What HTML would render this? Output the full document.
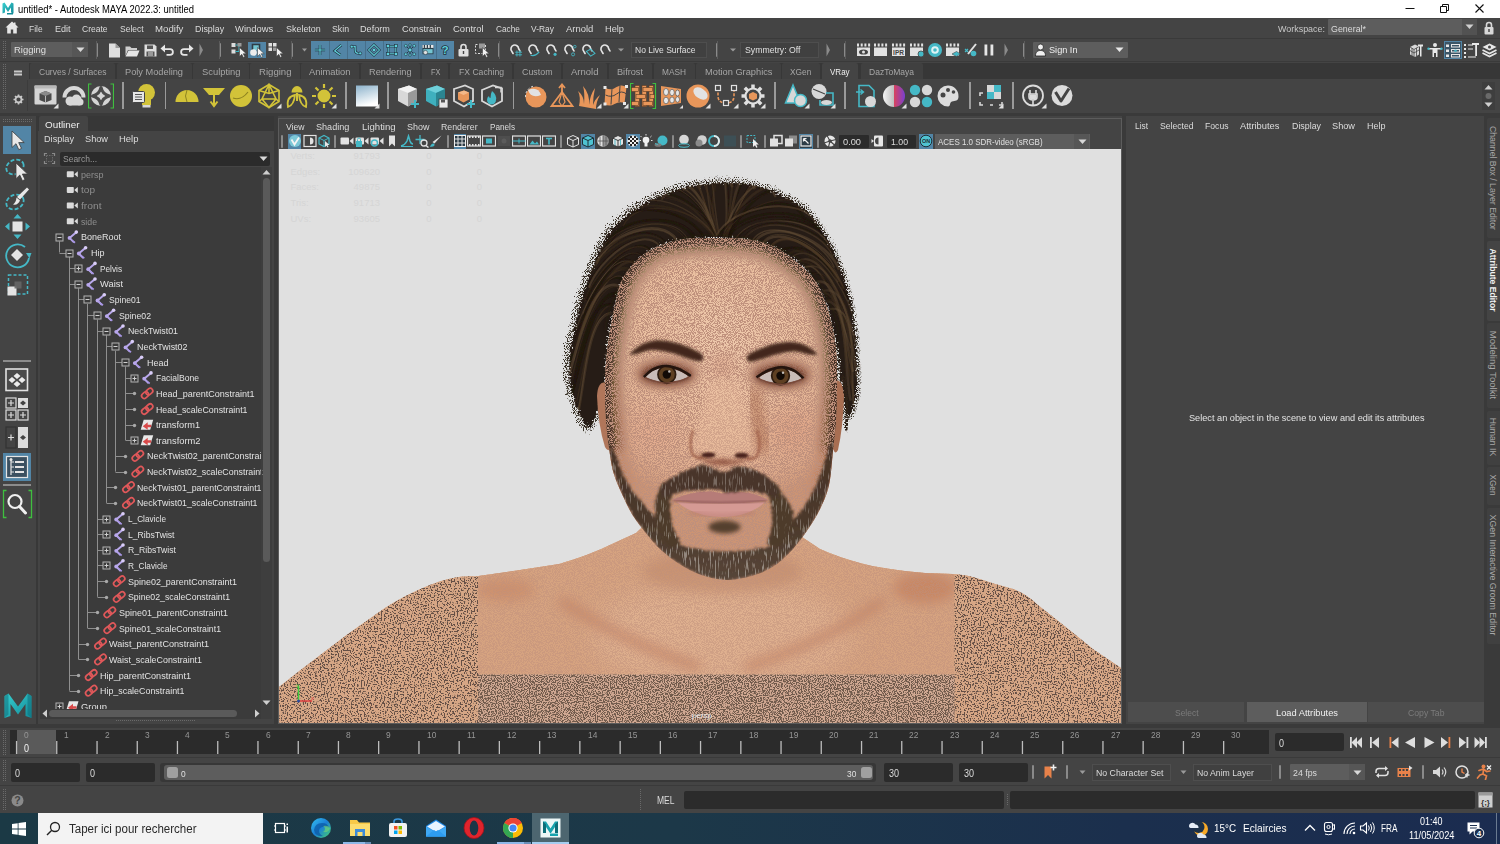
<!DOCTYPE html>
<html lang="en"><head><meta charset="utf-8"><title>untitled* - Autodesk MAYA 2022.3: untitled</title>
<style>
html,body{margin:0;padding:0;background:#444;overflow:hidden}
body{width:1500px;height:844px;position:relative;font-family:"Liberation Sans",sans-serif;}
#app{position:absolute;left:0;top:0;width:1500px;height:844px;overflow:hidden;background:#444}
.r{position:absolute;display:block}
.t{position:absolute;white-space:nowrap;font-family:"Liberation Sans",sans-serif;transform-origin:0 50%}
</style></head><body><div id="app">
<div class="r" style="left:0px;top:0px;width:1500px;height:18px;background:#ffffff;"></div>
<svg class="r" style="left:2px;top:2px;" width="12" height="13" viewBox="0 0 12 13"><defs><linearGradient id="mg0" x1="0" y1="0" x2="1" y2="1"><stop offset="0" stop-color="#3ad0d0"/><stop offset="1" stop-color="#128a98"/></linearGradient></defs><path d="M0.5 11.5V1.5l2-1 3.5 5.5 3.5-5.5 2 1v10l-2.5-1V5.5L6 10 3 5.5v5z" fill="url(#mg0)"/><rect x="5" y="11" width="6" height="1.5" fill="#128a98"/></svg>
<span class="t" style="left:18.0px;top:3.1px;font-size:10px;line-height:14px;color:#000;transform:scaleX(0.9441);">untitled* - Autodesk MAYA 2022.3: untitled</span>
<svg class="r" style="left:1400px;top:0px;" width="100" height="18" viewBox="0 0 100 18"><path d="M5.5 8.5h9" stroke="#111" stroke-width="1" fill="none"/><path d="M40.5 6.5h6v6h-6zM42.5 6.5v-2h6v6h-2" stroke="#111" stroke-width="1" fill="none"/><path d="M75.5 4.5l8 8M83.5 4.5l-8 8" stroke="#111" stroke-width="1.1" fill="none"/></svg>
<div class="r" style="left:0px;top:18px;width:1500px;height:795px;background:#444444;"></div>
<svg class="r" style="left:5px;top:21px;" width="14" height="13" viewBox="0 0 14 13"><path d="M7 0.5L0.5 6.5h1.7v6h3.6V8.5h2.4v4h3.6v-6h1.7L10.5 3.6V1.5H9v0.8z" fill="#e6e6e6"/></svg>
<span class="t" style="left:29.0px;top:23.0px;font-size:9.3px;line-height:13.3px;color:#dcdcdc;transform:scaleX(0.9079);">File</span>
<span class="t" style="left:54.6px;top:23.0px;font-size:9.3px;line-height:13.3px;color:#dcdcdc;transform:scaleX(0.9738);">Edit</span>
<span class="t" style="left:82.2px;top:23.0px;font-size:9.3px;line-height:13.3px;color:#dcdcdc;transform:scaleX(0.9174);">Create</span>
<span class="t" style="left:119.5px;top:23.0px;font-size:9.3px;line-height:13.3px;color:#dcdcdc;transform:scaleX(0.9134);">Select</span>
<span class="t" style="left:154.6px;top:23.0px;font-size:9.3px;line-height:13.3px;color:#dcdcdc;transform:scaleX(1.0372);">Modify</span>
<span class="t" style="left:194.5px;top:23.0px;font-size:9.3px;line-height:13.3px;color:#dcdcdc;transform:scaleX(0.9546);">Display</span>
<span class="t" style="left:235.0px;top:23.0px;font-size:9.3px;line-height:13.3px;color:#dcdcdc;transform:scaleX(1.0129);">Windows</span>
<span class="t" style="left:285.5px;top:23.0px;font-size:9.3px;line-height:13.3px;color:#dcdcdc;transform:scaleX(0.9619);">Skeleton</span>
<span class="t" style="left:332.0px;top:23.0px;font-size:9.3px;line-height:13.3px;color:#dcdcdc;transform:scaleX(0.9400);">Skin</span>
<span class="t" style="left:360.4px;top:23.0px;font-size:9.3px;line-height:13.3px;color:#dcdcdc;transform:scaleX(0.9810);">Deform</span>
<span class="t" style="left:402.3px;top:23.0px;font-size:9.3px;line-height:13.3px;color:#dcdcdc;transform:scaleX(0.9902);">Constrain</span>
<span class="t" style="left:453.2px;top:23.0px;font-size:9.3px;line-height:13.3px;color:#dcdcdc;transform:scaleX(1.0210);">Control</span>
<span class="t" style="left:495.5px;top:23.0px;font-size:9.3px;line-height:13.3px;color:#dcdcdc;transform:scaleX(0.8894);">Cache</span>
<span class="t" style="left:531.1px;top:23.0px;font-size:9.3px;line-height:13.3px;color:#dcdcdc;transform:scaleX(0.9045);">V-Ray</span>
<span class="t" style="left:565.7px;top:23.0px;font-size:9.3px;line-height:13.3px;color:#dcdcdc;transform:scaleX(1.0159);">Arnold</span>
<span class="t" style="left:604.6px;top:23.0px;font-size:9.3px;line-height:13.3px;color:#dcdcdc;transform:scaleX(0.9937);">Help</span>
<span class="t" style="left:1278.0px;top:23.0px;font-size:9.3px;line-height:13.3px;color:#c8c8c8;transform:scaleX(0.9609);">Workspace:</span>
<div class="r" style="left:1328px;top:19px;width:149px;height:16px;background:#5d5d5d;border-radius:1px"></div>
<div class="r" style="left:1462px;top:19px;width:15px;height:16px;background:#525252;"></div>
<span class="t" style="left:1331.0px;top:22.5px;font-size:9.3px;line-height:13.3px;color:#dcdcdc;transform:scaleX(0.9539);">General*</span>
<svg class="r" style="left:1465px;top:24px;" width="9" height="6" viewBox="0 0 9 6"><path d="M0.5 0.5h8L4.5 5z" fill="#d0d0d0"/></svg>
<svg class="r" style="left:1484px;top:21px;" width="10" height="14" viewBox="0 0 10 14"><path d="M2.5 6V4a2.5 2.5 0 0 1 5 0v2" stroke="#d8d8d8" stroke-width="1.6" fill="none"/><rect x="0.5" y="6" width="9" height="7.5" rx="1" fill="#d8d8d8"/><rect x="4.3" y="8" width="1.4" height="3" fill="#444"/></svg>
<div class="r" style="left:0px;top:38px;width:1500px;height:1px;background:#3a3a3a;"></div>
<svg class="r" style="left:2px;top:41px;" width="6" height="18" viewBox="0 0 6 18"><g fill="#6a6a6a"><rect x="1" y="0" width="1" height="1"/><rect x="1" y="2" width="1" height="1"/><rect x="1" y="4" width="1" height="1"/><rect x="1" y="6" width="1" height="1"/><rect x="1" y="8" width="1" height="1"/><rect x="1" y="10" width="1" height="1"/><rect x="1" y="12" width="1" height="1"/><rect x="1" y="14" width="1" height="1"/><rect x="1" y="16" width="1" height="1"/><rect x="3" y="0" width="1" height="1"/><rect x="3" y="2" width="1" height="1"/><rect x="3" y="4" width="1" height="1"/><rect x="3" y="6" width="1" height="1"/><rect x="3" y="8" width="1" height="1"/><rect x="3" y="10" width="1" height="1"/><rect x="3" y="12" width="1" height="1"/><rect x="3" y="14" width="1" height="1"/><rect x="3" y="16" width="1" height="1"/></g></svg>
<div class="r" style="left:11px;top:42px;width:77px;height:15px;background:#5d5d5d;border-radius:1px"></div>
<div class="r" style="left:72px;top:42px;width:16px;height:15px;background:#565656;"></div>
<span class="t" style="left:13.5px;top:44.2px;font-size:9.3px;line-height:13.3px;color:#e0e0e0;transform:scaleX(1.0150);">Rigging</span>
<svg class="r" style="left:76px;top:47px;" width="9" height="6" viewBox="0 0 9 6"><path d="M0.5 0.5h8L4.5 5z" fill="#d8d8d8"/></svg>
<div class="r" style="left:95.5px;top:43px;width:2px;height:14px;background:#8a8a8a;border-radius:1px"></div><div class="r" style="left:96px;top:41px;width:1px;height:18px;background:#5c5c5c;"></div>
<svg class="r" style="left:108px;top:43px;" width="13" height="15" viewBox="0 0 13 15"><path d="M1 0.5h6.5L12 5v9.5H1z" fill="#dedede"/><path d="M7.5 0.5V5H12z" fill="#9a9a9a"/></svg>
<svg class="r" style="left:125px;top:44px;" width="15" height="13" viewBox="0 0 15 13"><path d="M0.5 2.5h4.5l1.5 1.5H12v2H3L0.5 12z" fill="#cfcfcf"/><path d="M3.5 6.5H14.5L12 12.5H0.5z" fill="#e6e6e6"/></svg>
<svg class="r" style="left:144px;top:44px;" width="13" height="13" viewBox="0 0 13 13"><path d="M0.5 0.5h10L12.5 2.5v10h-12z" fill="#dedede"/><rect x="3" y="1.5" width="6" height="3.5" fill="#555"/><rect x="2.5" y="7.5" width="8" height="5" fill="#555"/><rect x="4" y="8.5" width="5" height="1" fill="#dedede"/><rect x="4" y="10.5" width="5" height="1" fill="#dedede"/></svg>
<svg class="r" style="left:160px;top:44px;" width="15" height="12" viewBox="0 0 15 12"><path d="M5 0.5L0.5 4.5 5 8.5V6h5a2 2 0 0 1 0 4H6.5v1.8H10a3.8 3.8 0 0 0 0-7.6H5z" fill="#e6e6e6"/></svg>
<svg class="r" style="left:179px;top:44px;" width="15" height="12" viewBox="0 0 15 12"><path d="M10 0.5L14.5 4.5 10 8.5V6H5a2 2 0 0 0 0 4h3.5v1.8H5a3.8 3.8 0 0 1 0-7.6h5z" fill="#e6e6e6"/></svg>
<svg class="r" style="left:199px;top:43px;" width="5" height="14" viewBox="0 0 5 14"><path d="M0.5 0.5L4 7 0.5 13.5z" fill="#8a8a8a"/></svg>
<div class="r" style="left:218.5px;top:43px;width:2px;height:14px;background:#8a8a8a;border-radius:1px"></div><div class="r" style="left:219px;top:41px;width:1px;height:18px;background:#5c5c5c;"></div>
<svg class="r" style="left:231px;top:42px;" width="15" height="16" viewBox="0 0 15 16"><rect x="0.5" y="1" width="4" height="4" fill="#dcdcdc"/><rect x="0.5" y="7.5" width="4" height="4" fill="#dcdcdc"/><path d="M4.5 3h3.5v6.5H4.5" stroke="#3bb3c2" fill="none"/><rect x="6.5" y="1" width="4" height="3.5" fill="#9a9a9a"/><path d="M8.5 5.5v9l2.3-2.2 1.6 3.2 1.4-0.7-1.6-3.1h3z" fill="#f2f2f2" stroke="#333" stroke-width=".5"/></svg>
<div class="r" style="left:248px;top:42px;width:18px;height:16px;background:#5285a6;"></div>
<svg class="r" style="left:249px;top:42px;" width="16" height="16" viewBox="0 0 16 16"><path d="M3.5 8V2.5h7V8" stroke="#2f3d46" stroke-width="1.6" fill="#74c6d2"/><circle cx="4.5" cy="10.5" r="3.3" fill="#ececec"/><path d="M8.5 5.5v9l2.3-2.2 1.6 3.2 1.4-0.7-1.6-3.1h3z" fill="#f2f2f2" stroke="#333" stroke-width=".5"/></svg>
<svg class="r" style="left:268px;top:42px;" width="15" height="16" viewBox="0 0 15 16"><g fill="#e0e0e0"><rect x="0.5" y="1" width="3.5" height="3.5"/><rect x="5" y="1" width="3.5" height="3.5"/><rect x="0.5" y="5.5" width="3.5" height="3.5"/></g><rect x="5" y="5.5" width="3.5" height="3.5" fill="#9a9a9a"/><path d="M8.5 5.5v9l2.3-2.2 1.6 3.2 1.4-0.7-1.6-3.1h3z" fill="#f2f2f2" stroke="#333" stroke-width=".5"/></svg>
<div class="r" style="left:290.5px;top:43px;width:2px;height:14px;background:#8a8a8a;border-radius:1px"></div><div class="r" style="left:291px;top:41px;width:1px;height:18px;background:#5c5c5c;"></div>
<svg class="r" style="left:302px;top:48px;" width="5" height="4" viewBox="0 0 5 4"><path d="M0 0.5h5L2.5 3.5z" fill="#9a9a9a"/></svg>
<div class="r" style="left:311px;top:41px;width:143px;height:18px;background:#5285a6;"></div>
<div class="r" style="left:328.9px;top:41px;width:1px;height:18px;background:#466f8b;"></div>
<div class="r" style="left:346.8px;top:41px;width:1px;height:18px;background:#466f8b;"></div>
<div class="r" style="left:364.7px;top:41px;width:1px;height:18px;background:#466f8b;"></div>
<div class="r" style="left:382.6px;top:41px;width:1px;height:18px;background:#466f8b;"></div>
<div class="r" style="left:400.5px;top:41px;width:1px;height:18px;background:#466f8b;"></div>
<div class="r" style="left:418.4px;top:41px;width:1px;height:18px;background:#466f8b;"></div>
<div class="r" style="left:436.3px;top:41px;width:1px;height:18px;background:#466f8b;"></div>
<svg class="r" style="left:312px;top:42px;" width="16" height="16" viewBox="0 0 16 16"><g transform="translate(8 8) scale(.84) translate(-8 -8)"><path d="M8 2v12M2 8h12" stroke="#1f2f3a" stroke-width="3"/><path d="M8 2v12M2 8h12" stroke="#5fd0dc" stroke-width="1.4"/></g></svg>
<svg class="r" style="left:330px;top:42px;" width="16" height="16" viewBox="0 0 16 16"><g transform="translate(8 8) scale(.84) translate(-8 -8)"><path d="M12 2L4 9l7 5" stroke="#1f2f3a" stroke-width="3" fill="none"/><path d="M12 2L4 9l7 5" stroke="#5fd0dc" stroke-width="1.4" fill="none"/></g></svg>
<svg class="r" style="left:348px;top:42px;" width="16" height="16" viewBox="0 0 16 16"><g transform="translate(8 8) scale(.84) translate(-8 -8)"><path d="M2 4h5v4q0 4 4 4h3" stroke="#1f2f3a" stroke-width="3" fill="none"/><path d="M2 4h5v4q0 4 4 4h3" stroke="#5fd0dc" stroke-width="1.4" fill="none"/><circle cx="3" cy="4" r="1.8" fill="#5fd0dc" stroke="#1f2f3a" stroke-width=".8"/><circle cx="13" cy="12" r="1.8" fill="#5fd0dc" stroke="#1f2f3a" stroke-width=".8"/></g></svg>
<svg class="r" style="left:366px;top:42px;" width="16" height="16" viewBox="0 0 16 16"><g transform="translate(8 8) scale(.84) translate(-8 -8)"><path d="M8 1.5L14.5 8 8 14.5 1.5 8z" stroke="#1f2f3a" stroke-width="2.6" fill="none"/><path d="M8 1.5L14.5 8 8 14.5 1.5 8z" stroke="#5fd0dc" stroke-width="1.2" fill="none"/><path d="M8 5.5L10.5 8 8 10.5 5.5 8z" fill="#5fd0dc" stroke="#1f2f3a" stroke-width=".7"/></g></svg>
<svg class="r" style="left:384px;top:42px;" width="16" height="16" viewBox="0 0 16 16"><g transform="translate(8 8) scale(.84) translate(-8 -8)"><rect x="3.5" y="3.5" width="9" height="9" stroke="#1f2f3a" stroke-width="2.6" fill="none"/><rect x="3.5" y="3.5" width="9" height="9" stroke="#5fd0dc" stroke-width="1.2" fill="none"/><g fill="#5fd0dc" stroke="#1f2f3a" stroke-width=".7"><rect x="1.5" y="1.5" width="3.5" height="3.5"/><rect x="11" y="1.5" width="3.5" height="3.5"/><rect x="1.5" y="11" width="3.5" height="3.5"/><rect x="11" y="11" width="3.5" height="3.5"/></g></g></svg>
<svg class="r" style="left:401.5px;top:42px;" width="16" height="16" viewBox="0 0 16 16"><g transform="translate(8 8) scale(.84) translate(-8 -8)"><g stroke="#1f2f3a" stroke-width="1"><path d="M8 8L3 3M8 8l5-5M8 8l-5 5M8 8l5 5M8 8V2M8 8v6"/></g><g fill="#5fd0dc" stroke="#1f2f3a" stroke-width=".7"><circle cx="8" cy="8" r="2.3"/><circle cx="3" cy="3" r="1.7"/><circle cx="13" cy="3" r="1.7"/><circle cx="3" cy="13" r="1.7"/><circle cx="13" cy="13" r="1.7"/><circle cx="8" cy="2" r="1.5"/><circle cx="8" cy="14" r="1.5"/></g></g></svg>
<svg class="r" style="left:419.5px;top:42px;" width="16" height="16" viewBox="0 0 16 16"><g transform="translate(8 8) scale(.84) translate(-8 -8)"><rect x="1.5" y="2" width="13" height="11" fill="#2d3f4a"/><rect x="1.5" y="2" width="13" height="3.5" fill="#e8e8e8"/><g fill="#2d3f4a"><rect x="3" y="2" width="1.5" height="3.5"/><rect x="6.5" y="2" width="1.5" height="3.5"/><rect x="10" y="2" width="1.5" height="3.5"/></g><rect x="2.5" y="7" width="11" height="5" fill="#74c6d2"/><circle cx="5" cy="11" r="2.5" fill="#e0e0e0" stroke="#2d3f4a" stroke-width=".7"/></g></svg>
<svg class="r" style="left:437px;top:42px;" width="16" height="16" viewBox="0 0 16 16"><g transform="translate(8 8) scale(.84) translate(-8 -8)"><text x="8" y="13" font-size="14" font-family="Liberation Sans, sans-serif" font-weight="bold" text-anchor="middle" fill="#1f2f3a" stroke="#1f2f3a" stroke-width="1.8">?</text><text x="8" y="13" font-size="14" font-family="Liberation Sans, sans-serif" font-weight="bold" text-anchor="middle" fill="#5fd0dc">?</text></g></svg>
<svg class="r" style="left:458px;top:43px;" width="11" height="14" viewBox="0 0 11 14"><path d="M3 6V4a2.5 2.5 0 0 1 5 0v2" stroke="#e0e0e0" stroke-width="1.6" fill="none"/><rect x="0.5" y="6" width="10" height="7.5" rx="1" fill="#e0e0e0"/><rect x="4.8" y="8" width="1.4" height="3" fill="#444"/></svg>
<svg class="r" style="left:474px;top:42px;" width="16" height="16" viewBox="0 0 16 16"><rect x="1.5" y="2.5" width="10" height="9" stroke="#dcdcdc" stroke-dasharray="2 1.5" fill="none"/><rect x="5" y="1.5" width="6" height="5" fill="#9a9a9a"/><path d="M8.5 5.5v9l2.3-2.2 1.6 3.2 1.4-0.7-1.6-3.1h3z" fill="#f2f2f2" stroke="#333" stroke-width=".5"/></svg>
<div class="r" style="left:498px;top:43px;width:2px;height:14px;background:#8a8a8a;border-radius:1px"></div><div class="r" style="left:498.5px;top:41px;width:1px;height:18px;background:#5c5c5c;"></div>
<svg class="r" style="left:508px;top:42px;" width="17" height="17" viewBox="0 0 17 17"><g transform="translate(8.5 8.5) scale(.86) translate(-8.5 -8.5)"><path d="M3 9.5A4.5 4.5 0 1 1 11 6.5l1.5 2.5M3 9.5l1.5 2.5" stroke="#e4e4e4" stroke-width="1.9" fill="none" stroke-linecap="round"/><path d="M7 10.5h8M7 13.5h8M9 8.5v7M12.5 8.5v7" stroke="#45b8c6" stroke-width="1"/></g></svg>
<svg class="r" style="left:526px;top:42px;" width="17" height="17" viewBox="0 0 17 17"><g transform="translate(8.5 8.5) scale(.86) translate(-8.5 -8.5)"><path d="M3 9.5A4.5 4.5 0 1 1 11 6.5l1.5 2.5M3 9.5l1.5 2.5" stroke="#e4e4e4" stroke-width="1.9" fill="none" stroke-linecap="round"/><path d="M4 14q5 2 10-4" stroke="#45b8c6" stroke-width="1.4" fill="none"/></g></svg>
<svg class="r" style="left:544px;top:42px;" width="17" height="17" viewBox="0 0 17 17"><g transform="translate(8.5 8.5) scale(.86) translate(-8.5 -8.5)"><path d="M3 9.5A4.5 4.5 0 1 1 11 6.5l1.5 2.5M3 9.5l1.5 2.5" stroke="#e4e4e4" stroke-width="1.9" fill="none" stroke-linecap="round"/><circle cx="11.5" cy="13" r="1.8" fill="#45b8c6"/></g></svg>
<svg class="r" style="left:562px;top:42px;" width="17" height="17" viewBox="0 0 17 17"><g transform="translate(8.5 8.5) scale(.86) translate(-8.5 -8.5)"><path d="M3 9.5A4.5 4.5 0 1 1 11 6.5l1.5 2.5M3 9.5l1.5 2.5" stroke="#e4e4e4" stroke-width="1.9" fill="none" stroke-linecap="round"/><circle cx="11.5" cy="13" r="1.8" fill="none" stroke="#45b8c6"/><circle cx="13.5" cy="4" r="1.5" fill="none" stroke="#45b8c6"/></g></svg>
<svg class="r" style="left:580px;top:42px;" width="17" height="17" viewBox="0 0 17 17"><g transform="translate(8.5 8.5) scale(.86) translate(-8.5 -8.5)"><path d="M3 9.5A4.5 4.5 0 1 1 11 6.5l1.5 2.5M3 9.5l1.5 2.5" stroke="#e4e4e4" stroke-width="1.9" fill="none" stroke-linecap="round"/><path d="M6 9.5l5-2.5 5 5-5 3z" fill="none" stroke="#45b8c6" stroke-width="1.2"/></g></svg>
<svg class="r" style="left:598px;top:42px;" width="17" height="17" viewBox="0 0 17 17"><g transform="translate(8.5 8.5) scale(.86) translate(-8.5 -8.5)"><path d="M3 9.5A4.5 4.5 0 1 1 11 6.5l1.5 2.5M3 9.5l1.5 2.5" stroke="#e4e4e4" stroke-width="1.9" fill="none" stroke-linecap="round"/></g></svg>
<svg class="r" style="left:618px;top:48px;" width="6" height="4" viewBox="0 0 6 4"><path d="M0 0.5h6L3 3.5z" fill="#9a9a9a"/></svg>
<div class="r" style="left:631px;top:42px;width:76px;height:16px;background:#404040;border:1px solid #4e4e4e;box-sizing:border-box"></div>
<span class="t" style="left:634.5px;top:44.2px;font-size:9.3px;line-height:13.3px;color:#e0e0e0;transform:scaleX(0.9147);">No Live Surface</span>
<div class="r" style="left:716px;top:43px;width:2px;height:14px;background:#8a8a8a;border-radius:1px"></div><div class="r" style="left:716.5px;top:41px;width:1px;height:18px;background:#5c5c5c;"></div>
<svg class="r" style="left:730px;top:48px;" width="6" height="4" viewBox="0 0 6 4"><path d="M0 0.5h6L3 3.5z" fill="#9a9a9a"/></svg>
<div class="r" style="left:740px;top:42px;width:78.5px;height:16px;background:#404040;border:1px solid #4e4e4e;box-sizing:border-box"></div>
<span class="t" style="left:745.0px;top:44.2px;font-size:9.3px;line-height:13.3px;color:#e0e0e0;transform:scaleX(0.9370);">Symmetry: Off</span>
<svg class="r" style="left:826px;top:43px;" width="5" height="14" viewBox="0 0 5 14"><path d="M0.5 0.5L4 7 0.5 13.5z" fill="#8a8a8a"/></svg>
<div class="r" style="left:844px;top:43px;width:2px;height:14px;background:#8a8a8a;border-radius:1px"></div><div class="r" style="left:844.5px;top:41px;width:1px;height:18px;background:#5c5c5c;"></div>
<svg class="r" style="left:855.5px;top:42px;" width="17" height="16" viewBox="0 0 17 16"><g fill="#e2e2e2"><rect x="1" y="5.5" width="13" height="8.5"/><rect x="1" y="1.5" width="2" height="3"/><rect x="4.7" y="1.5" width="2" height="3"/><rect x="8.4" y="1.5" width="2" height="3"/><rect x="12.1" y="1.5" width="2" height="3"/></g><ellipse cx="7.5" cy="10" rx="4.5" ry="2.6" fill="#444"/><circle cx="7.5" cy="10" r="1.5" fill="#e2e2e2"/></svg>
<svg class="r" style="left:873px;top:42px;" width="17" height="16" viewBox="0 0 17 16"><g fill="#e2e2e2"><rect x="1" y="5.5" width="13" height="8.5"/><rect x="1" y="1.5" width="2" height="3"/><rect x="4.7" y="1.5" width="2" height="3"/><rect x="8.4" y="1.5" width="2" height="3"/><rect x="12.1" y="1.5" width="2" height="3"/></g></svg>
<svg class="r" style="left:891px;top:42px;" width="17" height="16" viewBox="0 0 17 16"><g fill="#e2e2e2"><rect x="1" y="5.5" width="13" height="8.5"/><rect x="1" y="1.5" width="2" height="3"/><rect x="4.7" y="1.5" width="2" height="3"/><rect x="8.4" y="1.5" width="2" height="3"/><rect x="12.1" y="1.5" width="2" height="3"/></g><text x="7.5" y="13" font-size="6.5" font-weight="bold" font-family="Liberation Sans, sans-serif" text-anchor="middle" fill="#444">IPR</text></svg>
<svg class="r" style="left:909px;top:42px;" width="17" height="16" viewBox="0 0 17 16"><g fill="#e2e2e2"><rect x="1" y="5.5" width="13" height="8.5"/><rect x="1" y="1.5" width="2" height="3"/><rect x="4.7" y="1.5" width="2" height="3"/><rect x="8.4" y="1.5" width="2" height="3"/><rect x="12.1" y="1.5" width="2" height="3"/></g><circle cx="12" cy="12" r="3" fill="#45b8c6" stroke="#444" stroke-width=".8"/></svg>
<svg class="r" style="left:926px;top:42px;" width="18" height="16" viewBox="0 0 18 16"><circle cx="9" cy="8" r="7" fill="#45b8c6"/><circle cx="9" cy="8" r="3.8" fill="#dff3f5"/><circle cx="9" cy="8" r="1.8" fill="#45b8c6"/></svg>
<svg class="r" style="left:945px;top:42px;" width="17" height="16" viewBox="0 0 17 16"><g fill="#e2e2e2"><rect x="1" y="5.5" width="13" height="8.5"/><rect x="1" y="1.5" width="2" height="3"/><rect x="4.7" y="1.5" width="2" height="3"/><rect x="8.4" y="1.5" width="2" height="3"/><rect x="12.1" y="1.5" width="2" height="3"/></g><path d="M7 12l4.5-2.5 4 2.5-4 2.5z" fill="#45b8c6" stroke="#444" stroke-width=".6"/></svg>
<svg class="r" style="left:963px;top:42px;" width="17" height="16" viewBox="0 0 17 16"><path d="M13 2L5 12" stroke="#e2e2e2" stroke-width="2"/><circle cx="10.5" cy="11.5" r="2.8" fill="#45b8c6"/><path d="M2 7l3 3M5 7l-3 3" stroke="#45b8c6" stroke-width="1.2"/></svg>
<svg class="r" style="left:983px;top:44px;" width="12" height="12" viewBox="0 0 12 12"><rect x="1.5" y="0.5" width="2.8" height="11" fill="#e6e6e6"/><rect x="7.5" y="0.5" width="2.8" height="11" fill="#e6e6e6"/></svg>
<svg class="r" style="left:1004px;top:43px;" width="5" height="14" viewBox="0 0 5 14"><path d="M0.5 0.5L4 7 0.5 13.5z" fill="#8a8a8a"/></svg>
<div class="r" style="left:1023px;top:43px;width:2px;height:14px;background:#8a8a8a;border-radius:1px"></div><div class="r" style="left:1023.5px;top:41px;width:1px;height:18px;background:#5c5c5c;"></div>
<div class="r" style="left:1033px;top:42px;width:94.5px;height:16px;background:#5d5d5d;border-radius:1px"></div>
<svg class="r" style="left:1035px;top:43px;" width="11" height="14" viewBox="0 0 11 14"><circle cx="5.5" cy="4" r="3" fill="#f0f0f0" stroke="#222" stroke-width=".8"/><path d="M0.5 13c0-4 2-5.5 5-5.5s5 1.5 5 5.5z" fill="#f0f0f0" stroke="#222" stroke-width=".8"/></svg>
<span class="t" style="left:1049.0px;top:44.2px;font-size:9.3px;line-height:13.3px;color:#efefef;transform:scaleX(0.9847);">Sign In</span>
<svg class="r" style="left:1115px;top:47px;" width="10" height="6" viewBox="0 0 10 6"><path d="M0.5 0.5h8L4.5 5z" fill="#e8e8e8"/></svg>
<svg class="r" style="left:1408px;top:42px;" width="17" height="17" viewBox="0 0 17 17"><path d="M2 5l5-2.5 4 2v8l-4 2.5-5-2.5z" fill="#d8d8d8"/><path d="M2 5l4 2.5 5-3M6 7.5v8M4 6v8M8.5 6v8M2 8.5l4 2.5 5-3" stroke="#444" stroke-width=".8" fill="none"/><path d="M10 2.5h5v2h-1.5v10h-1.5V4.5H10z" fill="#e8e8e8"/></svg>
<svg class="r" style="left:1427px;top:42px;" width="17" height="17" viewBox="0 0 17 17"><circle cx="8" cy="3" r="2" fill="#e8e8e8"/><path d="M2 6h12v1.6H10.5V15H9v-4H7v4H5.5V7.6H2z" fill="#e8e8e8"/><circle cx="1.5" cy="6.8" r="1.2" fill="#45b8c6"/><circle cx="14.5" cy="6.8" r="1.2" fill="#45b8c6"/></svg>
<div class="r" style="left:1444px;top:41px;width:18px;height:18px;background:#3c5566;border:1px solid #5285a6;box-sizing:border-box"></div>
<svg class="r" style="left:1445px;top:42px;" width="17" height="17" viewBox="0 0 17 17"><g fill="none" stroke="#e8e8e8" stroke-width="1"><rect x="6.5" y="2.5" width="8" height="2.5"/><rect x="6.5" y="7.5" width="8" height="2.5"/><rect x="6.5" y="12.5" width="8" height="2.5"/></g><g fill="#e8e8e8"><rect x="1" y="2.5" width="3" height="2.5"/><rect x="1" y="7.5" width="3" height="2.5"/><rect x="1" y="12.5" width="3" height="2.5"/></g><circle cx="10.5" cy="8.8" r="1.3" fill="#45b8c6"/></svg>
<svg class="r" style="left:1463px;top:42px;" width="17" height="17" viewBox="0 0 17 17"><g fill="#e8e8e8"><rect x="1" y="2" width="2" height="2"/><rect x="1" y="6" width="2" height="2"/><rect x="1" y="10" width="2" height="2"/><rect x="1" y="14" width="2" height="2"/><rect x="5" y="2.5" width="5" height="1"/><rect x="5" y="6.5" width="5" height="1"/><rect x="5" y="14.5" width="8" height="1"/><path d="M9 1h7v2h-2v11h-1.8V3H9z"/></g></svg>
<svg class="r" style="left:1481px;top:42px;" width="17" height="17" viewBox="0 0 17 17"><path d="M8.5 1.5l7 3.5-7 3.5-7-3.5z" fill="#e8e8e8"/><path d="M1.5 8l7 3.5 7-3.5M1.5 11l7 3.5 7-3.5" stroke="#e8e8e8" stroke-width="1.6" fill="none"/><circle cx="8.5" cy="5" r="1.5" fill="#444"/></svg>
<div class="r" style="left:0px;top:61px;width:1500px;height:1px;background:#3a3a3a;"></div>
<div class="r" style="left:29px;top:63px;width:1471px;height:16px;background:#373737;"></div>
<svg class="r" style="left:2px;top:64px;" width="6" height="46" viewBox="0 0 6 46"><g fill="#6a6a6a"><rect x="1" y="0" width="1" height="1"/><rect x="1" y="2" width="1" height="1"/><rect x="1" y="4" width="1" height="1"/><rect x="1" y="6" width="1" height="1"/><rect x="1" y="8" width="1" height="1"/><rect x="1" y="10" width="1" height="1"/><rect x="1" y="12" width="1" height="1"/><rect x="1" y="14" width="1" height="1"/><rect x="1" y="16" width="1" height="1"/><rect x="1" y="18" width="1" height="1"/><rect x="1" y="20" width="1" height="1"/><rect x="1" y="22" width="1" height="1"/><rect x="1" y="24" width="1" height="1"/><rect x="1" y="26" width="1" height="1"/><rect x="1" y="28" width="1" height="1"/><rect x="1" y="30" width="1" height="1"/><rect x="1" y="32" width="1" height="1"/><rect x="1" y="34" width="1" height="1"/><rect x="1" y="36" width="1" height="1"/><rect x="1" y="38" width="1" height="1"/><rect x="1" y="40" width="1" height="1"/><rect x="1" y="42" width="1" height="1"/><rect x="1" y="44" width="1" height="1"/><rect x="3" y="0" width="1" height="1"/><rect x="3" y="2" width="1" height="1"/><rect x="3" y="4" width="1" height="1"/><rect x="3" y="6" width="1" height="1"/><rect x="3" y="8" width="1" height="1"/><rect x="3" y="10" width="1" height="1"/><rect x="3" y="12" width="1" height="1"/><rect x="3" y="14" width="1" height="1"/><rect x="3" y="16" width="1" height="1"/><rect x="3" y="18" width="1" height="1"/><rect x="3" y="20" width="1" height="1"/><rect x="3" y="22" width="1" height="1"/><rect x="3" y="24" width="1" height="1"/><rect x="3" y="26" width="1" height="1"/><rect x="3" y="28" width="1" height="1"/><rect x="3" y="30" width="1" height="1"/><rect x="3" y="32" width="1" height="1"/><rect x="3" y="34" width="1" height="1"/><rect x="3" y="36" width="1" height="1"/><rect x="3" y="38" width="1" height="1"/><rect x="3" y="40" width="1" height="1"/><rect x="3" y="42" width="1" height="1"/><rect x="3" y="44" width="1" height="1"/></g></svg>
<div class="r" style="left:30px;top:63px;width:84.5px;height:16px;background:#404040;border-radius:2px 2px 0 0"></div>
<span class="t" style="left:38.5px;top:66.2px;font-size:9.3px;line-height:13.3px;color:#a6a6a6;transform:scaleX(0.9136);">Curves / Surfaces</span>
<div class="r" style="left:116.5px;top:63px;width:75px;height:16px;background:#404040;border-radius:2px 2px 0 0"></div>
<span class="t" style="left:125.0px;top:66.2px;font-size:9.3px;line-height:13.3px;color:#a6a6a6;transform:scaleX(0.9932);">Poly Modeling</span>
<div class="r" style="left:193px;top:63px;width:55.5px;height:16px;background:#404040;border-radius:2px 2px 0 0"></div>
<span class="t" style="left:201.5px;top:66.2px;font-size:9.3px;line-height:13.3px;color:#a6a6a6;transform:scaleX(1.0067);">Sculpting</span>
<div class="r" style="left:250px;top:63px;width:49.5px;height:16px;background:#404040;border-radius:2px 2px 0 0"></div>
<span class="t" style="left:258.5px;top:66.2px;font-size:9.3px;line-height:13.3px;color:#a6a6a6;transform:scaleX(1.0309);">Rigging</span>
<div class="r" style="left:300.5px;top:63px;width:58.5px;height:16px;background:#404040;border-radius:2px 2px 0 0"></div>
<span class="t" style="left:309.0px;top:66.2px;font-size:9.3px;line-height:13.3px;color:#a6a6a6;transform:scaleX(1.0039);">Animation</span>
<div class="r" style="left:360.5px;top:63px;width:59.6px;height:16px;background:#404040;border-radius:2px 2px 0 0"></div>
<span class="t" style="left:369.0px;top:66.2px;font-size:9.3px;line-height:13.3px;color:#a6a6a6;transform:scaleX(0.9931);">Rendering</span>
<div class="r" style="left:422.1px;top:63px;width:26.4px;height:16px;background:#404040;border-radius:2px 2px 0 0"></div>
<span class="t" style="left:430.6px;top:66.2px;font-size:9.3px;line-height:13.3px;color:#a6a6a6;transform:scaleX(0.7913);">FX</span>
<div class="r" style="left:450px;top:63px;width:62px;height:16px;background:#404040;border-radius:2px 2px 0 0"></div>
<span class="t" style="left:458.5px;top:66.2px;font-size:9.3px;line-height:13.3px;color:#a6a6a6;transform:scaleX(0.9265);">FX Caching</span>
<div class="r" style="left:513.5px;top:63px;width:47.5px;height:16px;background:#404040;border-radius:2px 2px 0 0"></div>
<span class="t" style="left:522.0px;top:66.2px;font-size:9.3px;line-height:13.3px;color:#a6a6a6;transform:scaleX(0.9522);">Custom</span>
<div class="r" style="left:562.5px;top:63px;width:44.5px;height:16px;background:#404040;border-radius:2px 2px 0 0"></div>
<span class="t" style="left:571.0px;top:66.2px;font-size:9.3px;line-height:13.3px;color:#a6a6a6;transform:scaleX(1.0233);">Arnold</span>
<div class="r" style="left:608.5px;top:63px;width:43px;height:16px;background:#404040;border-radius:2px 2px 0 0"></div>
<span class="t" style="left:617.0px;top:66.2px;font-size:9.3px;line-height:13.3px;color:#a6a6a6;transform:scaleX(0.9868);">Bifrost</span>
<div class="r" style="left:653.5px;top:63px;width:41px;height:16px;background:#404040;border-radius:2px 2px 0 0"></div>
<span class="t" style="left:662.0px;top:66.2px;font-size:9.3px;line-height:13.3px;color:#a6a6a6;transform:scaleX(0.8935);">MASH</span>
<div class="r" style="left:696px;top:63px;width:84.5px;height:16px;background:#404040;border-radius:2px 2px 0 0"></div>
<span class="t" style="left:704.5px;top:66.2px;font-size:9.3px;line-height:13.3px;color:#a6a6a6;transform:scaleX(0.9972);">Motion Graphics</span>
<div class="r" style="left:781.8px;top:63px;width:38.3px;height:16px;background:#404040;border-radius:2px 2px 0 0"></div>
<span class="t" style="left:790.3px;top:66.2px;font-size:9.3px;line-height:13.3px;color:#a6a6a6;transform:scaleX(0.8960);">XGen</span>
<div class="r" style="left:821.9px;top:63px;width:36.6px;height:16px;background:#444444;border-radius:2px 2px 0 0"></div>
<span class="t" style="left:830.4px;top:66.2px;font-size:9.3px;line-height:13.3px;color:#f0f0f0;transform:scaleX(0.8622);">VRay</span>
<div class="r" style="left:860.5px;top:63px;width:62px;height:16px;background:#404040;border-radius:2px 2px 0 0"></div>
<span class="t" style="left:869.0px;top:66.2px;font-size:9.3px;line-height:13.3px;color:#a6a6a6;transform:scaleX(0.9168);">DazToMaya</span>
<svg class="r" style="left:13px;top:69px;" width="10" height="8" viewBox="0 0 10 8"><rect x="1" y="1.5" width="8" height="2" fill="#c8c8c8"/><rect x="1" y="4.5" width="8" height="2" fill="#c8c8c8"/></svg>
<svg class="r" style="left:13px;top:94px;" width="11" height="11" viewBox="0 0 11 11"><circle cx="5.5" cy="5.5" r="3" fill="none" stroke="#c8c8c8" stroke-width="1.8"/><g stroke="#c8c8c8" stroke-width="1.6"><path d="M5.5 0.5v2M5.5 8.5v2M0.5 5.5h2M8.5 5.5h2M2 2l1.3 1.3M7.7 7.7L9 9M9 2L7.7 3.3M3.3 7.7L2 9"/></g></svg>
<div class="r" style="left:27px;top:80px;width:1px;height:31px;background:#3c3c3c;"></div>
<svg class="r" style="left:33px;top:82.5px;" width="26" height="26" viewBox="0 0 26 26"><rect x="1.5" y="2.5" width="22" height="19" rx="1" fill="#d4d4d4"/><rect x="1.5" y="2.5" width="22" height="3" fill="#b8b8b8"/><path d="M12.5 8l6 2.5v6.5l-6 2.5-6-2.5V10.5z" fill="#4a4a4a"/><path d="M12.5 8l6 2.5-6 2.5-6-2.5z" fill="#8a8a8a"/><path d="M12.5 13v6.5" stroke="#d4d4d4" stroke-width=".8"/><path d="M25.5 20.5v5h-5z" fill="#e0e0e0"/></svg>
<svg class="r" style="left:60.5px;top:82.5px;" width="26" height="26" viewBox="0 0 26 26"><path d="M3.5 14.5A9.5 9.5 0 0 1 22.5 14.5" stroke="#d8d8d8" stroke-width="4" fill="none"/><circle cx="9" cy="18" r="4.5" fill="#d8d8d8"/><circle cx="15.5" cy="16.5" r="5" fill="#d8d8d8"/><circle cx="19" cy="19" r="3.5" fill="#d8d8d8"/><rect x="7" y="18" width="13" height="4.5" rx="2" fill="#d8d8d8"/></svg>
<svg class="r" style="left:88px;top:82.5px;" width="26" height="26" viewBox="0 0 26 26"><path d="M3.5 1H0.5v24h3M22.5 1h3v24h-3" stroke="#3fbf3f" stroke-width="1.2" fill="none"/><circle cx="13" cy="13" r="10" fill="#d4d4d4"/><path d="M13 4.5Q14.5 11.5 21.5 13Q14.5 14.5 13 21.5Q11.5 14.5 4.5 13Q11.5 11.5 13 4.5z" fill="none" stroke="#4a4a4a" stroke-width="3.2" stroke-linejoin="round"/><path d="M13 9l1 3 3 1-3 1-1 3-1-3-3-1 3-1z" fill="#d4d4d4"/></svg>
<div class="r" style="left:122.2px;top:82px;width:1.6px;height:27px;background:#9a9a9a;"></div>
<svg class="r" style="left:131px;top:82.5px;" width="26" height="26" viewBox="0 0 26 26"><circle cx="15.5" cy="9.5" r="8.5" fill="#d2c339"/><rect x="11" y="15" width="9" height="7" fill="#d2c339"/><rect x="11.5" y="22" width="8" height="2.5" fill="#d8d8d8"/><rect x="1.5" y="8.5" width="12" height="11" rx="1" fill="#e6e6e6" stroke="#444" stroke-width="1"/><path d="M4 11.5h7M4 14h7M4 16.5h7" stroke="#555" stroke-width="1.2"/></svg>
<div class="r" style="left:164.7px;top:82px;width:1.6px;height:27px;background:#9a9a9a;"></div>
<svg class="r" style="left:173.5px;top:82.5px;" width="26" height="26" viewBox="0 0 26 26"><path d="M1.5 19A11.5 12 0 0 1 24.5 19z" fill="#d2c339"/><path d="M13 7q-3 6 0 12" stroke="#8d8320" fill="none"/></svg>
<svg class="r" style="left:200.7px;top:83px;" width="26" height="26" viewBox="0 0 26 26"><path d="M2 5h22l-6 7H8z" fill="#d2c339"/><path d="M13 12v10M9.5 18.5L13 23l3.5-4.5" stroke="#d2c339" stroke-width="2" fill="none"/></svg>
<svg class="r" style="left:228px;top:82.5px;" width="26" height="26" viewBox="0 0 26 26"><circle cx="13" cy="13" r="11" fill="#d2c339"/><path d="M5 15q8 3 15-6" stroke="#8d8320" stroke-width="1.2" fill="none"/></svg>
<svg class="r" style="left:256px;top:82.5px;" width="26" height="26" viewBox="0 0 26 26"><g fill="none" stroke="#d2c339" stroke-width="1.6"><path d="M13 1.5l10 6v11l-10 6-10-6v-11z"/><path d="M13 1.5L6 16h14zM3 7.5l10 3 10-3M6 16l7 8.5 7-8.5M3 18.5L6 16M23 18.5L20 16M13 10.5V1.5"/></g><path d="M25.5 20.5v5h-5z" fill="#e0e0e0"/></svg>
<svg class="r" style="left:283.5px;top:82.5px;" width="26" height="26" viewBox="0 0 26 26"><path d="M7.5 9.5A5.5 6.5 0 0 1 18.5 9.5z" fill="#d2c339"/><path d="M13 10v8" stroke="#d2c339" stroke-width="2"/><path d="M11 12Q2 14 4 24q6-2 7-12zM15 12q9 2 7 12-6-2-7-12z" fill="none" stroke="#d2c339" stroke-width="1.8"/></svg>
<svg class="r" style="left:311px;top:82.5px;" width="26" height="26" viewBox="0 0 26 26"><circle cx="13" cy="13" r="6.5" fill="#d2c339"/><g stroke="#d2c339" stroke-width="2.2"><path d="M13 1v4M13 21v4M1 13h4M21 13h4M4.5 4.5l3 3M18.5 18.5l3 3M21.5 4.5l-3 3M7.5 18.5l-3 3"/></g><path d="M25.5 20.5v5h-5z" fill="#e0e0e0"/></svg>
<div class="r" style="left:345.2px;top:82px;width:1.6px;height:27px;background:#9a9a9a;"></div>
<svg class="r" style="left:354px;top:82.5px;" width="26" height="26" viewBox="0 0 26 26"><defs><linearGradient id="gsq" x1="0" y1="0" x2="0.3" y2="1"><stop offset="0" stop-color="#8db3cc"/><stop offset="1" stop-color="#ffffff"/></linearGradient></defs><rect x="2" y="2.5" width="22" height="21" fill="url(#gsq)"/><path d="M25.5 20.5v5h-5z" fill="#e0e0e0"/></svg>
<div class="r" style="left:387.2px;top:82px;width:1.6px;height:27px;background:#9a9a9a;"></div>
<svg class="r" style="left:395px;top:82.5px;" width="26" height="26" viewBox="0 0 26 26"><path d="M3 6l11-3.5 8 3.5v12l-9 5.5L3 18z" fill="#d8d8d8"/><path d="M3 6l10 4 9-4-8-3.5z" fill="#f2f2f2"/><path d="M13 10v13.5L22 18V6z" fill="#9a9a9a"/><path d="M20 17v8M16 21h8" stroke="#45b8c6" stroke-width="2"/></svg>
<svg class="r" style="left:423px;top:82.5px;" width="26" height="26" viewBox="0 0 26 26"><path d="M3 6l11-3.5 8 3.5v12l-9 5.5L3 18z" fill="#3fb0be"/><path d="M3 6l10 4 9-4-8-3.5z" fill="#6fd0da"/><path d="M13 10v13.5L22 18V6z" fill="#2b8591"/><rect x="16" y="16" width="9" height="9" fill="#e8e8e8" stroke="#444" stroke-width=".8"/><rect x="18" y="16.5" width="4" height="3" fill="#555"/></svg>
<svg class="r" style="left:451px;top:82.5px;" width="26" height="26" viewBox="0 0 26 26"><path d="M3 6l11-3.5 8 3.5v12l-9 5.5L3 18z" fill="none" stroke="#d8d8d8" stroke-width="1.8"/><path d="M7 9.5l6-2 5 2v7l-5.5 3L7 16.5z" fill="#e8965a"/><path d="M7 9.5l5.5 2.5 5.5-2.5-5-2z" fill="#f4b888"/><path d="M20 17v8M16 21h8" stroke="#45b8c6" stroke-width="2"/></svg>
<svg class="r" style="left:478.5px;top:82.5px;" width="26" height="26" viewBox="0 0 26 26"><path d="M3 7l11-4.5 9 3v12.5l-10 5.5L3 18z" fill="none" stroke="#d8d8d8" stroke-width="1.8"/><path d="M13 8q5 4 4 9a4.5 4.5 0 0 1-9 0q0-3 2-4 0 2 1.5 2 0-4 1.5-7z" fill="#45b8c6"/><path d="M16 4.5h6v5" stroke="#d8d8d8" stroke-width="1.5" fill="none"/></svg>
<div class="r" style="left:512.5px;top:82px;width:1.6px;height:27px;background:#9a9a9a;"></div>
<svg class="r" style="left:522px;top:82.5px;" width="26" height="26" viewBox="0 0 26 26"><circle cx="14" cy="14" r="10.5" fill="#e8965a"/><path d="M6 7q3 9 13 5Q16 3 6 7z" fill="#e2e2e2"/><path d="M3.5 14A10.5 10.5 0 0 1 12 3" stroke="#d8d8d8" stroke-dasharray="2 2" fill="none"/></svg>
<svg class="r" style="left:549px;top:82.5px;" width="26" height="26" viewBox="0 0 26 26"><path d="M13 9L2.5 23h21z" fill="none" stroke="#e8965a" stroke-width="1.8"/><path d="M13 9l-3 10 3 4 3-4z" fill="none" stroke="#e8965a" stroke-width="1.2"/><path d="M13 12V2M10 5l3-3.5L16 5" stroke="#e8965a" stroke-width="1.8" fill="none"/></svg>
<svg class="r" style="left:576px;top:82.5px;" width="26" height="26" viewBox="0 0 26 26"><path d="M3 23Q5 14 2 8q6 5 6 13Q9 10 7 3q7 8 6 19 1-10 6-17-2 9-2 17 2-6 7-10-4 7-4 14z" fill="#e8965a"/><path d="M25.5 20.5v5h-5z" fill="#e0e0e0"/></svg>
<svg class="r" style="left:603px;top:82.5px;" width="26" height="26" viewBox="0 0 26 26"><path d="M2.5 5q6 3 11-1 5-3 10 0l-2 16q-5-2-10 1t-10 0z" fill="#e8965a"/><path d="M2.5 12q6 3 11-1t10 0M9 5.5L8 21.5M17 3l-1 16" stroke="#444" stroke-width="1" fill="none"/><g fill="#e8e8e8"><rect x="0.5" y="3" width="3" height="3"/><rect x="22" y="2" width="3" height="3"/><rect x="20" y="19" width="3" height="3"/><rect x="0.5" y="19.5" width="3" height="3"/></g><path d="M25.5 20.5v5h-5z" fill="#e0e0e0"/></svg>
<svg class="r" style="left:630px;top:82.5px;" width="28" height="26" viewBox="0 0 28 26"><path d="M3.5 0.5H0.5v25h3M22.5 0.5h3v25h-3" stroke="#3fbf3f" stroke-width="1.2" fill="none"/><rect x="5" y="2.5" width="4.5" height="21" fill="#e8965a" stroke="#5a3a22" stroke-width=".6"/><rect x="12" y="2.5" width="4.5" height="21" fill="#e8965a" stroke="#5a3a22" stroke-width=".6"/><rect x="19" y="2.5" width="4.5" height="21" fill="#e8965a" stroke="#5a3a22" stroke-width=".6"/><rect x="1.5" y="4.5" width="7" height="4" fill="#e8965a" stroke="#5a3a22" stroke-width=".6"/><rect x="13" y="4.5" width="9.5" height="4" fill="#e8965a" stroke="#5a3a22" stroke-width=".6"/><rect x="6" y="11.5" width="9.5" height="4" fill="#e8965a" stroke="#5a3a22" stroke-width=".6"/><rect x="20" y="11.5" width="4.5" height="4" fill="#e8965a" stroke="#5a3a22" stroke-width=".6"/><rect x="1.5" y="18.5" width="7" height="4" fill="#e8965a" stroke="#5a3a22" stroke-width=".6"/><rect x="13" y="18.5" width="9.5" height="4" fill="#e8965a" stroke="#5a3a22" stroke-width=".6"/></svg>
<svg class="r" style="left:659px;top:82.5px;" width="24" height="26" viewBox="0 0 24 26"><path d="M2 3l20 3v14L2 23z" fill="#e8965a"/><g fill="#e8e8e8" stroke="#444" stroke-width=".6"><ellipse cx="7" cy="9" rx="2.5" ry="3.5"/><ellipse cx="13" cy="9.5" rx="2.3" ry="3.2"/><ellipse cx="18.5" cy="10" rx="2" ry="3"/><ellipse cx="7" cy="17.5" rx="2.5" ry="3.3"/><ellipse cx="13" cy="17" rx="2.3" ry="3"/><ellipse cx="18.5" cy="16.5" rx="2" ry="2.8"/></g><path d="M25.5 20.5v5h-5z" fill="#e0e0e0"/></svg>
<svg class="r" style="left:685px;top:82.5px;" width="26" height="26" viewBox="0 0 26 26"><circle cx="13" cy="13" r="11.5" fill="#e8965a"/><ellipse cx="15.5" cy="10.5" rx="8" ry="5" transform="rotate(35 15.5 10.5)" fill="#e2e2e2"/><path d="M25.5 20.5v5h-5z" fill="#e0e0e0"/></svg>
<svg class="r" style="left:713px;top:82.5px;" width="26" height="26" viewBox="0 0 26 26"><path d="M5 5v8q0 7 8 7t8-7V5" fill="none" stroke="#e8965a" stroke-width="1.6" stroke-dasharray="3 1.5"/><g fill="#444" stroke="#e0e0e0" stroke-width="1.2"><rect x="2.5" y="2.5" width="5" height="5"/><rect x="18.5" y="2.5" width="5" height="5"/><rect x="10.5" y="17.5" width="5" height="5"/></g><path d="M25.5 20.5v5h-5z" fill="#e0e0e0"/></svg>
<svg class="r" style="left:740px;top:82.5px;" width="26" height="26" viewBox="0 0 26 26"><circle cx="13" cy="13" r="7.5" fill="none" stroke="#e0e0e0" stroke-width="2.2"/><g stroke="#e0e0e0" stroke-width="3.5"><path d="M13 1.5v4M13 20.5v4M1.5 13h4M20.5 13h4M4.8 4.8l2.8 2.8M18.4 18.4l2.8 2.8M21.2 4.8l-2.8 2.8M7.6 18.4l-2.8 2.8"/></g><path d="M9 11l4-2 4 2v4.5l-4 2-4-2z" fill="#e8965a"/><path d="M25.5 20.5v5h-5z" fill="#e0e0e0"/></svg>
<div class="r" style="left:774.2px;top:82px;width:1.6px;height:27px;background:#9a9a9a;"></div>
<svg class="r" style="left:783.5px;top:82.5px;" width="26" height="26" viewBox="0 0 26 26"><path d="M9 2L1.5 20h15z" fill="#d8d8d8" stroke="#45b8c6" stroke-width="1.5"/><circle cx="16.5" cy="17.5" r="6" fill="#d8d8d8" stroke="#45b8c6" stroke-width="1.5"/><path d="M25.5 20.5v5h-5z" fill="#e0e0e0"/></svg>
<svg class="r" style="left:810px;top:82.5px;" width="26" height="26" viewBox="0 0 26 26"><circle cx="9" cy="8.5" r="7.5" fill="#d8d8d8"/><path d="M3 6l12 5" stroke="#444" stroke-width="1.2"/><path d="M16 10h7v12H10v-5" fill="none" stroke="#45b8c6" stroke-width="1.6"/><ellipse cx="16.5" cy="19.5" rx="5.5" ry="2.5" fill="#d8d8d8"/><path d="M25.5 20.5v5h-5z" fill="#e0e0e0"/></svg>
<div class="r" style="left:844.2px;top:82px;width:1.6px;height:27px;background:#9a9a9a;"></div>
<svg class="r" style="left:855px;top:82.5px;" width="22" height="26" viewBox="0 0 22 26"><path d="M4 2.5h10l5 5v16H4z" fill="none" stroke="#45b8c6" stroke-width="1.6"/><path d="M1 9h7M5.5 6.5L8.5 9l-3 2.5" stroke="#45b8c6" stroke-width="1.4" fill="none"/><circle cx="15.5" cy="18.5" r="5.5" fill="#d8d8d8"/></svg>
<svg class="r" style="left:881px;top:82.5px;" width="26" height="26" viewBox="0 0 26 26"><defs><linearGradient id="gsp" x1="0" y1="0" x2="1" y2="0"><stop offset="0" stop-color="#f4f4f4"/><stop offset=".5" stop-color="#bdbdbd"/><stop offset=".5" stop-color="#d9435e"/><stop offset="1" stop-color="#7a3fd1"/></linearGradient></defs><circle cx="13" cy="13" r="11" fill="url(#gsp)"/><path d="M25.5 20.5v5h-5z" fill="#e0e0e0"/></svg>
<svg class="r" style="left:908px;top:82.5px;" width="26" height="26" viewBox="0 0 26 26"><circle cx="7" cy="7" r="5.2" fill="#45b8c6"/><circle cx="19" cy="7" r="5.2" fill="#d8d8d8"/><circle cx="7" cy="19" r="5.2" fill="#d8d8d8"/><circle cx="19" cy="19" r="5.2" fill="#45b8c6"/></svg>
<svg class="r" style="left:935px;top:82.5px;" width="26" height="26" viewBox="0 0 26 26"><path d="M13 2.5A10.5 10.5 0 1 0 13 23.5c3 0 1-4 4-5s6.5 0 6.5-5A10.5 10.5 0 0 0 13 2.5z" fill="#dcdcdc"/><circle cx="8" cy="12" r="2.5" fill="#444"/><circle cx="13" cy="7" r="2" fill="#444"/><circle cx="18.5" cy="9" r="1.8" fill="#444"/></svg>
<div class="r" style="left:969.2px;top:82px;width:1.6px;height:27px;background:#9a9a9a;"></div>
<svg class="r" style="left:978px;top:82.5px;" width="26" height="26" viewBox="0 0 26 26"><path d="M2 13v-3h3M2 19v3h3M24 19v3h-3M12 22h3" stroke="#d8d8d8" stroke-width="1.6" fill="none"/><rect x="9" y="2" width="7" height="7" fill="#d8d8d8"/><rect x="16" y="2" width="7" height="7" fill="#45b8c6"/><rect x="9" y="9" width="7" height="7" fill="#45b8c6"/><rect x="16" y="9" width="7" height="7" fill="#d8d8d8"/><path d="M25.5 20.5v5h-5z" fill="#e0e0e0"/></svg>
<div class="r" style="left:1012.2px;top:82px;width:1.6px;height:27px;background:#9a9a9a;"></div>
<svg class="r" style="left:1021px;top:82.5px;" width="26" height="26" viewBox="0 0 26 26"><circle cx="12" cy="12.5" r="10" fill="none" stroke="#dcdcdc" stroke-width="1.8"/><path d="M9 7v4M15 7v4M8 11h8v3q0 3-4 3t-4-3zM12 17v6" stroke="#dcdcdc" stroke-width="1.6" fill="none"/><path d="M8.5 11.5h7v3q0 2-3.5 2t-3.5-2z" fill="#dcdcdc"/><path d="M25.5 20.5v5h-5z" fill="#e0e0e0"/></svg>
<svg class="r" style="left:1050px;top:82.5px;" width="24" height="26" viewBox="0 0 24 26"><circle cx="12" cy="12.5" r="10.5" fill="#dcdcdc"/><path d="M5.5 9l5.5 9L19 5.5" stroke="#444" stroke-width="3" fill="none" stroke-linejoin="round"/></svg>
<div class="r" style="left:1482px;top:82px;width:13px;height:28px;background:#3e3e3e;"></div>
<svg class="r" style="left:1483px;top:83px;" width="11" height="26" viewBox="0 0 11 26"><path d="M1.5 6.5h8L5.5 2z" fill="#d0d0d0"/><circle cx="5.5" cy="13" r="3" fill="#6a6a6a"/><path d="M1.5 19.5h8L5.5 24z" fill="#d0d0d0"/></svg>
<div class="r" style="left:0px;top:113px;width:1500px;height:3px;background:#3a3a3a;"></div>
<div class="r" style="left:0px;top:116px;width:36px;height:608px;background:#444444;"></div>
<div class="r" style="left:36px;top:116px;width:2px;height:608px;background:#383838;"></div>
<svg class="r" style="left:3px;top:118px;" width="30" height="5" viewBox="0 0 30 5"><g fill="#6a6a6a"><rect x="0" y="1" width="1" height="1"/><rect x="2" y="1" width="1" height="1"/><rect x="4" y="1" width="1" height="1"/><rect x="6" y="1" width="1" height="1"/><rect x="8" y="1" width="1" height="1"/><rect x="10" y="1" width="1" height="1"/><rect x="12" y="1" width="1" height="1"/><rect x="14" y="1" width="1" height="1"/><rect x="16" y="1" width="1" height="1"/><rect x="18" y="1" width="1" height="1"/><rect x="20" y="1" width="1" height="1"/><rect x="22" y="1" width="1" height="1"/><rect x="24" y="1" width="1" height="1"/><rect x="26" y="1" width="1" height="1"/><rect x="28" y="1" width="1" height="1"/><rect x="0" y="3" width="1" height="1"/><rect x="2" y="3" width="1" height="1"/><rect x="4" y="3" width="1" height="1"/><rect x="6" y="3" width="1" height="1"/><rect x="8" y="3" width="1" height="1"/><rect x="10" y="3" width="1" height="1"/><rect x="12" y="3" width="1" height="1"/><rect x="14" y="3" width="1" height="1"/><rect x="16" y="3" width="1" height="1"/><rect x="18" y="3" width="1" height="1"/><rect x="20" y="3" width="1" height="1"/><rect x="22" y="3" width="1" height="1"/><rect x="24" y="3" width="1" height="1"/><rect x="26" y="3" width="1" height="1"/><rect x="28" y="3" width="1" height="1"/></g></svg>
<div class="r" style="left:3px;top:126px;width:28px;height:28px;background:#5285a6;"></div>
<svg class="r" style="left:10px;top:130px;" width="16" height="22" viewBox="0 0 16 22"><g transform="translate(2,1)"><path d="M0 0v16.5l4-3.8 2.8 6 2.7-1.3-2.8-5.8h5.5z" fill="#e8e8e8" stroke="#3a3a3a" stroke-width=".8"/></g></svg>
<svg class="r" style="left:4px;top:156px;" width="28" height="28" viewBox="0 0 28 28"><ellipse cx="11" cy="11" rx="9" ry="7" transform="rotate(-25 11 11)" fill="none" stroke="#45b8c6" stroke-width="1.8" stroke-dasharray="4 2"/><g transform="translate(12,7) scale(.95)"><path d="M0 0v16.5l4-3.8 2.8 6 2.7-1.3-2.8-5.8h5.5z" fill="#e8e8e8" stroke="#3a3a3a" stroke-width=".8"/></g></svg>
<svg class="r" style="left:4px;top:185px;" width="28" height="28" viewBox="0 0 28 28"><ellipse cx="11" cy="17" rx="9" ry="7" transform="rotate(-25 11 17)" fill="none" stroke="#45b8c6" stroke-width="1.8" stroke-dasharray="4 2"/><path d="M23 2.5l2 2-9 10-3-2.5z" fill="#e8e8e8"/><path d="M12.5 12.5l3.5 3q-2 5-7 4 3-2 3.5-7z" fill="#e8e8e8"/></svg>
<svg class="r" style="left:4px;top:213px;" width="28" height="28" viewBox="0 0 28 28"><rect x="8.5" y="8.5" width="10" height="10" fill="#e4e4e4"/><g fill="#45b8c6"><path d="M13.5 1l4 4.5h-8zM13.5 26l4-4.5h-8zM1 13.5L5.5 9.5v8zM26 13.5l-4.5-4v8z"/></g></svg>
<svg class="r" style="left:3px;top:241px;" width="30" height="30" viewBox="0 0 30 30"><path d="M22 6A11.5 11.5 0 1 0 26 17" fill="none" stroke="#45b8c6" stroke-width="1.8"/><path d="M23 12l3.5 5.5 2-5.5z" fill="#45b8c6"/><path d="M14 8l6 6-6 6-6-6z" fill="#e4e4e4"/></svg>
<svg class="r" style="left:5px;top:272px;" width="26" height="26" viewBox="0 0 26 26"><rect x="3.5" y="3" width="19" height="19" fill="none" stroke="#45b8c6" stroke-width="1.5" stroke-dasharray="3 2"/><rect x="2.5" y="14.5" width="9" height="9" fill="#e4e4e4"/><rect x="9.5" y="9.5" width="7" height="7" fill="#666" opacity=".9"/></svg>
<div class="r" style="left:3px;top:360px;width:28px;height:2px;background:#8c8c8c;"></div>
<svg class="r" style="left:5px;top:368px;" width="24" height="24" viewBox="0 0 24 24"><rect x="1" y="1" width="21.5" height="21.5" fill="#4a4a4a" stroke="#e2e2e2" stroke-width="1.6"/><g fill="#ececec"><path d="M12 5l3.5 3-3.5 3-3.5-3zM7 9l3.5 3L7 15l-3.5-3zM17 9l3.5 3-3.5 3-3.5-3zM12 13l3.5 3-3.5 3-3.5-3z"/></g></svg>
<svg class="r" style="left:5px;top:397px;" width="24" height="24" viewBox="0 0 24 24"><rect x="1" y="1" width="10" height="10" fill="#444" stroke="#dcdcdc" stroke-width="1.2"/><path d="M6 3v6M3 6h6" stroke="#dcdcdc" stroke-width="1.2"/><rect x="13" y="1" width="10" height="10" fill="#dcdcdc"/><path d="M18 3.5l3 2.5-3 2.5-3-2.5z" fill="#444"/><rect x="1" y="13" width="10" height="10" fill="#444" stroke="#dcdcdc" stroke-width="1.2"/><path d="M6 15v6M3 18h6" stroke="#dcdcdc" stroke-width="1.2"/><rect x="13" y="13" width="10" height="10" fill="#444" stroke="#dcdcdc" stroke-width="1.2"/><path d="M18 15v6M15 18h6" stroke="#dcdcdc" stroke-width="1.2"/></svg>
<svg class="r" style="left:5px;top:426px;" width="24" height="24" viewBox="0 0 24 24"><rect x="1" y="1" width="10" height="21" fill="#444" stroke="#333" stroke-width="1.2"/><path d="M6 8.5v6M3 11.5h6" stroke="#dcdcdc" stroke-width="1.2"/><rect x="13" y="1" width="10" height="21" fill="#dcdcdc"/><path d="M18 9l3 2.5-3 2.5-3-2.5z" fill="#444"/></svg>
<div class="r" style="left:3px;top:453px;width:28px;height:28px;background:#5285a6;"></div>
<svg class="r" style="left:5px;top:455px;" width="24" height="24" viewBox="0 0 24 24"><rect x="1.5" y="1.5" width="21" height="21" fill="#3b5060" stroke="#e4e4e4" stroke-width="1.2"/><path d="M6 4v16M6 7h3M6 12h3M6 17h3" stroke="#e4e4e4" stroke-width="1.2" fill="none"/><path d="M10 7h9M10 12h9M10 17h9" stroke="#e4e4e4" stroke-width="2"/><circle cx="6" cy="4.5" r="1.5" fill="#e4e4e4"/></svg>
<div class="r" style="left:3px;top:484px;width:28px;height:2px;background:#8c8c8c;"></div>
<svg class="r" style="left:2px;top:489px;" width="31" height="31" viewBox="0 0 31 31"><path d="M4.5 1.5H1.5v27h3M26.5 1.5h3v27h-3" stroke="#3fbf3f" stroke-width="1.3" fill="none"/><circle cx="13" cy="12.5" r="6.5" fill="none" stroke="#f0f0f0" stroke-width="2.2"/><path d="M17.5 17.5l6 6.5" stroke="#f0f0f0" stroke-width="3" stroke-linecap="round"/></svg>
<svg class="r" style="left:4px;top:693px;" width="28" height="26" viewBox="0 0 28 26"><defs><linearGradient id="mg" x1="0" y1="0" x2="1" y2="1"><stop offset="0" stop-color="#38d0d0"/><stop offset="1" stop-color="#128a98"/></linearGradient></defs><path d="M0.5 25V3l4-2.5 9.5 13L23.5 0.5l4 2.5v22l-6-2V11L14 21.5 6.5 11v12z" fill="url(#mg)"/><path d="M0.5 3l4-2.5v21l-4 3.5zM27.5 3l-4-2.5v21l4 3.5z" fill="#0e6f7c" opacity=".55"/></svg>
<div class="r" style="left:38px;top:116px;width:236px;height:608px;background:#444444;"></div>
<div class="r" style="left:38px;top:116px;width:236px;height:15px;background:#373737;"></div>
<div class="r" style="left:39px;top:116px;width:49px;height:15px;background:#444444;border-radius:2px 2px 0 0"></div>
<span class="t" style="left:45.0px;top:118.9px;font-size:9.3px;line-height:13.3px;color:#eeeeee;transform:scaleX(1.0598);">Outliner</span>
<span class="t" style="left:44.0px;top:133.4px;font-size:9.3px;line-height:13.3px;color:#dcdcdc;transform:scaleX(0.9842);">Display</span>
<span class="t" style="left:85.0px;top:133.4px;font-size:9.3px;line-height:13.3px;color:#dcdcdc;transform:scaleX(0.9890);">Show</span>
<span class="t" style="left:119.0px;top:133.4px;font-size:9.3px;line-height:13.3px;color:#dcdcdc;transform:scaleX(1.0199);">Help</span>
<svg class="r" style="left:43px;top:152px;" width="13" height="13" viewBox="0 0 13 13"><path d="M1.5 4V1.5H4M9 1.5h2.5V4M11.5 9v2.5H9M4 11.5H1.5V9" stroke="#8a8a8a" stroke-width="1.2" fill="none"/><rect x="3.5" y="3.5" width="6" height="6" fill="none" stroke="#6a6a6a" stroke-dasharray="1.5 1"/></svg>
<div class="r" style="left:60px;top:152px;width:210px;height:14px;background:#2b2b2b;border-radius:2px"></div>
<span class="t" style="left:62.5px;top:153.4px;font-size:9.3px;line-height:13.3px;color:#9a9a9a;transform:scaleX(0.9138);">Search...</span>
<svg class="r" style="left:259px;top:156px;" width="9" height="6" viewBox="0 0 9 6"><path d="M0.5 0.5h8L4.5 5z" fill="#d8d8d8"/></svg>
<div class="r" style="left:40px;top:167px;width:232px;height:552px;background:#3b3b3b;"></div>
<div class="r" style="left:261px;top:167px;width:11px;height:552px;background:#3e3e3e;"></div>
<svg class="r" style="left:262px;top:168px;" width="9" height="8" viewBox="0 0 9 8"><path d="M0.5 6.5h8L4.5 2z" fill="#cfcfcf"/></svg>
<div class="r" style="left:263px;top:178px;width:7px;height:384px;background:#5a5a5a;border-radius:3.5px"></div>
<svg class="r" style="left:262px;top:699px;" width="9" height="8" viewBox="0 0 9 8"><path d="M0.5 1.5h8L4.5 6z" fill="#cfcfcf"/></svg>
<svg class="r" style="left:116px;top:719px;" width="80" height="3" viewBox="0 0 80 3"><g fill="#6a6a6a"><rect x="0" y="1" width="1" height="1"/><rect x="2" y="1" width="1" height="1"/><rect x="4" y="1" width="1" height="1"/><rect x="6" y="1" width="1" height="1"/><rect x="8" y="1" width="1" height="1"/><rect x="10" y="1" width="1" height="1"/><rect x="12" y="1" width="1" height="1"/><rect x="14" y="1" width="1" height="1"/><rect x="16" y="1" width="1" height="1"/><rect x="18" y="1" width="1" height="1"/><rect x="20" y="1" width="1" height="1"/><rect x="22" y="1" width="1" height="1"/><rect x="24" y="1" width="1" height="1"/><rect x="26" y="1" width="1" height="1"/><rect x="28" y="1" width="1" height="1"/><rect x="30" y="1" width="1" height="1"/><rect x="32" y="1" width="1" height="1"/><rect x="34" y="1" width="1" height="1"/><rect x="36" y="1" width="1" height="1"/><rect x="38" y="1" width="1" height="1"/><rect x="40" y="1" width="1" height="1"/><rect x="42" y="1" width="1" height="1"/><rect x="44" y="1" width="1" height="1"/><rect x="46" y="1" width="1" height="1"/><rect x="48" y="1" width="1" height="1"/><rect x="50" y="1" width="1" height="1"/><rect x="52" y="1" width="1" height="1"/><rect x="54" y="1" width="1" height="1"/><rect x="56" y="1" width="1" height="1"/><rect x="58" y="1" width="1" height="1"/><rect x="60" y="1" width="1" height="1"/><rect x="62" y="1" width="1" height="1"/><rect x="64" y="1" width="1" height="1"/><rect x="66" y="1" width="1" height="1"/><rect x="68" y="1" width="1" height="1"/><rect x="70" y="1" width="1" height="1"/><rect x="72" y="1" width="1" height="1"/><rect x="74" y="1" width="1" height="1"/><rect x="76" y="1" width="1" height="1"/><rect x="78" y="1" width="1" height="1"/></g></svg>
<span class="t" style="left:81.3px;top:168.8px;font-size:9.3px;line-height:13.3px;color:#8e8e8e;transform:scaleX(0.9675);">persp</span>
<span class="t" style="left:81.3px;top:184.4px;font-size:9.3px;line-height:13.3px;color:#8e8e8e;transform:scaleX(1.0833);">top</span>
<span class="t" style="left:81.3px;top:200.0px;font-size:9.3px;line-height:13.3px;color:#8e8e8e;transform:scaleX(1.1020);">front</span>
<span class="t" style="left:81.3px;top:215.7px;font-size:9.3px;line-height:13.3px;color:#8e8e8e;transform:scaleX(0.9382);">side</span>
<span class="t" style="left:81.3px;top:231.3px;font-size:9.3px;line-height:13.3px;color:#e2e2e2;transform:scaleX(0.9674);">BoneRoot</span>
<span class="t" style="left:90.6px;top:247.0px;font-size:9.3px;line-height:13.3px;color:#e2e2e2;transform:scaleX(0.9678);">Hip</span>
<span class="t" style="left:100.0px;top:262.6px;font-size:9.3px;line-height:13.3px;color:#e2e2e2;transform:scaleX(0.8871);">Pelvis</span>
<span class="t" style="left:100.0px;top:278.3px;font-size:9.3px;line-height:13.3px;color:#e2e2e2;transform:scaleX(1.0045);">Waist</span>
<span class="t" style="left:109.3px;top:293.9px;font-size:9.3px;line-height:13.3px;color:#e2e2e2;transform:scaleX(0.9233);">Spine01</span>
<span class="t" style="left:118.6px;top:309.6px;font-size:9.3px;line-height:13.3px;color:#e2e2e2;transform:scaleX(0.9379);">Spine02</span>
<span class="t" style="left:128.0px;top:325.2px;font-size:9.3px;line-height:13.3px;color:#e2e2e2;transform:scaleX(0.9488);">NeckTwist01</span>
<span class="t" style="left:137.3px;top:340.9px;font-size:9.3px;line-height:13.3px;color:#e2e2e2;transform:scaleX(0.9583);">NeckTwist02</span>
<span class="t" style="left:146.6px;top:356.5px;font-size:9.3px;line-height:13.3px;color:#e2e2e2;transform:scaleX(0.9674);">Head</span>
<span class="t" style="left:156.0px;top:372.2px;font-size:9.3px;line-height:13.3px;color:#e2e2e2;transform:scaleX(0.9245);">FacialBone</span>
<span class="t" style="left:156.0px;top:387.8px;font-size:9.3px;line-height:13.3px;color:#e2e2e2;transform:scaleX(0.9724);">Head_parentConstraint1</span>
<span class="t" style="left:156.0px;top:403.5px;font-size:9.3px;line-height:13.3px;color:#e2e2e2;transform:scaleX(0.9468);">Head_scaleConstraint1</span>
<span class="t" style="left:156.0px;top:419.1px;font-size:9.3px;line-height:13.3px;color:#e2e2e2;transform:scaleX(0.9903);">transform1</span>
<span class="t" style="left:156.0px;top:434.7px;font-size:9.3px;line-height:13.3px;color:#e2e2e2;transform:scaleX(1.0015);">transform2</span>
<span class="t" style="left:146.6px;top:450.4px;font-size:9.3px;line-height:13.3px;color:#e2e2e2;transform:scaleX(0.9634);">NeckTwist02_parentConstrai</span>
<span class="t" style="left:146.6px;top:466.0px;font-size:9.3px;line-height:13.3px;color:#e2e2e2;transform:scaleX(0.9472);">NeckTwist02_scaleConstraint</span>
<span class="t" style="left:137.3px;top:481.7px;font-size:9.3px;line-height:13.3px;color:#e2e2e2;transform:scaleX(0.9448);">NeckTwist01_parentConstraint1</span>
<span class="t" style="left:137.3px;top:497.3px;font-size:9.3px;line-height:13.3px;color:#e2e2e2;transform:scaleX(0.9480);">NeckTwist01_scaleConstraint1</span>
<span class="t" style="left:128.0px;top:513.0px;font-size:9.3px;line-height:13.3px;color:#e2e2e2;transform:scaleX(0.8860);">L_Clavicle</span>
<span class="t" style="left:128.0px;top:528.6px;font-size:9.3px;line-height:13.3px;color:#e2e2e2;transform:scaleX(0.9279);">L_RibsTwist</span>
<span class="t" style="left:128.0px;top:544.3px;font-size:9.3px;line-height:13.3px;color:#e2e2e2;transform:scaleX(0.9292);">R_RibsTwist</span>
<span class="t" style="left:128.0px;top:559.9px;font-size:9.3px;line-height:13.3px;color:#e2e2e2;transform:scaleX(0.8890);">R_Clavicle</span>
<span class="t" style="left:128.0px;top:575.6px;font-size:9.3px;line-height:13.3px;color:#e2e2e2;transform:scaleX(0.9630);">Spine02_parentConstraint1</span>
<span class="t" style="left:128.0px;top:591.2px;font-size:9.3px;line-height:13.3px;color:#e2e2e2;transform:scaleX(0.9398);">Spine02_scaleConstraint1</span>
<span class="t" style="left:118.6px;top:606.9px;font-size:9.3px;line-height:13.3px;color:#e2e2e2;transform:scaleX(0.9630);">Spine01_parentConstraint1</span>
<span class="t" style="left:118.6px;top:622.5px;font-size:9.3px;line-height:13.3px;color:#e2e2e2;transform:scaleX(0.9398);">Spine01_scaleConstraint1</span>
<span class="t" style="left:109.3px;top:638.2px;font-size:9.3px;line-height:13.3px;color:#e2e2e2;transform:scaleX(0.9807);">Waist_parentConstraint1</span>
<span class="t" style="left:109.3px;top:653.8px;font-size:9.3px;line-height:13.3px;color:#e2e2e2;transform:scaleX(0.9557);">Waist_scaleConstraint1</span>
<span class="t" style="left:100.0px;top:669.5px;font-size:9.3px;line-height:13.3px;color:#e2e2e2;transform:scaleX(0.9783);">Hip_parentConstraint1</span>
<span class="t" style="left:100.0px;top:685.1px;font-size:9.3px;line-height:13.3px;color:#e2e2e2;transform:scaleX(0.9563);">Hip_scaleConstraint1</span>
<span class="t" style="left:81.3px;top:700.7px;font-size:9.3px;line-height:13.3px;color:#e2e2e2;transform:scaleX(1.0062);">Group</span>
<svg class="r" style="left:40px;top:167px;" width="221" height="542" viewBox="0 0 221 542"><path d="M19.5 74.4V85.5" stroke="#8f8f8f" stroke-width="1"/><path d="M29.5 90.0V523.7" stroke="#8f8f8f" stroke-width="1"/><path d="M38.5 121.3V492.4" stroke="#8f8f8f" stroke-width="1"/><path d="M47.5 137.0V461.1" stroke="#8f8f8f" stroke-width="1"/><path d="M57.5 152.6V429.8" stroke="#8f8f8f" stroke-width="1"/><path d="M66.5 168.3V335.9" stroke="#8f8f8f" stroke-width="1"/><path d="M75.5 183.9V304.6" stroke="#8f8f8f" stroke-width="1"/><path d="M85.5 199.6V273.3" stroke="#8f8f8f" stroke-width="1"/><g transform="translate(32.3,7.3)"><rect x="-5.5" y="-3" width="7" height="6" rx="0.8" fill="#dadada"/><path d="M2 0l3.5-3v6z" fill="#dadada"/></g><g transform="translate(32.3,22.9)"><rect x="-5.5" y="-3" width="7" height="6" rx="0.8" fill="#dadada"/><path d="M2 0l3.5-3v6z" fill="#dadada"/></g><g transform="translate(32.3,38.6)"><rect x="-5.5" y="-3" width="7" height="6" rx="0.8" fill="#dadada"/><path d="M2 0l3.5-3v6z" fill="#dadada"/></g><g transform="translate(32.3,54.2)"><rect x="-5.5" y="-3" width="7" height="6" rx="0.8" fill="#dadada"/><path d="M2 0l3.5-3v6z" fill="#dadada"/></g><rect x="16.0" y="67.0" width="7" height="7" fill="#3b3b3b" stroke="#b4b4b4" stroke-width="1"/><path d="M17.5 70.5h4" stroke="#d0d0d0" stroke-width="1"/><g transform="translate(32.5,69.9)"><path d="M3.5 -4.5L-3 1l4.5 4.5" stroke="#b9a8ec" stroke-width="2" fill="none" stroke-linejoin="round"/><circle cx="3.8" cy="-4.8" r="1.8" fill="#d9cdf7"/><circle cx="-3" cy="1" r="1.9" fill="#b9a8ec"/><path d="M-3 1l5 5.5 1-1.5z" fill="#a795e6"/></g><path d="M19.5 86.5H29.5" stroke="#8f8f8f" stroke-width="1"/><rect x="26.0" y="83.0" width="7" height="7" fill="#3b3b3b" stroke="#b4b4b4" stroke-width="1"/><path d="M27.5 86.5h4" stroke="#d0d0d0" stroke-width="1"/><g transform="translate(41.8,85.5)"><path d="M3.5 -4.5L-3 1l4.5 4.5" stroke="#b9a8ec" stroke-width="2" fill="none" stroke-linejoin="round"/><circle cx="3.8" cy="-4.8" r="1.8" fill="#d9cdf7"/><circle cx="-3" cy="1" r="1.9" fill="#b9a8ec"/><path d="M-3 1l5 5.5 1-1.5z" fill="#a795e6"/></g><path d="M29.5 101.5H38.5" stroke="#8f8f8f" stroke-width="1"/><rect x="35.0" y="98.0" width="7" height="7" fill="#3b3b3b" stroke="#b4b4b4" stroke-width="1"/><path d="M36.5 101.5h4" stroke="#d0d0d0" stroke-width="1"/><path d="M38.5 99.5v4" stroke="#d0d0d0" stroke-width="1"/><g transform="translate(51.2,101.2)"><path d="M3.5 -4.5L-3 1l4.5 4.5" stroke="#b9a8ec" stroke-width="2" fill="none" stroke-linejoin="round"/><circle cx="3.8" cy="-4.8" r="1.8" fill="#d9cdf7"/><circle cx="-3" cy="1" r="1.9" fill="#b9a8ec"/><path d="M-3 1l5 5.5 1-1.5z" fill="#a795e6"/></g><path d="M29.5 117.5H38.5" stroke="#8f8f8f" stroke-width="1"/><rect x="35.0" y="114.0" width="7" height="7" fill="#3b3b3b" stroke="#b4b4b4" stroke-width="1"/><path d="M36.5 117.5h4" stroke="#d0d0d0" stroke-width="1"/><g transform="translate(51.2,116.8)"><path d="M3.5 -4.5L-3 1l4.5 4.5" stroke="#b9a8ec" stroke-width="2" fill="none" stroke-linejoin="round"/><circle cx="3.8" cy="-4.8" r="1.8" fill="#d9cdf7"/><circle cx="-3" cy="1" r="1.9" fill="#b9a8ec"/><path d="M-3 1l5 5.5 1-1.5z" fill="#a795e6"/></g><path d="M38.5 132.5H47.5" stroke="#8f8f8f" stroke-width="1"/><rect x="44.0" y="129.0" width="7" height="7" fill="#3b3b3b" stroke="#b4b4b4" stroke-width="1"/><path d="M45.5 132.5h4" stroke="#d0d0d0" stroke-width="1"/><g transform="translate(60.5,132.5)"><path d="M3.5 -4.5L-3 1l4.5 4.5" stroke="#b9a8ec" stroke-width="2" fill="none" stroke-linejoin="round"/><circle cx="3.8" cy="-4.8" r="1.8" fill="#d9cdf7"/><circle cx="-3" cy="1" r="1.9" fill="#b9a8ec"/><path d="M-3 1l5 5.5 1-1.5z" fill="#a795e6"/></g><path d="M47.5 148.5H57.5" stroke="#8f8f8f" stroke-width="1"/><rect x="54.0" y="145.0" width="7" height="7" fill="#3b3b3b" stroke="#b4b4b4" stroke-width="1"/><path d="M55.5 148.5h4" stroke="#d0d0d0" stroke-width="1"/><g transform="translate(69.8,148.1)"><path d="M3.5 -4.5L-3 1l4.5 4.5" stroke="#b9a8ec" stroke-width="2" fill="none" stroke-linejoin="round"/><circle cx="3.8" cy="-4.8" r="1.8" fill="#d9cdf7"/><circle cx="-3" cy="1" r="1.9" fill="#b9a8ec"/><path d="M-3 1l5 5.5 1-1.5z" fill="#a795e6"/></g><path d="M57.5 164.5H66.5" stroke="#8f8f8f" stroke-width="1"/><rect x="63.0" y="161.0" width="7" height="7" fill="#3b3b3b" stroke="#b4b4b4" stroke-width="1"/><path d="M64.5 164.5h4" stroke="#d0d0d0" stroke-width="1"/><g transform="translate(79.2,163.8)"><path d="M3.5 -4.5L-3 1l4.5 4.5" stroke="#b9a8ec" stroke-width="2" fill="none" stroke-linejoin="round"/><circle cx="3.8" cy="-4.8" r="1.8" fill="#d9cdf7"/><circle cx="-3" cy="1" r="1.9" fill="#b9a8ec"/><path d="M-3 1l5 5.5 1-1.5z" fill="#a795e6"/></g><path d="M66.5 179.5H75.5" stroke="#8f8f8f" stroke-width="1"/><rect x="72.0" y="176.0" width="7" height="7" fill="#3b3b3b" stroke="#b4b4b4" stroke-width="1"/><path d="M73.5 179.5h4" stroke="#d0d0d0" stroke-width="1"/><g transform="translate(88.5,179.4)"><path d="M3.5 -4.5L-3 1l4.5 4.5" stroke="#b9a8ec" stroke-width="2" fill="none" stroke-linejoin="round"/><circle cx="3.8" cy="-4.8" r="1.8" fill="#d9cdf7"/><circle cx="-3" cy="1" r="1.9" fill="#b9a8ec"/><path d="M-3 1l5 5.5 1-1.5z" fill="#a795e6"/></g><path d="M75.5 195.5H85.5" stroke="#8f8f8f" stroke-width="1"/><rect x="82.0" y="192.0" width="7" height="7" fill="#3b3b3b" stroke="#b4b4b4" stroke-width="1"/><path d="M83.5 195.5h4" stroke="#d0d0d0" stroke-width="1"/><g transform="translate(97.8,195.1)"><path d="M3.5 -4.5L-3 1l4.5 4.5" stroke="#b9a8ec" stroke-width="2" fill="none" stroke-linejoin="round"/><circle cx="3.8" cy="-4.8" r="1.8" fill="#d9cdf7"/><circle cx="-3" cy="1" r="1.9" fill="#b9a8ec"/><path d="M-3 1l5 5.5 1-1.5z" fill="#a795e6"/></g><path d="M85.5 211.5H94.5" stroke="#8f8f8f" stroke-width="1"/><rect x="91.0" y="208.0" width="7" height="7" fill="#3b3b3b" stroke="#b4b4b4" stroke-width="1"/><path d="M92.5 211.5h4" stroke="#d0d0d0" stroke-width="1"/><path d="M94.5 209.5v4" stroke="#d0d0d0" stroke-width="1"/><g transform="translate(107.2,210.7)"><path d="M3.5 -4.5L-3 1l4.5 4.5" stroke="#b9a8ec" stroke-width="2" fill="none" stroke-linejoin="round"/><circle cx="3.8" cy="-4.8" r="1.8" fill="#d9cdf7"/><circle cx="-3" cy="1" r="1.9" fill="#b9a8ec"/><path d="M-3 1l5 5.5 1-1.5z" fill="#a795e6"/></g><path d="M85.5 226.5H94.5" stroke="#8f8f8f" stroke-width="1"/><circle cx="94.5" cy="226.5" r="1.7" fill="#a8a8a8"/><g transform="translate(107.2,226.4) rotate(-40)"><rect x="-6.5" y="-2.6" width="7.5" height="5.2" rx="2.6" fill="none" stroke="#e0585a" stroke-width="1.7"/><rect x="-1" y="-2.6" width="7.5" height="5.2" rx="2.6" fill="none" stroke="#e0585a" stroke-width="1.7"/></g><path d="M85.5 242.5H94.5" stroke="#8f8f8f" stroke-width="1"/><circle cx="94.5" cy="242.5" r="1.7" fill="#a8a8a8"/><g transform="translate(107.2,242.0) rotate(-40)"><rect x="-6.5" y="-2.6" width="7.5" height="5.2" rx="2.6" fill="none" stroke="#e0585a" stroke-width="1.7"/><rect x="-1" y="-2.6" width="7.5" height="5.2" rx="2.6" fill="none" stroke="#e0585a" stroke-width="1.7"/></g><path d="M85.5 258.5H94.5" stroke="#8f8f8f" stroke-width="1"/><circle cx="94.5" cy="258.5" r="1.7" fill="#a8a8a8"/><g transform="translate(107.2,257.7)"><path d="M-3.5 -5h9.5l-3 10h-9.5z" fill="#e8e8e8"/><path d="M-4.5 1.5l5-4 0 2.5h3.5v2.5h-3.5v2.5z" fill="#d94a4a"/></g><path d="M85.5 273.5H94.5" stroke="#8f8f8f" stroke-width="1"/><rect x="91.0" y="270.0" width="7" height="7" fill="#3b3b3b" stroke="#b4b4b4" stroke-width="1"/><path d="M92.5 273.5h4" stroke="#d0d0d0" stroke-width="1"/><path d="M94.5 271.5v4" stroke="#d0d0d0" stroke-width="1"/><g transform="translate(107.2,273.3)"><path d="M-3.5 -5h9.5l-3 10h-9.5z" fill="#e8e8e8"/><path d="M-4.5 1.5l5-4 0 2.5h3.5v2.5h-3.5v2.5z" fill="#d94a4a"/></g><path d="M75.5 289.5H85.5" stroke="#8f8f8f" stroke-width="1"/><circle cx="85.5" cy="289.5" r="1.7" fill="#a8a8a8"/><g transform="translate(97.8,288.9) rotate(-40)"><rect x="-6.5" y="-2.6" width="7.5" height="5.2" rx="2.6" fill="none" stroke="#e0585a" stroke-width="1.7"/><rect x="-1" y="-2.6" width="7.5" height="5.2" rx="2.6" fill="none" stroke="#e0585a" stroke-width="1.7"/></g><path d="M75.5 305.5H85.5" stroke="#8f8f8f" stroke-width="1"/><circle cx="85.5" cy="305.5" r="1.7" fill="#a8a8a8"/><g transform="translate(97.8,304.6) rotate(-40)"><rect x="-6.5" y="-2.6" width="7.5" height="5.2" rx="2.6" fill="none" stroke="#e0585a" stroke-width="1.7"/><rect x="-1" y="-2.6" width="7.5" height="5.2" rx="2.6" fill="none" stroke="#e0585a" stroke-width="1.7"/></g><path d="M66.5 320.5H75.5" stroke="#8f8f8f" stroke-width="1"/><circle cx="75.5" cy="320.5" r="1.7" fill="#a8a8a8"/><g transform="translate(88.5,320.2) rotate(-40)"><rect x="-6.5" y="-2.6" width="7.5" height="5.2" rx="2.6" fill="none" stroke="#e0585a" stroke-width="1.7"/><rect x="-1" y="-2.6" width="7.5" height="5.2" rx="2.6" fill="none" stroke="#e0585a" stroke-width="1.7"/></g><path d="M66.5 336.5H75.5" stroke="#8f8f8f" stroke-width="1"/><circle cx="75.5" cy="336.5" r="1.7" fill="#a8a8a8"/><g transform="translate(88.5,335.9) rotate(-40)"><rect x="-6.5" y="-2.6" width="7.5" height="5.2" rx="2.6" fill="none" stroke="#e0585a" stroke-width="1.7"/><rect x="-1" y="-2.6" width="7.5" height="5.2" rx="2.6" fill="none" stroke="#e0585a" stroke-width="1.7"/></g><path d="M57.5 352.5H66.5" stroke="#8f8f8f" stroke-width="1"/><rect x="63.0" y="349.0" width="7" height="7" fill="#3b3b3b" stroke="#b4b4b4" stroke-width="1"/><path d="M64.5 352.5h4" stroke="#d0d0d0" stroke-width="1"/><path d="M66.5 350.5v4" stroke="#d0d0d0" stroke-width="1"/><g transform="translate(79.2,351.5)"><path d="M3.5 -4.5L-3 1l4.5 4.5" stroke="#b9a8ec" stroke-width="2" fill="none" stroke-linejoin="round"/><circle cx="3.8" cy="-4.8" r="1.8" fill="#d9cdf7"/><circle cx="-3" cy="1" r="1.9" fill="#b9a8ec"/><path d="M-3 1l5 5.5 1-1.5z" fill="#a795e6"/></g><path d="M57.5 367.5H66.5" stroke="#8f8f8f" stroke-width="1"/><rect x="63.0" y="364.0" width="7" height="7" fill="#3b3b3b" stroke="#b4b4b4" stroke-width="1"/><path d="M64.5 367.5h4" stroke="#d0d0d0" stroke-width="1"/><path d="M66.5 365.5v4" stroke="#d0d0d0" stroke-width="1"/><g transform="translate(79.2,367.2)"><path d="M3.5 -4.5L-3 1l4.5 4.5" stroke="#b9a8ec" stroke-width="2" fill="none" stroke-linejoin="round"/><circle cx="3.8" cy="-4.8" r="1.8" fill="#d9cdf7"/><circle cx="-3" cy="1" r="1.9" fill="#b9a8ec"/><path d="M-3 1l5 5.5 1-1.5z" fill="#a795e6"/></g><path d="M57.5 383.5H66.5" stroke="#8f8f8f" stroke-width="1"/><rect x="63.0" y="380.0" width="7" height="7" fill="#3b3b3b" stroke="#b4b4b4" stroke-width="1"/><path d="M64.5 383.5h4" stroke="#d0d0d0" stroke-width="1"/><path d="M66.5 381.5v4" stroke="#d0d0d0" stroke-width="1"/><g transform="translate(79.2,382.8)"><path d="M3.5 -4.5L-3 1l4.5 4.5" stroke="#b9a8ec" stroke-width="2" fill="none" stroke-linejoin="round"/><circle cx="3.8" cy="-4.8" r="1.8" fill="#d9cdf7"/><circle cx="-3" cy="1" r="1.9" fill="#b9a8ec"/><path d="M-3 1l5 5.5 1-1.5z" fill="#a795e6"/></g><path d="M57.5 398.5H66.5" stroke="#8f8f8f" stroke-width="1"/><rect x="63.0" y="395.0" width="7" height="7" fill="#3b3b3b" stroke="#b4b4b4" stroke-width="1"/><path d="M64.5 398.5h4" stroke="#d0d0d0" stroke-width="1"/><path d="M66.5 396.5v4" stroke="#d0d0d0" stroke-width="1"/><g transform="translate(79.2,398.5)"><path d="M3.5 -4.5L-3 1l4.5 4.5" stroke="#b9a8ec" stroke-width="2" fill="none" stroke-linejoin="round"/><circle cx="3.8" cy="-4.8" r="1.8" fill="#d9cdf7"/><circle cx="-3" cy="1" r="1.9" fill="#b9a8ec"/><path d="M-3 1l5 5.5 1-1.5z" fill="#a795e6"/></g><path d="M57.5 414.5H66.5" stroke="#8f8f8f" stroke-width="1"/><circle cx="66.5" cy="414.5" r="1.7" fill="#a8a8a8"/><g transform="translate(79.2,414.1) rotate(-40)"><rect x="-6.5" y="-2.6" width="7.5" height="5.2" rx="2.6" fill="none" stroke="#e0585a" stroke-width="1.7"/><rect x="-1" y="-2.6" width="7.5" height="5.2" rx="2.6" fill="none" stroke="#e0585a" stroke-width="1.7"/></g><path d="M57.5 430.5H66.5" stroke="#8f8f8f" stroke-width="1"/><circle cx="66.5" cy="430.5" r="1.7" fill="#a8a8a8"/><g transform="translate(79.2,429.8) rotate(-40)"><rect x="-6.5" y="-2.6" width="7.5" height="5.2" rx="2.6" fill="none" stroke="#e0585a" stroke-width="1.7"/><rect x="-1" y="-2.6" width="7.5" height="5.2" rx="2.6" fill="none" stroke="#e0585a" stroke-width="1.7"/></g><path d="M47.5 445.5H57.5" stroke="#8f8f8f" stroke-width="1"/><circle cx="57.5" cy="445.5" r="1.7" fill="#a8a8a8"/><g transform="translate(69.8,445.4) rotate(-40)"><rect x="-6.5" y="-2.6" width="7.5" height="5.2" rx="2.6" fill="none" stroke="#e0585a" stroke-width="1.7"/><rect x="-1" y="-2.6" width="7.5" height="5.2" rx="2.6" fill="none" stroke="#e0585a" stroke-width="1.7"/></g><path d="M47.5 461.5H57.5" stroke="#8f8f8f" stroke-width="1"/><circle cx="57.5" cy="461.5" r="1.7" fill="#a8a8a8"/><g transform="translate(69.8,461.1) rotate(-40)"><rect x="-6.5" y="-2.6" width="7.5" height="5.2" rx="2.6" fill="none" stroke="#e0585a" stroke-width="1.7"/><rect x="-1" y="-2.6" width="7.5" height="5.2" rx="2.6" fill="none" stroke="#e0585a" stroke-width="1.7"/></g><path d="M38.5 477.5H47.5" stroke="#8f8f8f" stroke-width="1"/><circle cx="47.5" cy="477.5" r="1.7" fill="#a8a8a8"/><g transform="translate(60.5,476.7) rotate(-40)"><rect x="-6.5" y="-2.6" width="7.5" height="5.2" rx="2.6" fill="none" stroke="#e0585a" stroke-width="1.7"/><rect x="-1" y="-2.6" width="7.5" height="5.2" rx="2.6" fill="none" stroke="#e0585a" stroke-width="1.7"/></g><path d="M38.5 492.5H47.5" stroke="#8f8f8f" stroke-width="1"/><circle cx="47.5" cy="492.5" r="1.7" fill="#a8a8a8"/><g transform="translate(60.5,492.4) rotate(-40)"><rect x="-6.5" y="-2.6" width="7.5" height="5.2" rx="2.6" fill="none" stroke="#e0585a" stroke-width="1.7"/><rect x="-1" y="-2.6" width="7.5" height="5.2" rx="2.6" fill="none" stroke="#e0585a" stroke-width="1.7"/></g><path d="M29.5 508.5H38.5" stroke="#8f8f8f" stroke-width="1"/><circle cx="38.5" cy="508.5" r="1.7" fill="#a8a8a8"/><g transform="translate(51.2,508.0) rotate(-40)"><rect x="-6.5" y="-2.6" width="7.5" height="5.2" rx="2.6" fill="none" stroke="#e0585a" stroke-width="1.7"/><rect x="-1" y="-2.6" width="7.5" height="5.2" rx="2.6" fill="none" stroke="#e0585a" stroke-width="1.7"/></g><path d="M29.5 524.5H38.5" stroke="#8f8f8f" stroke-width="1"/><circle cx="38.5" cy="524.5" r="1.7" fill="#a8a8a8"/><g transform="translate(51.2,523.7) rotate(-40)"><rect x="-6.5" y="-2.6" width="7.5" height="5.2" rx="2.6" fill="none" stroke="#e0585a" stroke-width="1.7"/><rect x="-1" y="-2.6" width="7.5" height="5.2" rx="2.6" fill="none" stroke="#e0585a" stroke-width="1.7"/></g><rect x="16.0" y="536.0" width="7" height="7" fill="#3b3b3b" stroke="#b4b4b4" stroke-width="1"/><path d="M17.5 539.5h4" stroke="#d0d0d0" stroke-width="1"/><path d="M19.5 537.5v4" stroke="#d0d0d0" stroke-width="1"/><g transform="translate(32.5,539.3)"><path d="M-3.5 -5h9.5l-3 10h-9.5z" fill="#e8e8e8"/><path d="M-4.5 1.5l5-4 0 2.5h3.5v2.5h-3.5v2.5z" fill="#d94a4a"/></g></svg>
<div class="r" style="left:261px;top:167px;width:1px;height:552px;background:#3e3e3e;"></div>
<div class="r" style="left:40px;top:709px;width:221px;height:10px;background:#3b3b3b;"></div>
<svg class="r" style="left:41px;top:709px;" width="8" height="9" viewBox="0 0 8 9"><path d="M6 0.5v8L1.5 4.5z" fill="#cfcfcf"/></svg>
<svg class="r" style="left:253px;top:709px;" width="8" height="9" viewBox="0 0 8 9"><path d="M2 0.5v8l4.5-4z" fill="#cfcfcf"/></svg>
<div class="r" style="left:49px;top:710px;width:188px;height:7px;background:#5a5a5a;border-radius:3.5px"></div>
<div class="r" style="left:274px;top:116px;width:4px;height:608px;background:#3a3a3a;"></div>
<div class="r" style="left:278px;top:118px;width:844px;height:606px;background:#444444;border:1px solid #5c5c5c;box-sizing:border-box"></div>
<span class="t" style="left:285.8px;top:121.0px;font-size:9.3px;line-height:13.3px;color:#dcdcdc;transform:scaleX(0.9308);">View</span>
<span class="t" style="left:316.4px;top:121.0px;font-size:9.3px;line-height:13.3px;color:#dcdcdc;transform:scaleX(0.9760);">Shading</span>
<span class="t" style="left:361.7px;top:121.0px;font-size:9.3px;line-height:13.3px;color:#dcdcdc;transform:scaleX(1.0318);">Lighting</span>
<span class="t" style="left:407.0px;top:121.0px;font-size:9.3px;line-height:13.3px;color:#dcdcdc;transform:scaleX(0.9632);">Show</span>
<span class="t" style="left:441.4px;top:121.0px;font-size:9.3px;line-height:13.3px;color:#dcdcdc;transform:scaleX(0.9443);">Renderer</span>
<span class="t" style="left:490.0px;top:121.0px;font-size:9.3px;line-height:13.3px;color:#dcdcdc;transform:scaleX(0.8795);">Panels</span>
<div class="r" style="left:281px;top:135px;width:2px;height:13px;background:#8a8a8a;border-radius:1px"></div>
<div class="r" style="left:287.8px;top:134px;width:13.7px;height:15px;background:#5285a6;"></div>
<svg class="r" style="left:287.6px;top:134px;" width="14" height="14" viewBox="0 0 14 14"><circle cx="7" cy="7" r="6" fill="#7cc7d6"/><path d="M3.5 5.5L6.5 10.5 11 3.5" stroke="#f4f4f4" stroke-width="1.8" fill="none"/></svg>
<svg class="r" style="left:302.6px;top:134px;" width="14" height="14" viewBox="0 0 14 14"><rect x="1" y="1.5" width="12" height="11" fill="none" stroke="#e2e2e2" stroke-width="1.2"/><path d="M7 3.5a3.5 3.5 0 0 1 0 7z" fill="#e2e2e2"/></svg>
<svg class="r" style="left:317px;top:134px;" width="14" height="14" viewBox="0 0 14 14"><path d="M2 4l5-2.5 5 2.5v6l-5 2.5-5-2.5z" fill="none" stroke="#45b8c6" stroke-width="1.2"/><path d="M2 4l5 2.5 5-2.5M7 6.5v6" stroke="#45b8c6" fill="none"/><path d="M8 7v6l1.5-1.5 1 2 1-0.5-1-2h2z" fill="#e8e8e8"/></svg>
<div class="r" style="left:334.4px;top:135px;width:2px;height:13px;background:#8a8a8a;border-radius:1px"></div>
<svg class="r" style="left:339.8px;top:134px;" width="14" height="14" viewBox="0 0 14 14"><rect x="0.5" y="3.5" width="8.5" height="7" rx="1" fill="#e2e2e2"/><path d="M9.5 7l4-3.5v7z" fill="#e2e2e2"/></svg>
<svg class="r" style="left:354.7px;top:134px;" width="14" height="14" viewBox="0 0 14 14"><rect x="0.5" y="3.5" width="8.5" height="7" rx="1" fill="#e2e2e2"/><path d="M9.5 7l4-3.5v7z" fill="#e2e2e2"/><rect x="1" y="7" width="6" height="6" fill="#45b8c6"/><path d="M2.5 7V5.5a1.5 1.5 0 0 1 3 0V7" stroke="#45b8c6" fill="none"/></svg>
<svg class="r" style="left:369.6px;top:134px;" width="14" height="14" viewBox="0 0 14 14"><rect x="0.5" y="3.5" width="8.5" height="7" rx="1" fill="#e2e2e2"/><path d="M9.5 7l4-3.5v7z" fill="#e2e2e2"/><circle cx="4.5" cy="9" r="3" fill="none" stroke="#45b8c6" stroke-width="1.5"/></svg>
<svg class="r" style="left:385.4px;top:134px;" width="14" height="14" viewBox="0 0 14 14"><path d="M4 1.5h6v11L7 9.5l-3 3z" fill="#e2e2e2"/></svg>
<svg class="r" style="left:400px;top:134px;" width="14" height="14" viewBox="0 0 14 14"><path d="M1 12q4-1 6-5l1.5-5 1.5 5q1 3 3 3" fill="none" stroke="#45b8c6" stroke-width="1.5"/><path d="M1 12.5h12" stroke="#45b8c6"/></svg>
<svg class="r" style="left:415px;top:134px;" width="14" height="14" viewBox="0 0 14 14"><path d="M5 1v9M0.5 5.5h9" stroke="#45b8c6" stroke-width="1.3"/><circle cx="9" cy="9" r="3" fill="none" stroke="#e2e2e2" stroke-width="1.3"/><path d="M11 11.5l2.5 2" stroke="#e2e2e2" stroke-width="1.5"/></svg>
<svg class="r" style="left:429.3px;top:134px;" width="14" height="14" viewBox="0 0 14 14"><path d="M12.5 1.5l-7 8-2-1.5z" fill="#e2e2e2"/><path d="M1 13q1-4 4-3.5 1.5 2-1 3z" fill="#45b8c6"/></svg>
<div class="r" style="left:446.8px;top:135px;width:2px;height:13px;background:#8a8a8a;border-radius:1px"></div>
<div class="r" style="left:453.5px;top:134px;width:12.9px;height:15px;background:#5285a6;"></div>
<svg class="r" style="left:453px;top:134px;" width="14" height="14" viewBox="0 0 14 14"><rect x="1.5" y="1.5" width="11" height="11" fill="#2b3a44" stroke="#f0f0f0" stroke-width="1"/><path d="M5 1.5v11M9 1.5v11M1.5 5h11M1.5 9h11" stroke="#f0f0f0" stroke-width=".9"/></svg>
<svg class="r" style="left:467.4px;top:134px;" width="14" height="14" viewBox="0 0 14 14"><rect x="0.5" y="2" width="13" height="10" fill="none" stroke="#e2e2e2" stroke-width="1.2"/><g fill="#e2e2e2"><rect x="2" y="2" width="1.5" height="2"/><rect x="5" y="2" width="1.5" height="2"/><rect x="8" y="2" width="1.5" height="2"/><rect x="11" y="2" width="1.5" height="2"/><rect x="2" y="10" width="1.5" height="2"/><rect x="5" y="10" width="1.5" height="2"/><rect x="8" y="10" width="1.5" height="2"/><rect x="11" y="10" width="1.5" height="2"/></g></svg>
<svg class="r" style="left:482.3px;top:134px;" width="14" height="14" viewBox="0 0 14 14"><rect x="0.5" y="2" width="13" height="10" fill="none" stroke="#e2e2e2" stroke-width="1.2"/><rect x="4" y="4.5" width="6" height="5" fill="#45b8c6"/></svg>
<svg class="r" style="left:496.7px;top:134px;" width="14" height="14" viewBox="0 0 14 14"><rect x="1" y="2" width="12" height="10" fill="#4e4e4e"/><circle cx="7" cy="7" r="2.5" fill="#5c5c5c"/></svg>
<svg class="r" style="left:511.9px;top:134px;" width="14" height="14" viewBox="0 0 14 14"><rect x="0.5" y="2" width="13" height="10" fill="none" stroke="#e2e2e2" stroke-width="1.2"/><path d="M0.5 7h13M7 4.5v5" stroke="#45b8c6" stroke-width="1"/></svg>
<svg class="r" style="left:526.8px;top:134px;" width="14" height="14" viewBox="0 0 14 14"><rect x="0.5" y="2" width="13" height="10" fill="none" stroke="#e2e2e2" stroke-width="1.2"/><path d="M2.5 10.5l3-4 2.5 3 2-2 2 3z" fill="#45b8c6"/></svg>
<svg class="r" style="left:541.7px;top:134px;" width="14" height="14" viewBox="0 0 14 14"><rect x="0.5" y="2" width="13" height="10" fill="none" stroke="#e2e2e2" stroke-width="1.2"/><path d="M4 4.5h6M7 4.5v6" stroke="#45b8c6" stroke-width="1.6"/></svg>
<div class="r" style="left:560px;top:135px;width:2px;height:13px;background:#8a8a8a;border-radius:1px"></div>
<svg class="r" style="left:565.5px;top:134px;" width="14" height="14" viewBox="0 0 14 14"><path d="M1.5 4l5.5-2.5 5.5 2.5v6.5L7 13 1.5 10.5z" fill="none" stroke="#e2e2e2" stroke-width="1"/><path d="M1.5 4L7 6.5 12.5 4M7 6.5V13" stroke="#e2e2e2" fill="none" stroke-width="1"/></svg>
<div class="r" style="left:581px;top:134px;width:13.5px;height:15px;background:#5285a6;"></div>
<svg class="r" style="left:581px;top:134px;" width="14" height="14" viewBox="0 0 14 14"><path d="M1.5 4l5.5-2.5 5.5 2.5v6.5L7 13 1.5 10.5z" fill="#4fc3d2" stroke="#203038" stroke-width="1"/><path d="M1.5 4L7 6.5 12.5 4M7 6.5V13" stroke="#203038" fill="none" stroke-width="1"/></svg>
<svg class="r" style="left:595.6px;top:134px;" width="14" height="14" viewBox="0 0 14 14"><circle cx="7" cy="7" r="5.8" fill="#e2e2e2"/><path d="M7 1.5v11M10 2.5v9M4 2.5v9M1.5 7h11" stroke="#555" stroke-width=".8"/><path d="M7 1.2a5.8 5.8 0 0 1 0 11.6z" fill="#555" opacity=".55"/></svg>
<svg class="r" style="left:610.5px;top:134px;" width="14" height="14" viewBox="0 0 14 14"><path d="M1.5 4l5.5-2.5 5.5 2.5v6.5L7 13 1.5 10.5z" fill="#e2e2e2" stroke="#3a3a3a" stroke-width="1"/><path d="M1.5 4L7 6.5 12.5 4M7 6.5V13" stroke="#3a3a3a" fill="none" stroke-width="1"/><path d="M4 5.5v6M9.5 5.5v6" stroke="#45b8c6" stroke-width=".9"/></svg>
<div class="r" style="left:625.5px;top:134px;width:14.5px;height:15px;background:#5285a6;"></div>
<svg class="r" style="left:625.7px;top:134px;" width="14" height="14" viewBox="0 0 14 14"><circle cx="7" cy="7" r="5.8" fill="#f0f0f0"/><clipPath id="ck"><circle cx="7" cy="7" r="5.8"/></clipPath><g clip-path="url(#ck)"><rect x="4" y="2" width="2" height="2" fill="#222"/><rect x="8" y="2" width="2" height="2" fill="#222"/><rect x="2" y="4" width="2" height="2" fill="#222"/><rect x="6" y="4" width="2" height="2" fill="#222"/><rect x="10" y="4" width="2" height="2" fill="#222"/><rect x="4" y="6" width="2" height="2" fill="#222"/><rect x="8" y="6" width="2" height="2" fill="#222"/><rect x="2" y="8" width="2" height="2" fill="#222"/><rect x="6" y="8" width="2" height="2" fill="#222"/><rect x="10" y="8" width="2" height="2" fill="#222"/><rect x="4" y="10" width="2" height="2" fill="#222"/><rect x="8" y="10" width="2" height="2" fill="#222"/></g></svg>
<svg class="r" style="left:639.4px;top:134px;" width="14" height="14" viewBox="0 0 14 14"><circle cx="7" cy="6" r="3.3" fill="#f0f0f0"/><rect x="5.5" y="9" width="3" height="3.5" fill="#f0f0f0"/><g stroke="#e2e2e2" stroke-width="1"><path d="M7 0v1.5M1.5 2l1.2 1.2M12.5 2l-1.2 1.2M0.5 6.5h1.5M12 6.5h1.5"/></g></svg>
<svg class="r" style="left:654.4px;top:134px;" width="14" height="14" viewBox="0 0 14 14"><circle cx="8.5" cy="6.5" r="5" fill="#45b8c6"/><ellipse cx="4" cy="11" rx="3.5" ry="1.8" fill="#7a7a7a"/><path d="M1 9.5l3 1" stroke="#45b8c6"/></svg>
<div class="r" style="left:671.8px;top:135px;width:2px;height:13px;background:#8a8a8a;border-radius:1px"></div>
<svg class="r" style="left:677.3px;top:134px;" width="14" height="14" viewBox="0 0 14 14"><circle cx="7" cy="5.5" r="4.8" fill="#d8d8d8"/><ellipse cx="7" cy="11.5" rx="5.5" ry="1.8" fill="none" stroke="#45b8c6" stroke-width="1"/></svg>
<svg class="r" style="left:694.4px;top:134px;" width="14" height="14" viewBox="0 0 14 14"><circle cx="8" cy="6" r="4.8" fill="#d0d0d0"/><circle cx="5" cy="9" r="3.5" fill="#8a8a8a"/></svg>
<svg class="r" style="left:707.3px;top:134px;" width="14" height="14" viewBox="0 0 14 14"><circle cx="7" cy="7" r="5" fill="none" stroke="#45b8c6" stroke-width="2"/><path d="M7 2a5 5 0 0 1 0 10" fill="none" stroke="#e8e8e8" stroke-width="2"/></svg>
<svg class="r" style="left:723px;top:134px;" width="14" height="14" viewBox="0 0 14 14"><rect x="1" y="1.5" width="12" height="11" fill="#3d4f55"/></svg>
<div class="r" style="left:740px;top:135px;width:2px;height:13px;background:#8a8a8a;border-radius:1px"></div>
<svg class="r" style="left:746px;top:134px;" width="14" height="14" viewBox="0 0 14 14"><rect x="1" y="1.5" width="8" height="7" fill="none" stroke="#45b8c6" stroke-dasharray="2 1.2"/><path d="M7 5v8l2-1.8 1.3 2.6 1.2-0.6-1.3-2.6h2.6z" fill="#f0f0f0"/></svg>
<div class="r" style="left:763.5px;top:135px;width:2px;height:13px;background:#8a8a8a;border-radius:1px"></div>
<svg class="r" style="left:769px;top:134px;" width="14" height="14" viewBox="0 0 14 14"><rect x="1" y="4.5" width="8" height="8" fill="#e2e2e2"/><rect x="5" y="1.5" width="8" height="8" fill="none" stroke="#e2e2e2" stroke-width="1.5"/></svg>
<svg class="r" style="left:784px;top:134px;" width="14" height="14" viewBox="0 0 14 14"><rect x="5" y="1.5" width="8" height="8" fill="#8a8a8a"/><rect x="1" y="4.5" width="8" height="8" fill="#e2e2e2"/></svg>
<div class="r" style="left:799px;top:134px;width:13.7px;height:15px;background:#2e3d47;border:1px solid #5285a6;box-sizing:border-box"></div>
<svg class="r" style="left:799px;top:134px;" width="14" height="14" viewBox="0 0 14 14"><rect x="2" y="2" width="10" height="10" fill="none" stroke="#f0f0f0" stroke-width="1.2"/><path d="M4.5 4.5l5 5M4.5 4.5h3M4.5 4.5v3" stroke="#f0f0f0" stroke-width="1.2" fill="none"/></svg>
<div class="r" style="left:816.5px;top:135px;width:2px;height:13px;background:#8a8a8a;border-radius:1px"></div>
<svg class="r" style="left:823.4px;top:134px;" width="14" height="14" viewBox="0 0 14 14"><circle cx="7" cy="7" r="5.5" fill="#e8e8e8"/><g stroke="#444" stroke-width="1.1"><path d="M7 7L4 1.5M7 7l6 -1.5M7 7L12 11.5M7 7L5.5 13M7 7L1 9"/></g><circle cx="7" cy="7" r="1.8" fill="#444"/></svg>
<div class="r" style="left:839px;top:134.5px;width:30px;height:13.5px;background:#2b2b2b;border-radius:1px"></div>
<span class="t" style="left:843.0px;top:135.9px;font-size:9.3px;line-height:13.3px;color:#dcdcdc;transform:scaleX(0.9948);">0.00</span>
<svg class="r" style="left:870.8px;top:134px;" width="14" height="14" viewBox="0 0 14 14"><rect x="3" y="1.5" width="9" height="11" rx="1" fill="#e8e8e8"/><path d="M7.5 3.5a3.5 3.5 0 0 0 0 7z" fill="#444"/><path d="M0.5 5l2.5 2-2.5 2z" fill="#e8e8e8"/></svg>
<div class="r" style="left:887px;top:134.5px;width:29px;height:13.5px;background:#2b2b2b;border-radius:1px"></div>
<span class="t" style="left:891.0px;top:135.9px;font-size:9.3px;line-height:13.3px;color:#dcdcdc;transform:scaleX(0.9395);">1.00</span>
<div class="r" style="left:919.3px;top:134px;width:14px;height:15px;background:#5285a6;"></div>
<svg class="r" style="left:919.3px;top:134px;" width="14" height="14" viewBox="0 0 14 14"><circle cx="7" cy="7" r="5.8" fill="#4fc3d2" stroke="#1f3038" stroke-width="1"/><text x="7" y="9" font-size="5.5" font-weight="bold" font-family="Liberation Sans, sans-serif" text-anchor="middle" fill="#1f3038">ON</text></svg>
<div class="r" style="left:934.5px;top:134px;width:155px;height:15px;background:#5d5d5d;"></div>
<div class="r" style="left:1073.6px;top:134px;width:15.9px;height:15px;background:#565656;"></div>
<span class="t" style="left:938.0px;top:135.9px;font-size:9.3px;line-height:13.3px;color:#e0e0e0;transform:scaleX(0.8579);">ACES 1.0 SDR-video (sRGB)</span>
<svg class="r" style="left:1078px;top:139px;" width="10" height="6" viewBox="0 0 10 6"><path d="M0.5 0.5h8L4.5 5z" fill="#d8d8d8"/></svg>
<svg class="r" style="left:279px;top:149px" width="842" height="574" viewBox="279 149 842 574"><defs>
<filter id="b05" x="-20%" y="-20%" width="140%" height="140%"><feGaussianBlur stdDeviation="0.6"/></filter>
<filter id="b15" x="-20%" y="-30%" width="140%" height="160%"><feGaussianBlur stdDeviation="1.4"/></filter>
<filter id="b1" x="-20%" y="-20%" width="140%" height="140%"><feGaussianBlur stdDeviation="1"/></filter>
<filter id="b2" x="-20%" y="-20%" width="140%" height="140%"><feGaussianBlur stdDeviation="2"/></filter>
<filter id="b3" x="-30%" y="-30%" width="160%" height="160%"><feGaussianBlur stdDeviation="3.5"/></filter>
<filter id="b6" x="-30%" y="-30%" width="160%" height="160%"><feGaussianBlur stdDeviation="6"/></filter>
<filter id="b12" x="-40%" y="-40%" width="180%" height="180%"><feGaussianBlur stdDeviation="12"/></filter>
<filter id="spk" x="0" y="0" width="100%" height="100%"><feTurbulence type="fractalNoise" baseFrequency="0.7" numOctaves="1" seed="3" result="n"/><feColorMatrix in="n" type="matrix" values="0 0 0 0 0.13  0 0 0 0 0.08  0 0 0 0 0.06  16 0 0 0 -8.5"/><feComposite in2="SourceGraphic" operator="in"/></filter>
<filter id="spk2" x="0" y="0" width="100%" height="100%"><feTurbulence type="fractalNoise" baseFrequency="0.85" numOctaves="1" seed="8" result="n"/><feColorMatrix in="n" type="matrix" values="0 0 0 0 0.16  0 0 0 0 0.1  0 0 0 0 0.07  12 0 0 0 -5.6"/><feComposite in2="SourceGraphic" operator="in"/></filter>
<filter id="spk3" x="0" y="0" width="100%" height="100%"><feTurbulence type="fractalNoise" baseFrequency="1.1" numOctaves="1" seed="21" result="n"/><feColorMatrix in="n" type="matrix" values="0 0 0 0 0.52  0 0 0 0 0.28  0 0 0 0 0.2  10 0 0 0 -4.5"/><feComposite in2="SourceGraphic" operator="in"/></filter>
<filter id="dotA" x="-10%" y="-10%" width="120%" height="120%"><feTurbulence type="fractalNoise" baseFrequency="1.0" numOctaves="1" seed="31" result="n"/><feColorMatrix in="n" type="matrix" values="0 0 0 0 0  0 0 0 0 0  0 0 0 0 0  12 0 0 0 -5.4" result="m"/><feGaussianBlur in="SourceGraphic" stdDeviation="3" result="bl"/><feComposite in="bl" in2="m" operator="in"/></filter>
<filter id="dotB" x="-10%" y="-10%" width="120%" height="120%"><feTurbulence type="fractalNoise" baseFrequency="1.0" numOctaves="1" seed="47" result="n"/><feColorMatrix in="n" type="matrix" values="0 0 0 0 0  0 0 0 0 0  0 0 0 0 0  12 0 0 0 -5.7" result="m"/><feGaussianBlur in="SourceGraphic" stdDeviation="5" result="bl"/><feComposite in="bl" in2="m" operator="in"/></filter>
<filter id="hairn" x="-8%" y="-8%" width="116%" height="116%"><feTurbulence type="fractalNoise" baseFrequency="0.5" numOctaves="2" seed="5" result="n"/><feDisplacementMap in="SourceGraphic" in2="n" scale="9" xChannelSelector="R" yChannelSelector="G"/><feGaussianBlur stdDeviation="0.5"/></filter>
<filter id="hairw" x="-8%" y="-8%" width="116%" height="116%"><feTurbulence type="fractalNoise" baseFrequency="0.9" numOctaves="1" seed="9" result="n"/><feDisplacementMap in="SourceGraphic" in2="n" scale="14" xChannelSelector="R" yChannelSelector="G" result="dsp"/><feColorMatrix in="n" type="matrix" values="0 0 0 0 0  0 0 0 0 0  0 0 0 0 0  9 0 0 0 -4.2" result="msk"/><feComposite in="dsp" in2="msk" operator="in"/></filter>
<filter id="beardn" x="-10%" y="-10%" width="120%" height="120%"><feTurbulence type="fractalNoise" baseFrequency="0.55" numOctaves="2" seed="11" result="n"/><feDisplacementMap in="SourceGraphic" in2="n" scale="6" xChannelSelector="R" yChannelSelector="G"/><feGaussianBlur stdDeviation="0.8"/></filter>
<filter id="strk" x="0" y="0" width="100%" height="100%"><feTurbulence type="fractalNoise" baseFrequency="0.6 0.08" numOctaves="2" seed="4" result="n"/><feColorMatrix in="n" type="matrix" values="0 0 0 0 0.56  0 0 0 0 0.52  0 0 0 0 0.48  7 0 0 0 -3.9"/><feComposite in2="SourceGraphic" operator="in"/></filter>
<filter id="hstrk" x="0" y="0" width="100%" height="100%"><feTurbulence type="fractalNoise" baseFrequency="0.06 0.35" numOctaves="2" seed="14" result="n"/><feColorMatrix in="n" type="matrix" values="0 0 0 0 0.43  0 0 0 0 0.33  0 0 0 0 0.2  6 0 0 0 -3.1"/><feComposite in2="SourceGraphic" operator="in"/></filter>
<radialGradient id="faceg" cx="722" cy="340" r="165" gradientUnits="userSpaceOnUse"><stop offset="0" stop-color="#efcaad"/><stop offset=".5" stop-color="#eabf9f"/><stop offset=".85" stop-color="#deac8d"/><stop offset="1" stop-color="#cc9474"/></radialGradient>
<linearGradient id="bodyg" x1="0" y1="540" x2="0" y2="723" gradientUnits="userSpaceOnUse"><stop offset="0" stop-color="#d5a27f"/><stop offset=".35" stop-color="#d8a683"/><stop offset="1" stop-color="#d6a786"/></linearGradient>
<linearGradient id="beardg" x1="0" y1="440" x2="0" y2="582" gradientUnits="userSpaceOnUse"><stop offset="0" stop-color="#463226"/><stop offset=".6" stop-color="#4c392b"/><stop offset="1" stop-color="#574639"/></linearGradient>
<clipPath id="vpc"><rect x="279" y="149" width="842" height="574"/></clipPath>
<clipPath id="bodyc"><path d="M279 687L300 670.5L348 634L385 608Q405 595 430 585T475 576.5L520 570L559 564Q590 555 612 544L636 533L652 518H790L802 537L820 549Q838 557 860 563T925 573L953 574Q968 575 981 579.4T1009.4 588T1037.5 604.7L1065.7 627L1093.8 649.7L1121 668V723H279z"/></clipPath>
<clipPath id="facec"><path d="M712.0 238.0C722.0 238.0 735.3 237.8 745.0 239.0C754.7 240.2 762.5 242.0 770.0 245.0C777.5 248.0 782.8 251.5 790.0 257.0C797.2 262.5 807.2 270.5 813.0 278.0C818.8 285.5 821.8 294.0 825.0 302.0C828.2 310.0 830.2 318.0 832.0 326.0C833.8 334.0 835.2 341.0 836.0 350.0C836.8 359.0 837.0 368.3 837.0 380.0C837.0 391.7 836.7 408.2 836.0 420.0C835.3 431.8 834.2 440.2 833.0 451.0C831.8 461.8 831.2 475.3 829.0 485.0C826.8 494.7 823.6 501.5 820.0 509.0C816.4 516.5 812.1 523.3 807.5 530.0C802.9 536.7 798.3 543.3 792.6 549.4C786.9 555.5 780.2 562.1 773.4 566.5C766.6 570.9 759.8 573.8 752.0 576.0C744.2 578.2 735.0 580.2 726.5 580.0C718.0 579.8 708.8 577.6 701.0 575.0C693.2 572.4 686.4 568.6 679.6 564.3C672.8 560.0 666.1 554.7 660.4 549.4C654.7 544.1 650.0 538.1 645.4 532.4C640.8 526.7 636.6 521.7 632.7 515.3C628.8 508.9 625.2 501.1 622.0 494.0C618.8 486.9 615.6 479.8 613.5 472.7C611.4 465.6 610.8 460.1 609.5 451.3C608.2 442.5 606.8 431.9 606.0 420.0C605.2 408.1 604.8 391.7 605.0 380.0C605.2 368.3 606.4 359.0 607.4 350.0C608.4 341.0 609.6 334.0 611.0 326.0C612.4 318.0 613.7 309.9 615.7 302.0C617.7 294.1 618.6 286.0 622.8 278.5C626.9 271.0 634.1 262.6 640.6 257.0C647.1 251.4 654.6 248.0 662.0 245.0C669.4 242.0 676.7 240.2 685.0 239.0C693.3 237.8 702.0 238.0 712.0 238.0z"/></clipPath>
<clipPath id="hairc"><path d="M722.0 183.0C735.3 182.7 747.2 183.3 760.0 187.0C772.8 190.7 788.8 198.0 799.0 205.0C809.2 212.0 815.0 220.7 821.0 229.0C827.0 237.3 831.2 246.8 835.0 255.0C838.8 263.2 841.5 270.2 844.0 278.0C846.5 285.8 848.3 294.0 850.0 302.0C851.7 310.0 853.0 318.0 854.0 326.0C855.0 334.0 855.5 340.2 856.0 350.0C856.5 359.8 857.3 376.0 857.0 385.0C856.7 394.0 855.3 398.8 854.0 404.0C852.7 409.2 850.7 416.0 849.0 416.0C847.3 416.0 845.7 413.3 844.0 404.0C842.3 394.7 840.8 373.0 839.0 360.0C837.2 347.0 835.3 336.0 833.0 326.0C830.7 316.0 828.5 308.3 825.0 300.0C821.5 291.7 817.8 283.3 812.0 276.0C806.2 268.7 798.7 261.7 790.0 256.0C781.3 250.3 773.0 245.2 760.0 242.0C747.0 238.8 727.8 236.8 712.0 237.0C696.2 237.2 677.0 239.5 665.0 243.0C653.0 246.5 647.2 251.8 640.0 258.0C632.8 264.2 626.2 272.5 622.0 280.0C617.8 287.5 617.0 295.3 615.0 303.0C613.0 310.7 611.5 317.8 610.0 326.0C608.5 334.2 607.0 342.2 606.0 352.0C605.0 361.8 605.0 376.7 604.0 385.0C603.0 393.3 601.7 396.2 600.0 402.0C598.3 407.8 596.0 415.8 594.0 420.0C592.0 424.2 590.2 427.7 588.0 427.0C585.8 426.3 583.3 420.8 581.0 416.0C578.7 411.2 575.9 404.3 574.0 398.0C572.1 391.7 570.0 386.0 569.5 378.0C569.0 370.0 569.7 358.7 570.7 350.0C571.7 341.3 573.7 334.0 575.4 326.0C577.1 318.0 578.8 309.9 581.0 302.0C583.2 294.1 585.6 286.4 588.4 278.5C591.2 270.6 594.2 262.7 598.0 254.8C601.8 246.9 604.3 238.9 611.0 231.0C617.7 223.1 626.5 214.4 638.0 207.4C649.5 200.4 666.0 193.1 680.0 189.0C694.0 184.9 708.7 183.3 722.0 183.0z"/></clipPath>
</defs><g clip-path="url(#vpc)"><rect x="279" y="149" width="842" height="574" fill="#e0e0e0"/><path d="M279 687L300 670.5L348 634L385 608Q405 595 430 585T475 576.5L520 570L559 564Q590 555 612 544L636 533L652 518H790L802 537L820 549Q838 557 860 563T925 573L953 574Q968 575 981 579.4T1009.4 588T1037.5 604.7L1065.7 627L1093.8 649.7L1121 668V723H279z" fill="url(#bodyg)"/><g clip-path="url(#bodyc)"><rect x="478" y="520" width="476.5" height="154.5" fill="#d6a380"/><ellipse cx="722" cy="635" rx="130" ry="55" fill="#dfb08f" filter="url(#b12)"/><path d="M560 600Q620 640 700 668" stroke="#c07e5e" stroke-width="9" fill="none" filter="url(#b6)" opacity=".8"/><path d="M884 600Q830 640 745 668" stroke="#c07e5e" stroke-width="9" fill="none" filter="url(#b6)" opacity=".8"/><ellipse cx="925" cy="588" rx="32" ry="16" fill="#c27b58" filter="url(#b6)" opacity=".7"/><ellipse cx="505" cy="590" rx="30" ry="12" fill="#c27b58" filter="url(#b6)" opacity=".45"/><ellipse cx="722" cy="572" rx="80" ry="22" fill="#bd8566" filter="url(#b6)" opacity=".55"/><rect x="478" y="520" width="476.5" height="154.5" fill="#000" filter="url(#spk3)" opacity=".5"/><rect x="279" y="540" width="199" height="183" fill="#d6a685"/><rect x="954.5" y="540" width="167" height="183" fill="#d6a685"/><rect x="478" y="674.5" width="476.5" height="49" fill="#d0a892"/><rect x="279" y="540" width="199" height="183" fill="#000" filter="url(#spk)"/><rect x="954.5" y="540" width="167" height="183" fill="#000" filter="url(#spk)"/><rect x="478" y="674.5" width="476.5" height="49" fill="#000" filter="url(#spk2)"/></g><path d="M722.0 183.0C735.3 182.7 747.2 183.3 760.0 187.0C772.8 190.7 788.8 198.0 799.0 205.0C809.2 212.0 815.0 220.7 821.0 229.0C827.0 237.3 831.2 246.8 835.0 255.0C838.8 263.2 841.5 270.2 844.0 278.0C846.5 285.8 848.3 294.0 850.0 302.0C851.7 310.0 853.0 318.0 854.0 326.0C855.0 334.0 855.5 340.2 856.0 350.0C856.5 359.8 857.3 376.0 857.0 385.0C856.7 394.0 855.3 398.8 854.0 404.0C852.7 409.2 850.7 416.0 849.0 416.0C847.3 416.0 845.7 413.3 844.0 404.0C842.3 394.7 840.8 373.0 839.0 360.0C837.2 347.0 835.3 336.0 833.0 326.0C830.7 316.0 828.5 308.3 825.0 300.0C821.5 291.7 817.8 283.3 812.0 276.0C806.2 268.7 798.7 261.7 790.0 256.0C781.3 250.3 773.0 245.2 760.0 242.0C747.0 238.8 727.8 236.8 712.0 237.0C696.2 237.2 677.0 239.5 665.0 243.0C653.0 246.5 647.2 251.8 640.0 258.0C632.8 264.2 626.2 272.5 622.0 280.0C617.8 287.5 617.0 295.3 615.0 303.0C613.0 310.7 611.5 317.8 610.0 326.0C608.5 334.2 607.0 342.2 606.0 352.0C605.0 361.8 605.0 376.7 604.0 385.0C603.0 393.3 601.7 396.2 600.0 402.0C598.3 407.8 596.0 415.8 594.0 420.0C592.0 424.2 590.2 427.7 588.0 427.0C585.8 426.3 583.3 420.8 581.0 416.0C578.7 411.2 575.9 404.3 574.0 398.0C572.1 391.7 570.0 386.0 569.5 378.0C569.0 370.0 569.7 358.7 570.7 350.0C571.7 341.3 573.7 334.0 575.4 326.0C577.1 318.0 578.8 309.9 581.0 302.0C583.2 294.1 585.6 286.4 588.4 278.5C591.2 270.6 594.2 262.7 598.0 254.8C601.8 246.9 604.3 238.9 611.0 231.0C617.7 223.1 626.5 214.4 638.0 207.4C649.5 200.4 666.0 193.1 680.0 189.0C694.0 184.9 708.7 183.3 722.0 183.0z" fill="none" stroke="#2a2019" stroke-width="9" filter="url(#hairw)" opacity=".9"/><path d="M722.0 183.0C735.3 182.7 747.2 183.3 760.0 187.0C772.8 190.7 788.8 198.0 799.0 205.0C809.2 212.0 815.0 220.7 821.0 229.0C827.0 237.3 831.2 246.8 835.0 255.0C838.8 263.2 841.5 270.2 844.0 278.0C846.5 285.8 848.3 294.0 850.0 302.0C851.7 310.0 853.0 318.0 854.0 326.0C855.0 334.0 855.5 340.2 856.0 350.0C856.5 359.8 857.3 376.0 857.0 385.0C856.7 394.0 855.3 398.8 854.0 404.0C852.7 409.2 850.7 416.0 849.0 416.0C847.3 416.0 845.7 413.3 844.0 404.0C842.3 394.7 840.8 373.0 839.0 360.0C837.2 347.0 835.3 336.0 833.0 326.0C830.7 316.0 828.5 308.3 825.0 300.0C821.5 291.7 817.8 283.3 812.0 276.0C806.2 268.7 798.7 261.7 790.0 256.0C781.3 250.3 773.0 245.2 760.0 242.0C747.0 238.8 727.8 236.8 712.0 237.0C696.2 237.2 677.0 239.5 665.0 243.0C653.0 246.5 647.2 251.8 640.0 258.0C632.8 264.2 626.2 272.5 622.0 280.0C617.8 287.5 617.0 295.3 615.0 303.0C613.0 310.7 611.5 317.8 610.0 326.0C608.5 334.2 607.0 342.2 606.0 352.0C605.0 361.8 605.0 376.7 604.0 385.0C603.0 393.3 601.7 396.2 600.0 402.0C598.3 407.8 596.0 415.8 594.0 420.0C592.0 424.2 590.2 427.7 588.0 427.0C585.8 426.3 583.3 420.8 581.0 416.0C578.7 411.2 575.9 404.3 574.0 398.0C572.1 391.7 570.0 386.0 569.5 378.0C569.0 370.0 569.7 358.7 570.7 350.0C571.7 341.3 573.7 334.0 575.4 326.0C577.1 318.0 578.8 309.9 581.0 302.0C583.2 294.1 585.6 286.4 588.4 278.5C591.2 270.6 594.2 262.7 598.0 254.8C601.8 246.9 604.3 238.9 611.0 231.0C617.7 223.1 626.5 214.4 638.0 207.4C649.5 200.4 666.0 193.1 680.0 189.0C694.0 184.9 708.7 183.3 722.0 183.0z" fill="#281b13" filter="url(#hairn)"/><g clip-path="url(#hairc)"><g filter="url(#b05)"><path d="M714.4 238.3C704.2 193.9 725.8 149.1 710.2 182.7" stroke="#1c120c" stroke-width="1" fill="none" opacity=".45"/><path d="M715.4 238.3C705.5 193.9 726.1 148.5 710.5 182.1" stroke="#3a2a1c" stroke-width="2.6" fill="none" opacity=".45"/><path d="M714.7 231.2C701.7 188.4 711.0 150.9 695.8 184.1" stroke="#5a4630" stroke-width="1.4" fill="none" opacity=".45"/><path d="M719.2 234.9C710.6 192.1 715.4 153.8 700.2 187.0" stroke="#5a4630" stroke-width="1.4" fill="none" opacity=".45"/><path d="M715.4 239.8C701.4 198.6 698.0 157.7 683.2 190.5" stroke="#5a4630" stroke-width="2" fill="none" opacity=".45"/><path d="M718.6 235.5C708.7 194.3 702.1 156.6 687.3 189.4" stroke="#46331f" stroke-width="2" fill="none" opacity=".45"/><path d="M714.0 235.4C699.6 195.8 686.1 160.9 671.7 193.3" stroke="#3a2a1c" stroke-width="2.6" fill="none" opacity=".45"/><path d="M714.6 236.9C705.6 197.3 691.6 159.4 677.2 191.8" stroke="#46331f" stroke-width="1.4" fill="none" opacity=".45"/><path d="M716.3 235.0C705.9 197.0 679.0 163.4 665.0 195.4" stroke="#6a543a" stroke-width="2.6" fill="none" opacity=".45"/><path d="M717.4 238.1C703.7 200.1 675.7 167.8 661.7 199.8" stroke="#6a543a" stroke-width="1.4" fill="none" opacity=".45"/><path d="M715.0 239.2C705.6 202.8 669.0 169.8 655.4 201.4" stroke="#1c120c" stroke-width="2" fill="none" opacity=".45"/><path d="M715.4 233.5C701.3 197.1 664.2 169.4 650.6 201.0" stroke="#5a4630" stroke-width="1" fill="none" opacity=".45"/><path d="M716.8 239.5C706.8 204.7 657.1 175.5 643.9 206.7" stroke="#1c120c" stroke-width="2" fill="none" opacity=".45"/><path d="M714.7 239.4C702.2 204.6 654.8 178.6 641.6 209.8" stroke="#3a2a1c" stroke-width="2" fill="none" opacity=".45"/><path d="M716.1 239.1C697.9 205.9 639.9 184.0 627.1 214.8" stroke="#5a4630" stroke-width="1.4" fill="none" opacity=".45"/><path d="M718.6 236.2C706.3 203.0 645.9 182.0 633.1 212.8" stroke="#3a2a1c" stroke-width="1" fill="none" opacity=".45"/><path d="M712.7 236.7C694.8 205.1 631.3 192.4 618.9 222.8" stroke="#3a2a1c" stroke-width="2" fill="none" opacity=".45"/><path d="M714.8 238.5C701.3 206.9 635.6 195.9 623.2 226.3" stroke="#46331f" stroke-width="1.4" fill="none" opacity=".45"/><path d="M702.9 236.3C683.5 206.3 621.2 199.8 609.2 229.8" stroke="#1c120c" stroke-width="1.4" fill="none" opacity=".45"/><path d="M703.6 235.9C685.7 205.9 622.6 198.9 610.6 228.9" stroke="#1c120c" stroke-width="2" fill="none" opacity=".45"/><path d="M696.8 238.4C683.7 210.0 621.8 214.5 610.2 244.1" stroke="#1c120c" stroke-width="1" fill="none" opacity=".45"/><path d="M694.9 238.9C677.7 210.5 617.8 215.6 606.2 245.2" stroke="#1c120c" stroke-width="2.6" fill="none" opacity=".45"/><path d="M685.2 238.6C666.8 211.8 611.0 224.1 599.8 253.3" stroke="#46331f" stroke-width="1" fill="none" opacity=".45"/><path d="M687.6 238.7C673.9 211.9 615.6 224.4 604.4 253.6" stroke="#5a4630" stroke-width="1" fill="none" opacity=".45"/><path d="M676.6 240.8C658.7 215.6 606.8 236.8 596.0 265.6" stroke="#5a4630" stroke-width="1.4" fill="none" opacity=".45"/><path d="M676.8 239.7C659.3 214.5 607.2 234.5 596.4 263.3" stroke="#6a543a" stroke-width="2.6" fill="none" opacity=".45"/><path d="M665.5 243.6C643.3 220.0 597.9 250.6 587.5 279.0" stroke="#3a2a1c" stroke-width="2" fill="none" opacity=".45"/><path d="M665.4 241.4C642.9 217.8 597.6 246.1 587.2 274.5" stroke="#1c120c" stroke-width="1.4" fill="none" opacity=".45"/><path d="M658.7 245.9C638.8 223.9 597.0 259.1 587.0 287.1" stroke="#1c120c" stroke-width="1" fill="none" opacity=".45"/><path d="M659.7 246.2C641.7 224.2 598.9 259.6 588.9 287.6" stroke="#6a543a" stroke-width="2" fill="none" opacity=".45"/><path d="M652.1 251.3C634.6 230.9 596.2 272.4 586.6 300.0" stroke="#1c120c" stroke-width="2" fill="none" opacity=".45"/><path d="M651.0 252.0C631.3 231.6 594.0 274.0 584.4 301.6" stroke="#46331f" stroke-width="1.4" fill="none" opacity=".45"/><path d="M643.6 257.3C624.6 238.5 592.0 287.3 582.8 314.5" stroke="#6a543a" stroke-width="1" fill="none" opacity=".45"/><path d="M644.3 257.5C626.6 238.7 593.4 287.6 584.2 314.8" stroke="#1c120c" stroke-width="2" fill="none" opacity=".45"/><path d="M635.5 264.5C612.7 247.3 585.6 301.0 576.8 327.8" stroke="#6a543a" stroke-width="1" fill="none" opacity=".45"/><path d="M634.6 262.4C610.0 245.2 583.8 296.7 575.0 323.5" stroke="#1c120c" stroke-width="1" fill="none" opacity=".45"/><path d="M635.7 263.7C612.3 248.1 583.3 312.0 574.9 338.4" stroke="#1c120c" stroke-width="1" fill="none" opacity=".45"/><path d="M637.4 264.1C617.5 248.5 586.8 312.8 578.4 339.2" stroke="#46331f" stroke-width="2.6" fill="none" opacity=".45"/><path d="M630.9 270.1C609.2 256.1 583.3 322.9 575.3 348.9" stroke="#3a2a1c" stroke-width="2.6" fill="none" opacity=".45"/><path d="M629.3 271.9C604.5 257.9 580.2 326.6 572.2 352.6" stroke="#46331f" stroke-width="1" fill="none" opacity=".45"/><path d="M622.3 279.1C594.7 266.7 577.1 339.2 569.5 364.8" stroke="#1c120c" stroke-width="2.6" fill="none" opacity=".45"/><path d="M624.3 277.5C600.8 265.1 581.2 335.9 573.6 361.5" stroke="#5a4630" stroke-width="1" fill="none" opacity=".45"/><path d="M620.1 287.8C594.7 277.0 579.0 352.3 571.8 377.5" stroke="#46331f" stroke-width="1" fill="none" opacity=".45"/><path d="M619.0 285.9C591.4 275.1 576.8 348.4 569.6 373.6" stroke="#6a543a" stroke-width="2.6" fill="none" opacity=".45"/><path d="M618.6 294.2C594.9 285.0 580.9 359.9 574.1 384.7" stroke="#1c120c" stroke-width="2.6" fill="none" opacity=".45"/><path d="M618.6 296.7C594.8 287.5 580.9 364.8 574.1 389.6" stroke="#1c120c" stroke-width="1" fill="none" opacity=".45"/><path d="M616.1 305.5C591.9 297.9 583.1 376.9 576.7 401.3" stroke="#46331f" stroke-width="1.4" fill="none" opacity=".45"/><path d="M613.2 305.0C583.1 297.4 577.3 376.0 570.9 400.4" stroke="#1c120c" stroke-width="2.6" fill="none" opacity=".45"/><path d="M613.8 312.8C588.0 306.8 584.3 385.6 578.3 409.6" stroke="#6a543a" stroke-width="1" fill="none" opacity=".45"/><path d="M613.7 314.0C587.9 308.0 584.2 388.0 578.2 412.0" stroke="#5a4630" stroke-width="2.6" fill="none" opacity=".45"/><path d="M724.9 239.5C732.3 195.1 716.9 153.6 732.5 187.2" stroke="#6a543a" stroke-width="2.6" fill="none" opacity=".45"/><path d="M725.1 238.5C733.9 194.1 718.4 152.6 734.0 186.2" stroke="#1c120c" stroke-width="2" fill="none" opacity=".45"/><path d="M724.9 237.1C737.9 194.3 734.0 154.8 749.2 188.0" stroke="#3a2a1c" stroke-width="1" fill="none" opacity=".45"/><path d="M725.6 235.5C734.3 192.7 729.7 151.3 744.9 184.5" stroke="#46331f" stroke-width="2" fill="none" opacity=".45"/><path d="M724.1 234.9C736.7 193.7 745.2 156.6 760.0 189.4" stroke="#1c120c" stroke-width="2" fill="none" opacity=".45"/><path d="M726.4 239.2C733.9 198.0 740.1 156.5 754.9 189.3" stroke="#5a4630" stroke-width="2.6" fill="none" opacity=".45"/><path d="M727.5 237.1C741.8 197.5 757.3 157.5 771.7 189.9" stroke="#1c120c" stroke-width="2.6" fill="none" opacity=".45"/><path d="M726.5 236.7C741.7 197.1 758.2 158.9 772.6 191.3" stroke="#5a4630" stroke-width="2" fill="none" opacity=".45"/><path d="M722.7 240.0C730.9 202.0 761.6 165.2 775.6 197.2" stroke="#6a543a" stroke-width="2" fill="none" opacity=".45"/><path d="M728.0 232.4C740.1 194.4 765.6 162.3 779.6 194.3" stroke="#5a4630" stroke-width="1" fill="none" opacity=".45"/><path d="M725.7 236.6C736.7 200.2 774.9 167.6 788.5 199.2" stroke="#46331f" stroke-width="2.6" fill="none" opacity=".45"/><path d="M729.1 237.4C744.7 201.0 779.6 171.4 793.2 203.0" stroke="#1c120c" stroke-width="2.6" fill="none" opacity=".45"/><path d="M723.1 233.8C738.4 199.0 788.6 174.8 801.8 206.0" stroke="#3a2a1c" stroke-width="1" fill="none" opacity=".45"/><path d="M721.6 236.7C733.4 201.9 785.1 174.3 798.3 205.5" stroke="#1c120c" stroke-width="1.4" fill="none" opacity=".45"/><path d="M723.0 238.8C733.9 205.6 792.0 188.6 804.8 219.4" stroke="#1c120c" stroke-width="2.6" fill="none" opacity=".45"/><path d="M724.5 235.7C742.3 202.5 798.9 185.1 811.7 215.9" stroke="#46331f" stroke-width="1" fill="none" opacity=".45"/><path d="M717.9 236.3C736.8 204.7 807.7 194.3 820.1 224.7" stroke="#1c120c" stroke-width="2" fill="none" opacity=".45"/><path d="M716.1 236.1C731.6 204.5 804.2 193.9 816.6 224.3" stroke="#6a543a" stroke-width="2" fill="none" opacity=".45"/><path d="M726.9 239.1C745.3 209.1 813.2 209.1 825.2 239.1" stroke="#1c120c" stroke-width="1.4" fill="none" opacity=".45"/><path d="M725.7 236.9C741.8 206.9 810.9 204.6 822.9 234.6" stroke="#1c120c" stroke-width="2.6" fill="none" opacity=".45"/><path d="M735.9 238.5C754.0 210.1 818.1 217.3 829.7 246.9" stroke="#6a543a" stroke-width="1.4" fill="none" opacity=".45"/><path d="M737.2 237.9C757.9 209.5 820.8 216.1 832.4 245.7" stroke="#1c120c" stroke-width="1.4" fill="none" opacity=".45"/><path d="M744.5 238.5C761.4 211.7 821.9 227.2 833.1 256.4" stroke="#5a4630" stroke-width="2" fill="none" opacity=".45"/><path d="M744.6 237.7C761.7 210.9 822.1 225.4 833.3 254.6" stroke="#1c120c" stroke-width="2" fill="none" opacity=".45"/><path d="M754.7 241.8C773.9 216.6 828.3 240.8 839.1 269.6" stroke="#6a543a" stroke-width="2.6" fill="none" opacity=".45"/><path d="M752.3 240.8C766.8 215.6 823.5 238.8 834.3 267.6" stroke="#6a543a" stroke-width="1.4" fill="none" opacity=".45"/><path d="M761.9 244.6C777.3 221.0 828.3 253.6 838.7 282.0" stroke="#6a543a" stroke-width="2.6" fill="none" opacity=".45"/><path d="M762.1 242.8C777.9 219.2 828.7 250.0 839.1 278.4" stroke="#5a4630" stroke-width="1" fill="none" opacity=".45"/><path d="M771.8 245.4C789.9 223.4 833.4 260.8 843.4 288.8" stroke="#5a4630" stroke-width="2" fill="none" opacity=".45"/><path d="M772.0 245.8C790.4 223.8 833.8 261.7 843.8 289.7" stroke="#46331f" stroke-width="2.6" fill="none" opacity=".45"/><path d="M782.1 252.3C805.0 231.9 840.7 276.7 850.3 304.3" stroke="#1c120c" stroke-width="1.4" fill="none" opacity=".45"/><path d="M779.2 252.6C796.4 232.2 834.9 277.3 844.5 304.9" stroke="#1c120c" stroke-width="1.4" fill="none" opacity=".45"/><path d="M791.0 257.4C815.8 238.6 844.2 289.1 853.4 316.3" stroke="#5a4630" stroke-width="1.4" fill="none" opacity=".45"/><path d="M787.7 255.2C805.9 236.4 837.6 284.8 846.8 312.0" stroke="#3a2a1c" stroke-width="2.6" fill="none" opacity=".45"/><path d="M797.0 263.2C819.8 246.0 843.7 300.5 852.5 327.3" stroke="#3a2a1c" stroke-width="2" fill="none" opacity=".45"/><path d="M794.7 263.7C813.2 246.5 839.3 301.6 848.1 328.4" stroke="#1c120c" stroke-width="1" fill="none" opacity=".45"/><path d="M797.4 261.5C821.8 245.9 845.9 309.5 854.3 335.9" stroke="#5a4630" stroke-width="2" fill="none" opacity=".45"/><path d="M795.7 263.6C816.7 248.0 842.5 313.6 850.9 340.0" stroke="#3a2a1c" stroke-width="2.6" fill="none" opacity=".45"/><path d="M805.4 267.8C832.2 253.8 848.8 321.9 856.8 347.9" stroke="#5a4630" stroke-width="1.4" fill="none" opacity=".45"/><path d="M802.3 268.1C823.0 254.1 842.6 322.3 850.6 348.3" stroke="#6a543a" stroke-width="1.4" fill="none" opacity=".45"/><path d="M809.4 274.1C830.3 261.7 842.9 334.2 850.5 359.8" stroke="#1c120c" stroke-width="1.4" fill="none" opacity=".45"/><path d="M812.0 274.8C838.3 262.4 848.2 335.6 855.8 361.2" stroke="#3a2a1c" stroke-width="1" fill="none" opacity=".45"/><path d="M818.2 283.9C847.7 273.1 851.4 349.5 858.6 374.7" stroke="#3a2a1c" stroke-width="1" fill="none" opacity=".45"/><path d="M815.4 282.5C839.3 271.7 845.8 346.6 853.0 371.8" stroke="#6a543a" stroke-width="2.6" fill="none" opacity=".45"/><path d="M819.6 293.6C843.7 284.4 845.7 364.2 852.5 389.0" stroke="#46331f" stroke-width="2" fill="none" opacity=".45"/><path d="M822.6 291.1C852.6 281.9 851.6 359.3 858.4 384.1" stroke="#5a4630" stroke-width="2" fill="none" opacity=".45"/><path d="M824.2 302.0C849.2 294.4 844.3 376.2 850.7 400.6" stroke="#5a4630" stroke-width="2.6" fill="none" opacity=".45"/><path d="M826.0 300.5C854.6 292.9 847.9 373.2 854.3 397.6" stroke="#3a2a1c" stroke-width="2" fill="none" opacity=".45"/><path d="M826.6 309.5C851.5 303.5 842.0 385.0 848.0 409.0" stroke="#3a2a1c" stroke-width="1" fill="none" opacity=".45"/><path d="M829.8 309.1C861.4 303.1 848.5 384.2 854.5 408.2" stroke="#6a543a" stroke-width="2" fill="none" opacity=".45"/></g><path d="M610 330Q618 285 648 258Q680 240 712 240Q760 240 795 262Q826 290 834 335" stroke="#1d140e" stroke-width="8" fill="none" filter="url(#b3)" opacity=".6"/></g><path d="M609 384Q598 378 597 396Q598 425 605 447Q610 456 612 440z" fill="#b0765a"/><path d="M834 382Q842 376 844 396Q843 428 838 450Q834 458 831 440z" fill="#a86e52"/><path d="M842 376Q850 400 846 430" stroke="#2e2118" stroke-width="3" fill="none" filter="url(#hairn)"/><path d="M712.0 238.0C722.0 238.0 735.3 237.8 745.0 239.0C754.7 240.2 762.5 242.0 770.0 245.0C777.5 248.0 782.8 251.5 790.0 257.0C797.2 262.5 807.2 270.5 813.0 278.0C818.8 285.5 821.8 294.0 825.0 302.0C828.2 310.0 830.2 318.0 832.0 326.0C833.8 334.0 835.2 341.0 836.0 350.0C836.8 359.0 837.0 368.3 837.0 380.0C837.0 391.7 836.7 408.2 836.0 420.0C835.3 431.8 834.2 440.2 833.0 451.0C831.8 461.8 831.2 475.3 829.0 485.0C826.8 494.7 823.6 501.5 820.0 509.0C816.4 516.5 812.1 523.3 807.5 530.0C802.9 536.7 798.3 543.3 792.6 549.4C786.9 555.5 780.2 562.1 773.4 566.5C766.6 570.9 759.8 573.8 752.0 576.0C744.2 578.2 735.0 580.2 726.5 580.0C718.0 579.8 708.8 577.6 701.0 575.0C693.2 572.4 686.4 568.6 679.6 564.3C672.8 560.0 666.1 554.7 660.4 549.4C654.7 544.1 650.0 538.1 645.4 532.4C640.8 526.7 636.6 521.7 632.7 515.3C628.8 508.9 625.2 501.1 622.0 494.0C618.8 486.9 615.6 479.8 613.5 472.7C611.4 465.6 610.8 460.1 609.5 451.3C608.2 442.5 606.8 431.9 606.0 420.0C605.2 408.1 604.8 391.7 605.0 380.0C605.2 368.3 606.4 359.0 607.4 350.0C608.4 341.0 609.6 334.0 611.0 326.0C612.4 318.0 613.7 309.9 615.7 302.0C617.7 294.1 618.6 286.0 622.8 278.5C626.9 271.0 634.1 262.6 640.6 257.0C647.1 251.4 654.6 248.0 662.0 245.0C669.4 242.0 676.7 240.2 685.0 239.0C693.3 237.8 702.0 238.0 712.0 238.0z" fill="url(#faceg)"/><g clip-path="url(#facec)"><path d="M598 300Q622 380 634 520L598 520z" fill="#bb8060" filter="url(#b6)" opacity=".75"/><path d="M846 300Q824 380 812 520L848 520z" fill="#b27455" filter="url(#b6)" opacity=".8"/><path d="M608.0 450.0C607.3 441.7 604.3 415.0 604.0 400.0C603.7 385.0 604.8 372.3 606.0 360.0C607.2 347.7 609.3 335.7 611.0 326.0C612.7 316.3 613.8 310.0 616.0 302.0C618.2 294.0 619.8 285.7 624.0 278.0C628.2 270.3 634.2 261.8 641.0 256.0C647.8 250.2 653.2 246.0 665.0 243.0C676.8 240.0 696.2 238.2 712.0 238.0C727.8 237.8 747.0 238.8 760.0 242.0C773.0 245.2 781.2 251.0 790.0 257.0C798.8 263.0 807.2 270.5 813.0 278.0C818.8 285.5 821.8 294.0 825.0 302.0C828.2 310.0 830.0 316.3 832.0 326.0C834.0 335.7 836.0 347.7 837.0 360.0C838.0 372.3 838.5 385.0 838.0 400.0C837.5 415.0 834.7 441.7 834.0 450.0" stroke="#5a3c2c" stroke-width="14" fill="none" filter="url(#b6)" opacity=".55"/><path d="M608.0 450.0C607.3 441.7 604.3 415.0 604.0 400.0C603.7 385.0 604.8 372.3 606.0 360.0C607.2 347.7 609.3 335.7 611.0 326.0C612.7 316.3 613.8 310.0 616.0 302.0C618.2 294.0 619.8 285.7 624.0 278.0C628.2 270.3 634.2 261.8 641.0 256.0C647.8 250.2 653.2 246.0 665.0 243.0C676.8 240.0 696.2 238.2 712.0 238.0C727.8 237.8 747.0 238.8 760.0 242.0C773.0 245.2 781.2 251.0 790.0 257.0C798.8 263.0 807.2 270.5 813.0 278.0C818.8 285.5 821.8 294.0 825.0 302.0C828.2 310.0 830.0 316.3 832.0 326.0C834.0 335.7 836.0 347.7 837.0 360.0C838.0 372.3 838.5 385.0 838.0 400.0C837.5 415.0 834.7 441.7 834.0 450.0" stroke="#24170f" stroke-width="34" fill="none" filter="url(#dotB)"/><path d="M608.0 450.0C607.3 441.7 604.3 415.0 604.0 400.0C603.7 385.0 604.8 372.3 606.0 360.0C607.2 347.7 609.3 335.7 611.0 326.0C612.7 316.3 613.8 310.0 616.0 302.0C618.2 294.0 619.8 285.7 624.0 278.0C628.2 270.3 634.2 261.8 641.0 256.0C647.8 250.2 653.2 246.0 665.0 243.0C676.8 240.0 696.2 238.2 712.0 238.0C727.8 237.8 747.0 238.8 760.0 242.0C773.0 245.2 781.2 251.0 790.0 257.0C798.8 263.0 807.2 270.5 813.0 278.0C818.8 285.5 821.8 294.0 825.0 302.0C828.2 310.0 830.0 316.3 832.0 326.0C834.0 335.7 836.0 347.7 837.0 360.0C838.0 372.3 838.5 385.0 838.0 400.0C837.5 415.0 834.7 441.7 834.0 450.0" stroke="#24170f" stroke-width="16" fill="none" filter="url(#dotA)"/><ellipse cx="667" cy="373" rx="31" ry="14" fill="#9a5e4a" filter="url(#b6)" opacity=".9"/><ellipse cx="781" cy="374" rx="31" ry="14" fill="#9a5e4a" filter="url(#b6)" opacity=".9"/><ellipse cx="722" cy="366" rx="12" ry="14" fill="#d9a288" filter="url(#b6)" opacity=".6"/><ellipse cx="655" cy="430" rx="26" ry="24" fill="#e2a58a" filter="url(#b12)" opacity=".6"/><ellipse cx="792" cy="430" rx="26" ry="24" fill="#dc9c80" filter="url(#b12)" opacity=".7"/><rect x="600" y="236" width="240" height="347" fill="#000" filter="url(#spk3)" opacity="1"/><path d="M708 380Q700 430 692 446Q700 462 722 458Q748 462 758 446Q748 430 740 380z" fill="#e9bc9e" filter="url(#b3)" opacity=".45"/><path d="M754 388Q757 425 765 452" stroke="#a86a4e" stroke-width="9" fill="none" filter="url(#b6)" opacity=".8"/><path d="M693 430Q688 446 693 455Q698 460 703 457M757 430Q762 446 757 456Q752 461 747 458" stroke="#9a5a44" stroke-width="2.2" fill="none" filter="url(#b1)" opacity=".85"/><path d="M697 453Q708 462 722 459Q742 463 753 453Q745 465 722 465Q703 465 697 453z" fill="#8a4e3a" filter="url(#b2)" opacity=".9"/><ellipse cx="708.5" cy="455" rx="7" ry="2.8" fill="#4a241a" filter="url(#b1)"/><ellipse cx="741.5" cy="455.5" rx="7" ry="2.8" fill="#4a241a" filter="url(#b1)"/><path d="M608.0 440.0C608.2 441.9 608.6 445.9 609.5 451.3C610.4 456.8 611.4 465.6 613.5 472.7C615.6 479.8 618.8 486.9 622.0 494.0C625.2 501.1 628.8 508.9 632.7 515.3C636.6 521.7 640.8 526.7 645.4 532.4C650.0 538.1 654.7 544.1 660.4 549.4C666.1 554.7 672.8 560.0 679.6 564.3C686.4 568.6 693.2 572.3 701.0 575.0C708.8 577.7 718.0 580.3 726.5 580.5C735.0 580.7 744.2 578.3 752.0 576.0C759.8 573.7 766.6 570.9 773.4 566.5C780.2 562.1 786.9 555.4 792.6 549.4C798.3 543.4 802.9 536.9 807.5 530.2C812.1 523.5 816.7 516.5 820.3 509.0C823.9 501.5 827.0 492.9 829.0 485.4C831.0 477.9 831.7 471.6 832.5 464.0C833.3 456.4 833.8 444.0 834.0 440.0L829.0 446.0C828.3 448.7 826.8 455.4 824.6 462.0C822.4 468.6 819.2 478.3 816.0 485.4C812.8 492.5 809.3 498.9 805.4 504.6C801.5 510.3 796.0 517.7 792.6 519.6C789.2 521.5 786.8 518.4 785.0 516.0C783.2 513.6 783.2 500.8 782.0 505.0C780.8 509.2 782.7 533.6 777.7 541.0C772.7 548.4 760.5 547.6 752.0 549.4C743.5 551.2 735.0 551.6 726.5 551.6C718.0 551.6 709.5 551.2 701.0 549.4C692.5 547.6 680.8 548.4 675.3 541.0C669.8 533.6 669.9 509.2 668.0 505.0C666.1 500.8 666.0 514.0 664.0 516.0C662.0 518.0 658.7 518.2 656.0 517.0C653.3 515.8 651.1 512.8 647.6 509.0C644.1 505.2 638.7 499.3 634.8 494.0C630.9 488.7 627.2 483.4 624.0 477.0C620.8 470.6 617.8 460.8 615.6 455.6C613.4 450.4 611.8 447.6 611.0 446.0z" fill="url(#beardg)" filter="url(#beardn)"/><path d="M663.6 483.0C666.1 482.2 670.9 486.3 672.0 490.0C673.1 493.7 670.0 499.2 670.0 505.0C670.0 510.8 670.3 518.5 672.0 525.0C673.7 531.5 680.7 540.5 680.0 544.0C679.3 547.5 671.7 548.3 668.0 546.0C664.3 543.7 660.2 535.7 658.0 530.0C655.8 524.3 655.2 517.8 655.0 512.0C654.8 506.2 655.6 499.8 657.0 495.0C658.4 490.2 661.1 483.8 663.6 483.0z" fill="#4e3a2c" filter="url(#beardn)"/><path d="M774.5 483.0C772.0 482.2 768.6 486.3 768.0 490.0C767.4 493.7 770.3 499.2 771.0 505.0C771.7 510.8 772.5 518.5 772.0 525.0C771.5 531.5 766.7 540.5 768.0 544.0C769.3 547.5 776.3 548.3 780.0 546.0C783.7 543.7 787.8 535.7 790.0 530.0C792.2 524.3 794.2 517.8 793.0 512.0C791.8 506.2 786.1 499.8 783.0 495.0C779.9 490.2 777.0 483.8 774.5 483.0z" fill="#4e3a2c" filter="url(#beardn)"/><ellipse cx="724.5" cy="527" rx="16" ry="6.5" fill="#54402f" filter="url(#b2)"/><path d="M672 500Q690 491 712 491.5L722 493.5L733 491.5Q752 491 768 500Q745 504 722 503Q700 504 672 500z" fill="#b67c78"/><path d="M677 502Q722 505 765 502Q750 516.5 722 517Q694 516.5 677 502z" fill="#d59a94"/><path d="M690 512Q722 520 754 512" stroke="#b87a70" stroke-width="3" fill="none" filter="url(#b2)" opacity=".7"/><path d="M673 500.5Q722 505 767 500.5" stroke="#8a5452" stroke-width="1.5" fill="none" filter="url(#b1)"/><path d="M663.6 484.0C666.9 479.9 675.1 475.8 681.7 472.7C688.3 469.6 697.0 465.6 703.0 465.2C709.0 464.8 714.1 469.4 718.0 470.5C721.9 471.6 723.0 472.7 726.5 472.0C730.0 471.3 733.6 466.2 739.3 466.3C745.0 466.4 754.7 469.8 760.6 472.7C766.5 475.6 771.6 479.9 774.5 484.0C777.4 488.1 778.5 495.0 778.0 497.0C777.5 499.0 776.0 497.0 771.3 496.0C766.6 495.0 757.5 491.4 750.0 490.8C742.5 490.2 731.8 492.7 726.5 492.5C721.2 492.3 724.8 489.8 718.0 489.5C711.2 489.2 693.8 489.9 686.0 490.8C678.2 491.7 675.0 494.0 671.0 495.0C667.0 496.0 663.2 498.8 662.0 497.0C660.8 495.2 660.3 488.1 663.6 484.0z" fill="#49352a" filter="url(#beardn)"/><clipPath id="beardc"><path d="M608.0 440.0C608.2 441.9 608.6 445.9 609.5 451.3C610.4 456.8 611.4 465.6 613.5 472.7C615.6 479.8 618.8 486.9 622.0 494.0C625.2 501.1 628.8 508.9 632.7 515.3C636.6 521.7 640.8 526.7 645.4 532.4C650.0 538.1 654.7 544.1 660.4 549.4C666.1 554.7 672.8 560.0 679.6 564.3C686.4 568.6 693.2 572.3 701.0 575.0C708.8 577.7 718.0 580.3 726.5 580.5C735.0 580.7 744.2 578.3 752.0 576.0C759.8 573.7 766.6 570.9 773.4 566.5C780.2 562.1 786.9 555.4 792.6 549.4C798.3 543.4 802.9 536.9 807.5 530.2C812.1 523.5 816.7 516.5 820.3 509.0C823.9 501.5 827.0 492.9 829.0 485.4C831.0 477.9 831.7 471.6 832.5 464.0C833.3 456.4 833.8 444.0 834.0 440.0L829.0 446.0C828.3 448.7 826.8 455.4 824.6 462.0C822.4 468.6 819.2 478.3 816.0 485.4C812.8 492.5 809.3 498.9 805.4 504.6C801.5 510.3 796.0 517.7 792.6 519.6C789.2 521.5 786.8 518.4 785.0 516.0C783.2 513.6 783.2 500.8 782.0 505.0C780.8 509.2 782.7 533.6 777.7 541.0C772.7 548.4 760.5 547.6 752.0 549.4C743.5 551.2 735.0 551.6 726.5 551.6C718.0 551.6 709.5 551.2 701.0 549.4C692.5 547.6 680.8 548.4 675.3 541.0C669.8 533.6 669.9 509.2 668.0 505.0C666.1 500.8 666.0 514.0 664.0 516.0C662.0 518.0 658.7 518.2 656.0 517.0C653.3 515.8 651.1 512.8 647.6 509.0C644.1 505.2 638.7 499.3 634.8 494.0C630.9 488.7 627.2 483.4 624.0 477.0C620.8 470.6 617.8 460.8 615.6 455.6C613.4 450.4 611.8 447.6 611.0 446.0z"/><path d="M663.6 484.0C666.9 479.9 675.1 475.8 681.7 472.7C688.3 469.6 697.0 465.6 703.0 465.2C709.0 464.8 714.1 469.4 718.0 470.5C721.9 471.6 723.0 472.7 726.5 472.0C730.0 471.3 733.6 466.2 739.3 466.3C745.0 466.4 754.7 469.8 760.6 472.7C766.5 475.6 771.6 479.9 774.5 484.0C777.4 488.1 778.5 495.0 778.0 497.0C777.5 499.0 776.0 497.0 771.3 496.0C766.6 495.0 757.5 491.4 750.0 490.8C742.5 490.2 731.8 492.7 726.5 492.5C721.2 492.3 724.8 489.8 718.0 489.5C711.2 489.2 693.8 489.9 686.0 490.8C678.2 491.7 675.0 494.0 671.0 495.0C667.0 496.0 663.2 498.8 662.0 497.0C660.8 495.2 660.3 488.1 663.6 484.0z"/><path d="M663.6 483.0C666.1 482.2 670.9 486.3 672.0 490.0C673.1 493.7 670.0 499.2 670.0 505.0C670.0 510.8 670.3 518.5 672.0 525.0C673.7 531.5 680.7 540.5 680.0 544.0C679.3 547.5 671.7 548.3 668.0 546.0C664.3 543.7 660.2 535.7 658.0 530.0C655.8 524.3 655.2 517.8 655.0 512.0C654.8 506.2 655.6 499.8 657.0 495.0C658.4 490.2 661.1 483.8 663.6 483.0z"/><path d="M774.5 483.0C772.0 482.2 768.6 486.3 768.0 490.0C767.4 493.7 770.3 499.2 771.0 505.0C771.7 510.8 772.5 518.5 772.0 525.0C771.5 531.5 766.7 540.5 768.0 544.0C769.3 547.5 776.3 548.3 780.0 546.0C783.7 543.7 787.8 535.7 790.0 530.0C792.2 524.3 794.2 517.8 793.0 512.0C791.8 506.2 786.1 499.8 783.0 495.0C779.9 490.2 777.0 483.8 774.5 483.0z"/></clipPath><g clip-path="url(#beardc)"><rect x="600" y="430" width="245" height="155" fill="#000" filter="url(#strk)" opacity=".38"/><rect x="640" y="535" width="165" height="50" fill="#000" filter="url(#strk)" opacity=".3"/></g><path d="M630.0 354.5C630.3 353.2 635.8 347.8 640.0 345.5C644.2 343.2 649.7 341.1 655.0 340.5C660.3 339.9 666.5 340.9 672.0 342.0C677.5 343.1 683.0 344.9 688.0 347.0C693.0 349.1 699.8 352.2 702.0 354.5C704.2 356.8 703.3 360.3 701.0 361.0C698.7 361.7 692.8 359.8 688.0 358.5C683.2 357.2 678.0 354.4 672.0 353.0C666.0 351.6 657.7 349.9 652.0 350.0C646.3 350.1 641.7 352.8 638.0 353.5C634.3 354.2 629.7 355.8 630.0 354.5z" fill="#43271a" filter="url(#b15)"/><path d="M817.0 354.0C816.5 352.5 810.2 347.5 806.0 345.5C801.8 343.5 797.0 342.3 792.0 342.0C787.0 341.7 781.0 342.5 776.0 343.5C771.0 344.5 766.7 346.1 762.0 348.0C757.3 349.9 750.2 352.8 748.0 355.0C745.8 357.2 746.7 360.8 749.0 361.5C751.3 362.2 757.5 360.2 762.0 359.0C766.5 357.8 770.7 355.8 776.0 354.5C781.3 353.2 788.5 351.5 794.0 351.5C799.5 351.5 805.2 354.1 809.0 354.5C812.8 354.9 817.5 355.5 817.0 354.0z" fill="#43271a" filter="url(#b15)"/><ellipse cx="666" cy="375" rx="27" ry="11" fill="#6e3a2c" filter="url(#b3)" opacity=".55"/><ellipse cx="781" cy="376" rx="27" ry="11" fill="#6e3a2c" filter="url(#b3)" opacity=".55"/><path d="M643.8 376.5C643.8 374.6 649.3 371.2 652.8 369.5C656.3 367.8 660.5 366.0 664.8 366.0C669.1 366.0 674.6 367.8 678.8 369.5C683.0 371.2 689.8 374.5 689.8 376.5C689.8 378.5 683.0 380.4 678.8 381.5C674.6 382.6 669.1 383.1 664.8 383.0C660.5 382.9 656.3 382.1 652.8 381.0C649.3 379.9 643.8 378.4 643.8 376.5z" fill="#4a2c22" filter="url(#b2)" opacity=".8" transform="translate(0,-1)"/><path d="M645.8 376.5C645.8 374.9 650.6 372.0 653.8 370.5C657.0 369.0 660.8 367.5 664.8 367.5C668.8 367.5 674.0 369.0 677.8 370.5C681.6 372.0 687.8 374.8 687.8 376.5C687.8 378.2 681.6 379.6 677.8 380.5C674.0 381.4 668.8 382.1 664.8 382.0C660.8 381.9 657.0 380.9 653.8 380.0C650.6 379.1 645.8 378.1 645.8 376.5z" fill="#c9bcb8"/><circle cx="666.8" cy="374.5" r="8.8" fill="#5e3f22"/><circle cx="666.8" cy="374.5" r="8.8" fill="none" stroke="#2e1c10" stroke-width="1.8"/><circle cx="666.8" cy="374.5" r="4.2" fill="#120a06"/><circle cx="669.3" cy="371.5" r="1.2" fill="#fff" opacity=".7"/><path d="M643.8 377.0C645.3 375.8 649.3 371.3 652.8 369.5C656.3 367.7 660.5 366.1 664.8 366.0C669.1 365.9 674.5 367.3 678.8 369.0C683.1 370.7 688.8 374.8 690.8 376.0" stroke="#24140e" stroke-width="2.6" fill="none"/><path d="M644.8 377.5C646.3 378.1 650.5 380.1 653.8 381.0C657.1 381.9 660.8 382.9 664.8 383.0C668.8 383.1 673.8 382.5 677.8 381.5C681.8 380.5 687.0 377.8 688.8 377.0" stroke="#7a4a3a" stroke-width="1.2" fill="none"/><path d="M803.5 377.8C803.5 375.9 798.0 372.6 794.5 370.8C791.0 369.1 786.8 367.3 782.5 367.3C778.2 367.3 772.7 369.1 768.5 370.8C764.3 372.6 757.5 375.8 757.5 377.8C757.5 379.8 764.3 381.7 768.5 382.8C772.7 383.9 778.2 384.4 782.5 384.3C786.8 384.2 791.0 383.4 794.5 382.3C798.0 381.2 803.5 379.7 803.5 377.8z" fill="#4a2c22" filter="url(#b2)" opacity=".8" transform="translate(0,-1)"/><path d="M801.5 377.8C801.5 376.2 796.7 373.3 793.5 371.8C790.3 370.3 786.5 368.8 782.5 368.8C778.5 368.8 773.3 370.3 769.5 371.8C765.7 373.3 759.5 376.1 759.5 377.8C759.5 379.5 765.7 380.9 769.5 381.8C773.3 382.7 778.5 383.4 782.5 383.3C786.5 383.2 790.3 382.2 793.5 381.3C796.7 380.4 801.5 379.4 801.5 377.8z" fill="#c9bcb8"/><circle cx="780.5" cy="375.8" r="8.8" fill="#5e3f22"/><circle cx="780.5" cy="375.8" r="8.8" fill="none" stroke="#2e1c10" stroke-width="1.8"/><circle cx="780.5" cy="375.8" r="4.2" fill="#120a06"/><circle cx="783" cy="372.8" r="1.2" fill="#fff" opacity=".7"/><path d="M803.5 378.3C802.0 377.1 798.0 372.6 794.5 370.8C791.0 369.0 786.8 367.4 782.5 367.3C778.2 367.2 772.8 368.6 768.5 370.3C764.2 372.0 758.5 376.1 756.5 377.3" stroke="#24140e" stroke-width="2.6" fill="none"/><path d="M802.5 378.8C801.0 379.4 796.8 381.4 793.5 382.3C790.2 383.2 786.5 384.2 782.5 384.3C778.5 384.4 773.5 383.8 769.5 382.8C765.5 381.8 760.3 379.1 758.5 378.3" stroke="#7a4a3a" stroke-width="1.2" fill="none"/></g><text x="290.5" y="159.0" font-size="9.5" fill="#d5d5d5" font-family="Liberation Sans, sans-serif">Verts:</text><text x="380" y="159.0" font-size="9.5" fill="#d5d5d5" text-anchor="end" font-family="Liberation Sans, sans-serif">91793</text><text x="429" y="159.0" font-size="9.5" fill="#d5d5d5" text-anchor="middle" font-family="Liberation Sans, sans-serif">0</text><text x="479.5" y="159.0" font-size="9.5" fill="#d5d5d5" text-anchor="middle" font-family="Liberation Sans, sans-serif">0</text><text x="290.5" y="174.7" font-size="9.5" fill="#d5d5d5" font-family="Liberation Sans, sans-serif">Edges:</text><text x="380" y="174.7" font-size="9.5" fill="#d5d5d5" text-anchor="end" font-family="Liberation Sans, sans-serif">109620</text><text x="429" y="174.7" font-size="9.5" fill="#d5d5d5" text-anchor="middle" font-family="Liberation Sans, sans-serif">0</text><text x="479.5" y="174.7" font-size="9.5" fill="#d5d5d5" text-anchor="middle" font-family="Liberation Sans, sans-serif">0</text><text x="290.5" y="190.4" font-size="9.5" fill="#d5d5d5" font-family="Liberation Sans, sans-serif">Faces:</text><text x="380" y="190.4" font-size="9.5" fill="#d5d5d5" text-anchor="end" font-family="Liberation Sans, sans-serif">49875</text><text x="429" y="190.4" font-size="9.5" fill="#d5d5d5" text-anchor="middle" font-family="Liberation Sans, sans-serif">0</text><text x="479.5" y="190.4" font-size="9.5" fill="#d5d5d5" text-anchor="middle" font-family="Liberation Sans, sans-serif">0</text><text x="290.5" y="206.1" font-size="9.5" fill="#d5d5d5" font-family="Liberation Sans, sans-serif">Tris:</text><text x="380" y="206.1" font-size="9.5" fill="#d5d5d5" text-anchor="end" font-family="Liberation Sans, sans-serif">91713</text><text x="429" y="206.1" font-size="9.5" fill="#d5d5d5" text-anchor="middle" font-family="Liberation Sans, sans-serif">0</text><text x="479.5" y="206.1" font-size="9.5" fill="#d5d5d5" text-anchor="middle" font-family="Liberation Sans, sans-serif">0</text><text x="290.5" y="221.8" font-size="9.5" fill="#d5d5d5" font-family="Liberation Sans, sans-serif">UVs:</text><text x="380" y="221.8" font-size="9.5" fill="#d5d5d5" text-anchor="end" font-family="Liberation Sans, sans-serif">93605</text><text x="429" y="221.8" font-size="9.5" fill="#d5d5d5" text-anchor="middle" font-family="Liberation Sans, sans-serif">0</text><text x="479.5" y="221.8" font-size="9.5" fill="#d5d5d5" text-anchor="middle" font-family="Liberation Sans, sans-serif">0</text><path d="M298.5 701V686" stroke="#3fcf3f" stroke-width="1.5"/><path d="M298.5 701H312" stroke="#e04040" stroke-width="1.5"/><circle cx="298.5" cy="701" r="1.5" fill="#2a4a9a"/><text x="296" y="687" font-size="6" fill="#3fcf3f" font-family="Liberation Sans, sans-serif">y</text><text x="311" y="700" font-size="6" fill="#e04040" font-family="Liberation Sans, sans-serif">x</text><text x="692" y="718" font-size="8" fill="#e6e6e6" font-family="Liberation Sans, sans-serif">persp</text></g></svg>
<div class="r" style="left:1122px;top:116px;width:4px;height:608px;background:#3a3a3a;"></div>
<div class="r" style="left:1126px;top:116px;width:358px;height:608px;background:#444444;"></div>
<span class="t" style="left:1134.5px;top:120.2px;font-size:9.3px;line-height:13.3px;color:#dcdcdc;transform:scaleX(0.8986);">List</span>
<span class="t" style="left:1159.5px;top:120.2px;font-size:9.3px;line-height:13.3px;color:#dcdcdc;transform:scaleX(0.9259);">Selected</span>
<span class="t" style="left:1204.5px;top:120.2px;font-size:9.3px;line-height:13.3px;color:#dcdcdc;transform:scaleX(0.9282);">Focus</span>
<span class="t" style="left:1240.0px;top:120.2px;font-size:9.3px;line-height:13.3px;color:#dcdcdc;transform:scaleX(1.0058);">Attributes</span>
<span class="t" style="left:1291.5px;top:120.2px;font-size:9.3px;line-height:13.3px;color:#dcdcdc;transform:scaleX(0.9514);">Display</span>
<span class="t" style="left:1332.0px;top:120.2px;font-size:9.3px;line-height:13.3px;color:#dcdcdc;transform:scaleX(0.9890);">Show</span>
<span class="t" style="left:1366.5px;top:120.2px;font-size:9.3px;line-height:13.3px;color:#dcdcdc;transform:scaleX(0.9676);">Help</span>
<span class="t" style="left:1189.0px;top:411.8px;font-size:9.3px;line-height:13.3px;color:#e4e4e4;transform:scaleX(0.9864);">Select an object in the scene to view and edit its attributes</span>
<div class="r" style="left:1128px;top:702px;width:116px;height:20px;background:#4d4d4d;"></div>
<div class="r" style="left:1247px;top:702px;width:119.5px;height:20px;background:#5d5d5d;"></div>
<div class="r" style="left:1368px;top:702px;width:116px;height:20px;background:#4d4d4d;"></div>
<span class="t" style="left:1175.0px;top:707.2px;font-size:9.3px;line-height:13.3px;color:#7c7c7c;transform:scaleX(0.9095);">Select</span>
<span class="t" style="left:1275.5px;top:707.2px;font-size:9.3px;line-height:13.3px;color:#f0f0f0;transform:scaleX(0.9996);">Load Attributes</span>
<span class="t" style="left:1408.0px;top:707.2px;font-size:9.3px;line-height:13.3px;color:#7c7c7c;transform:scaleX(0.9333);">Copy Tab</span>
<div class="r" style="left:1484px;top:116px;width:16px;height:608px;background:#3a3a3a;"></div>
<div class="r" style="left:1487px;top:118px;width:13px;height:120px;background:#404040;border-radius:2px 0 0 2px"></div>
<span class="t" style="left:1392.8px;top:171.3px;width:200px;text-align:center;font-size:9.3px;line-height:14px;color:#a8a8a8;transform:rotate(90deg) scaleX(0.9360);transform-origin:center center;">Channel Box / Layer Editor</span>
<div class="r" style="left:1487px;top:241px;width:13px;height:80px;background:#444444;border-radius:2px 0 0 2px"></div>
<span class="t" style="left:1392.8px;top:273.3px;width:200px;text-align:center;font-size:9.3px;line-height:14px;color:#f2f2f2;font-weight:bold;transform:rotate(90deg) scaleX(0.9242);transform-origin:center center;">Attribute Editor</span>
<div class="r" style="left:1487px;top:323px;width:13px;height:85px;background:#404040;border-radius:2px 0 0 2px"></div>
<span class="t" style="left:1392.8px;top:357.6px;width:200px;text-align:center;font-size:9.3px;line-height:14px;color:#a8a8a8;transform:rotate(90deg) scaleX(1.0302);transform-origin:center center;">Modeling Toolkit</span>
<div class="r" style="left:1487px;top:411px;width:13px;height:54px;background:#404040;border-radius:2px 0 0 2px"></div>
<span class="t" style="left:1392.8px;top:430.3px;width:200px;text-align:center;font-size:9.3px;line-height:14px;color:#a8a8a8;transform:rotate(90deg) scaleX(0.9314);transform-origin:center center;">Human IK</span>
<div class="r" style="left:1487px;top:467px;width:13px;height:38px;background:#404040;border-radius:2px 0 0 2px"></div>
<span class="t" style="left:1392.8px;top:478.0px;width:200px;text-align:center;font-size:9.3px;line-height:14px;color:#a8a8a8;transform:rotate(90deg) scaleX(0.8833);transform-origin:center center;">XGen</span>
<div class="r" style="left:1487px;top:508px;width:13px;height:136px;background:#404040;border-radius:2px 0 0 2px"></div>
<span class="t" style="left:1392.8px;top:568.3px;width:200px;text-align:center;font-size:9.3px;line-height:14px;color:#a8a8a8;transform:rotate(90deg) scaleX(0.9519);transform-origin:center center;">XGen Interactive Groom Editor</span>
<div class="r" style="left:0px;top:724px;width:1500px;height:4px;background:#3a3a3a;"></div>
<svg class="r" style="left:2px;top:730px;" width="6" height="25" viewBox="0 0 6 25"><g fill="#6a6a6a"><rect x="1" y="0" width="1" height="1"/><rect x="1" y="2" width="1" height="1"/><rect x="1" y="4" width="1" height="1"/><rect x="1" y="6" width="1" height="1"/><rect x="1" y="8" width="1" height="1"/><rect x="1" y="10" width="1" height="1"/><rect x="1" y="12" width="1" height="1"/><rect x="1" y="14" width="1" height="1"/><rect x="1" y="16" width="1" height="1"/><rect x="1" y="18" width="1" height="1"/><rect x="1" y="20" width="1" height="1"/><rect x="1" y="22" width="1" height="1"/><rect x="1" y="24" width="1" height="1"/><rect x="3" y="0" width="1" height="1"/><rect x="3" y="2" width="1" height="1"/><rect x="3" y="4" width="1" height="1"/><rect x="3" y="6" width="1" height="1"/><rect x="3" y="8" width="1" height="1"/><rect x="3" y="10" width="1" height="1"/><rect x="3" y="12" width="1" height="1"/><rect x="3" y="14" width="1" height="1"/><rect x="3" y="16" width="1" height="1"/><rect x="3" y="18" width="1" height="1"/><rect x="3" y="20" width="1" height="1"/><rect x="3" y="22" width="1" height="1"/><rect x="3" y="24" width="1" height="1"/></g></svg>
<div class="r" style="left:10px;top:730px;width:1259px;height:24px;background:#2b2b2b;"></div>
<div class="r" style="left:17px;top:730px;width:38.5px;height:24px;background:#5a5a5a;"></div>
<svg class="r" style="left:10px;top:730px;" width="1259" height="24" viewBox="0 0 1259 24"><rect x="5.9" y="11" width="1.3" height="13" fill="#bdbdbd"/><rect x="46.1" y="11" width="1.3" height="13" fill="#bdbdbd"/><rect x="86.4" y="11" width="1.3" height="13" fill="#bdbdbd"/><rect x="126.6" y="11" width="1.3" height="13" fill="#bdbdbd"/><rect x="166.8" y="11" width="1.3" height="13" fill="#bdbdbd"/><rect x="207.1" y="11" width="1.3" height="13" fill="#bdbdbd"/><rect x="247.3" y="11" width="1.3" height="13" fill="#bdbdbd"/><rect x="287.6" y="11" width="1.3" height="13" fill="#bdbdbd"/><rect x="327.8" y="11" width="1.3" height="13" fill="#bdbdbd"/><rect x="368.0" y="11" width="1.3" height="13" fill="#bdbdbd"/><rect x="408.3" y="11" width="1.3" height="13" fill="#bdbdbd"/><rect x="448.5" y="11" width="1.3" height="13" fill="#bdbdbd"/><rect x="488.7" y="11" width="1.3" height="13" fill="#bdbdbd"/><rect x="529.0" y="11" width="1.3" height="13" fill="#bdbdbd"/><rect x="569.2" y="11" width="1.3" height="13" fill="#bdbdbd"/><rect x="609.5" y="11" width="1.3" height="13" fill="#bdbdbd"/><rect x="649.7" y="11" width="1.3" height="13" fill="#bdbdbd"/><rect x="689.9" y="11" width="1.3" height="13" fill="#bdbdbd"/><rect x="730.2" y="11" width="1.3" height="13" fill="#bdbdbd"/><rect x="770.4" y="11" width="1.3" height="13" fill="#bdbdbd"/><rect x="810.6" y="11" width="1.3" height="13" fill="#bdbdbd"/><rect x="850.9" y="11" width="1.3" height="13" fill="#bdbdbd"/><rect x="891.1" y="11" width="1.3" height="13" fill="#bdbdbd"/><rect x="931.4" y="11" width="1.3" height="13" fill="#bdbdbd"/><rect x="971.6" y="11" width="1.3" height="13" fill="#bdbdbd"/><rect x="1011.8" y="11" width="1.3" height="13" fill="#bdbdbd"/><rect x="1052.1" y="11" width="1.3" height="13" fill="#bdbdbd"/><rect x="1092.3" y="11" width="1.3" height="13" fill="#bdbdbd"/><rect x="1132.5" y="11" width="1.3" height="13" fill="#bdbdbd"/><rect x="1172.8" y="11" width="1.3" height="13" fill="#bdbdbd"/><rect x="1213.0" y="11" width="1.3" height="13" fill="#bdbdbd"/></svg>
<span class="t" style="left:23.7px;top:729.2px;font-size:9.3px;line-height:13.3px;color:#969696;transform:scaleX(0.9000);">0</span>
<span class="t" style="left:64.4px;top:729.2px;font-size:9.3px;line-height:13.3px;color:#969696;transform:scaleX(0.9000);">1</span>
<span class="t" style="left:104.7px;top:729.2px;font-size:9.3px;line-height:13.3px;color:#969696;transform:scaleX(0.9000);">2</span>
<span class="t" style="left:144.9px;top:729.2px;font-size:9.3px;line-height:13.3px;color:#969696;transform:scaleX(0.9000);">3</span>
<span class="t" style="left:185.1px;top:729.2px;font-size:9.3px;line-height:13.3px;color:#969696;transform:scaleX(0.9000);">4</span>
<span class="t" style="left:225.4px;top:729.2px;font-size:9.3px;line-height:13.3px;color:#969696;transform:scaleX(0.9000);">5</span>
<span class="t" style="left:265.6px;top:729.2px;font-size:9.3px;line-height:13.3px;color:#969696;transform:scaleX(0.9000);">6</span>
<span class="t" style="left:305.9px;top:729.2px;font-size:9.3px;line-height:13.3px;color:#969696;transform:scaleX(0.9000);">7</span>
<span class="t" style="left:346.1px;top:729.2px;font-size:9.3px;line-height:13.3px;color:#969696;transform:scaleX(0.9000);">8</span>
<span class="t" style="left:386.3px;top:729.2px;font-size:9.3px;line-height:13.3px;color:#969696;transform:scaleX(0.9000);">9</span>
<span class="t" style="left:426.6px;top:729.2px;font-size:9.3px;line-height:13.3px;color:#969696;transform:scaleX(0.9000);">10</span>
<span class="t" style="left:466.8px;top:729.2px;font-size:9.3px;line-height:13.3px;color:#969696;transform:scaleX(0.9000);">11</span>
<span class="t" style="left:507.0px;top:729.2px;font-size:9.3px;line-height:13.3px;color:#969696;transform:scaleX(0.9000);">12</span>
<span class="t" style="left:547.3px;top:729.2px;font-size:9.3px;line-height:13.3px;color:#969696;transform:scaleX(0.9000);">13</span>
<span class="t" style="left:587.5px;top:729.2px;font-size:9.3px;line-height:13.3px;color:#969696;transform:scaleX(0.9000);">14</span>
<span class="t" style="left:627.8px;top:729.2px;font-size:9.3px;line-height:13.3px;color:#969696;transform:scaleX(0.9000);">15</span>
<span class="t" style="left:668.0px;top:729.2px;font-size:9.3px;line-height:13.3px;color:#969696;transform:scaleX(0.9000);">16</span>
<span class="t" style="left:708.2px;top:729.2px;font-size:9.3px;line-height:13.3px;color:#969696;transform:scaleX(0.9000);">17</span>
<span class="t" style="left:748.5px;top:729.2px;font-size:9.3px;line-height:13.3px;color:#969696;transform:scaleX(0.9000);">18</span>
<span class="t" style="left:788.7px;top:729.2px;font-size:9.3px;line-height:13.3px;color:#969696;transform:scaleX(0.9000);">19</span>
<span class="t" style="left:828.9px;top:729.2px;font-size:9.3px;line-height:13.3px;color:#969696;transform:scaleX(0.9000);">20</span>
<span class="t" style="left:869.2px;top:729.2px;font-size:9.3px;line-height:13.3px;color:#969696;transform:scaleX(0.9000);">21</span>
<span class="t" style="left:909.4px;top:729.2px;font-size:9.3px;line-height:13.3px;color:#969696;transform:scaleX(0.9000);">22</span>
<span class="t" style="left:949.7px;top:729.2px;font-size:9.3px;line-height:13.3px;color:#969696;transform:scaleX(0.9000);">23</span>
<span class="t" style="left:989.9px;top:729.2px;font-size:9.3px;line-height:13.3px;color:#969696;transform:scaleX(0.9000);">24</span>
<span class="t" style="left:1030.1px;top:729.2px;font-size:9.3px;line-height:13.3px;color:#969696;transform:scaleX(0.9000);">25</span>
<span class="t" style="left:1070.4px;top:729.2px;font-size:9.3px;line-height:13.3px;color:#969696;transform:scaleX(0.9000);">26</span>
<span class="t" style="left:1110.6px;top:729.2px;font-size:9.3px;line-height:13.3px;color:#969696;transform:scaleX(0.9000);">27</span>
<span class="t" style="left:1150.8px;top:729.2px;font-size:9.3px;line-height:13.3px;color:#969696;transform:scaleX(0.9000);">28</span>
<span class="t" style="left:1191.1px;top:729.2px;font-size:9.3px;line-height:13.3px;color:#969696;transform:scaleX(0.9000);">29</span>
<span class="t" style="left:1231.3px;top:729.2px;font-size:9.3px;line-height:13.3px;color:#969696;transform:scaleX(0.9000);">30</span>
<span class="t" style="left:24.0px;top:741.6px;font-size:10px;line-height:14px;color:#f4f4f4;transform:scaleX(0.9000);">0</span>
<div class="r" style="left:1275px;top:733px;width:69px;height:18px;background:#2b2b2b;border-radius:2px"></div>
<span class="t" style="left:1279.0px;top:736.6px;font-size:10px;line-height:14px;color:#dcdcdc;transform:scaleX(0.9000);">0</span>
<svg class="r" style="left:1348px;top:734.5px;" width="150" height="15" viewBox="0 0 150 15"><rect x="2" y="2" width="1.8" height="11" fill="#dedede"/><path d="M9 2v11l-5.5-5.5z" fill="#dedede"/><path d="M14 2v11l-5.5-5.5z" fill="#dedede"/><rect x="22" y="2" width="1.8" height="11" fill="#dedede"/><path d="M31 2v11l-7-5.5z" fill="#dedede"/><rect x="41.5" y="2" width="1.8" height="11" fill="#e8824a"/><path d="M50.5 2v11l-7-5.5z" fill="#dedede"/><path d="M67 2v11l-10-5.5z" fill="#dedede"/><path d="M76.5 2v11l10-5.5z" fill="#dedede"/><path d="M93 2v11l7-5.5z" fill="#dedede"/><rect x="100.5" y="2" width="1.8" height="11" fill="#e8824a"/><path d="M111 2v11l7-5.5z" fill="#dedede"/><rect x="118.5" y="2" width="1.8" height="11" fill="#dedede"/><path d="M126.5 2v11l5.5-5.5z" fill="#dedede"/><path d="M131.5 2v11l5.5-5.5z" fill="#dedede"/><rect x="137" y="2" width="1.8" height="11" fill="#dedede"/></svg>
<div class="r" style="left:0px;top:757px;width:1500px;height:1px;background:#3a3a3a;"></div>
<svg class="r" style="left:2px;top:760px;" width="6" height="22" viewBox="0 0 6 22"><g fill="#6a6a6a"><rect x="1" y="0" width="1" height="1"/><rect x="1" y="2" width="1" height="1"/><rect x="1" y="4" width="1" height="1"/><rect x="1" y="6" width="1" height="1"/><rect x="1" y="8" width="1" height="1"/><rect x="1" y="10" width="1" height="1"/><rect x="1" y="12" width="1" height="1"/><rect x="1" y="14" width="1" height="1"/><rect x="1" y="16" width="1" height="1"/><rect x="1" y="18" width="1" height="1"/><rect x="1" y="20" width="1" height="1"/><rect x="3" y="0" width="1" height="1"/><rect x="3" y="2" width="1" height="1"/><rect x="3" y="4" width="1" height="1"/><rect x="3" y="6" width="1" height="1"/><rect x="3" y="8" width="1" height="1"/><rect x="3" y="10" width="1" height="1"/><rect x="3" y="12" width="1" height="1"/><rect x="3" y="14" width="1" height="1"/><rect x="3" y="16" width="1" height="1"/><rect x="3" y="18" width="1" height="1"/><rect x="3" y="20" width="1" height="1"/></g></svg>
<div class="r" style="left:11px;top:763px;width:68.5px;height:18.5px;background:#2b2b2b;border-radius:2px"></div>
<div class="r" style="left:86px;top:763px;width:68.5px;height:18.5px;background:#2b2b2b;border-radius:2px"></div>
<span class="t" style="left:15.0px;top:766.9px;font-size:10px;line-height:14px;color:#dcdcdc;transform:scaleX(0.9000);">0</span>
<span class="t" style="left:90.0px;top:766.9px;font-size:10px;line-height:14px;color:#dcdcdc;transform:scaleX(0.9000);">0</span>
<div class="r" style="left:160px;top:763px;width:716px;height:18.5px;background:#373737;border-radius:3px"></div>
<div class="r" style="left:164px;top:764.5px;width:709px;height:15.5px;background:#5d5d5d;border-radius:3px"></div>
<div class="r" style="left:166.5px;top:766.5px;width:11px;height:11px;background:#a0a0a0;border-radius:2.5px"></div>
<div class="r" style="left:861px;top:766.5px;width:11px;height:11px;background:#a0a0a0;border-radius:2.5px"></div>
<span class="t" style="left:181.0px;top:767.5px;font-size:9.3px;line-height:13.3px;color:#e0e0e0;transform:scaleX(0.9000);">0</span>
<span class="t" style="left:847.0px;top:767.5px;font-size:9.3px;line-height:13.3px;color:#e0e0e0;transform:scaleX(0.9000);">30</span>
<div class="r" style="left:884px;top:763px;width:68.5px;height:18.5px;background:#2b2b2b;border-radius:2px"></div>
<div class="r" style="left:959px;top:763px;width:68.5px;height:18.5px;background:#2b2b2b;border-radius:2px"></div>
<span class="t" style="left:888.5px;top:766.9px;font-size:10px;line-height:14px;color:#dcdcdc;transform:scaleX(0.9000);">30</span>
<span class="t" style="left:963.5px;top:766.9px;font-size:10px;line-height:14px;color:#dcdcdc;transform:scaleX(0.9000);">30</span>
<div class="r" style="left:1032px;top:765px;width:2px;height:14px;background:#8a8a8a;border-radius:1px"></div>
<svg class="r" style="left:1043px;top:764px;" width="14" height="16" viewBox="0 0 14 16"><path d="M1.5 2.5h7v12l-3.5-3.5-3.5 3.5z" fill="#e8824a"/><path d="M10.5 0.5v6M7.5 3.5h6" stroke="#f0f0f0" stroke-width="1.6"/></svg>
<div class="r" style="left:1065.5px;top:765px;width:2px;height:14px;background:#8a8a8a;border-radius:1px"></div>
<svg class="r" style="left:1079px;top:770px;" width="7" height="5" viewBox="0 0 7 5"><path d="M0.5 0.5h6L3.5 4z" fill="#9a9a9a"/></svg>
<div class="r" style="left:1091.5px;top:764px;width:79.5px;height:17px;background:#404040;border:1px solid #4e4e4e;box-sizing:border-box"></div>
<span class="t" style="left:1096.0px;top:767.2px;font-size:9.3px;line-height:13.3px;color:#dcdcdc;transform:scaleX(0.9398);">No Character Set</span>
<svg class="r" style="left:1180px;top:770px;" width="7" height="5" viewBox="0 0 7 5"><path d="M0.5 0.5h6L3.5 4z" fill="#9a9a9a"/></svg>
<div class="r" style="left:1192.5px;top:764px;width:79px;height:17px;background:#404040;border:1px solid #4e4e4e;box-sizing:border-box"></div>
<span class="t" style="left:1197.0px;top:767.2px;font-size:9.3px;line-height:13.3px;color:#dcdcdc;transform:scaleX(0.9348);">No Anim Layer</span>
<div class="r" style="left:1278.5px;top:765px;width:2px;height:14px;background:#8a8a8a;border-radius:1px"></div>
<div class="r" style="left:1290px;top:764px;width:74.5px;height:16px;background:#5d5d5d;border-radius:1px"></div>
<div class="r" style="left:1349px;top:764px;width:15.5px;height:16px;background:#565656;"></div>
<span class="t" style="left:1293.0px;top:767.0px;font-size:9.3px;line-height:13.3px;color:#dcdcdc;transform:scaleX(0.9477);">24 fps</span>
<svg class="r" style="left:1353px;top:769.5px;" width="9" height="6" viewBox="0 0 9 6"><path d="M0.5 0.5h8L4.5 5z" fill="#d8d8d8"/></svg>
<svg class="r" style="left:1374px;top:765px;" width="16" height="14" viewBox="0 0 16 14"><path d="M2 8V6.5q0-3 3-3h8M14 6v1.5q0 3-3 3H3" stroke="#e0e0e0" stroke-width="1.5" fill="none"/><path d="M11 1l3 2.5-3 2.5zM5 8l-3 2.5 3 2.5z" fill="#e0e0e0"/></svg>
<svg class="r" style="left:1397px;top:765px;" width="16" height="14" viewBox="0 0 16 14"><rect x="0.5" y="3" width="13" height="9" fill="#e8824a"/><g fill="#444"><rect x="2" y="4" width="2" height="2"/><rect x="5.5" y="4" width="2" height="2"/><rect x="9" y="4" width="2" height="2"/><rect x="2" y="9" width="2" height="2"/><rect x="5.5" y="9" width="2" height="2"/><rect x="9" y="9" width="2" height="2"/></g><path d="M12 0.5l3.5 2.5-3.5 2.5z" fill="#e0e0e0"/></svg>
<div class="r" style="left:1421.5px;top:765px;width:2px;height:14px;background:#8a8a8a;border-radius:1px"></div>
<svg class="r" style="left:1432px;top:765px;" width="16" height="14" viewBox="0 0 16 14"><path d="M1 5h3l4-3.5v11L4 9H1z" fill="#d8d8d8"/><path d="M10 4.5q2 2.5 0 5M12 2.5q3.5 4.5 0 9" stroke="#d8d8d8" stroke-width="1.2" fill="none"/></svg>
<svg class="r" style="left:1454px;top:764px;" width="16" height="16" viewBox="0 0 16 16"><circle cx="8" cy="8" r="6" fill="none" stroke="#e0e0e0" stroke-width="1.5"/><path d="M8 4.5V8l2.5 1.5" stroke="#e8824a" stroke-width="1.4" fill="none"/><path d="M11 11h4.5M13 9v4.5" stroke="#e0e0e0" stroke-width="1.3"/></svg>
<svg class="r" style="left:1476px;top:764px;" width="17" height="16" viewBox="0 0 17 16"><circle cx="7.5" cy="2.5" r="2" fill="#e8824a"/><path d="M3 6.5l4.5-1.5 3 2.5 3.5-0.5M7.5 5.5L7 10l3.5 2-1 3.5M7 10l-3 1-2.5 3" stroke="#e8824a" stroke-width="1.7" fill="none" stroke-linecap="round"/><path d="M11 1.5l4 4M15 1.5l-4 4" stroke="#f0f0f0" stroke-width="1.3"/></svg>
<div class="r" style="left:0px;top:785px;width:1500px;height:1px;background:#3a3a3a;"></div>
<svg class="r" style="left:2px;top:789px;" width="6" height="22" viewBox="0 0 6 22"><g fill="#6a6a6a"><rect x="1" y="0" width="1" height="1"/><rect x="1" y="2" width="1" height="1"/><rect x="1" y="4" width="1" height="1"/><rect x="1" y="6" width="1" height="1"/><rect x="1" y="8" width="1" height="1"/><rect x="1" y="10" width="1" height="1"/><rect x="1" y="12" width="1" height="1"/><rect x="1" y="14" width="1" height="1"/><rect x="1" y="16" width="1" height="1"/><rect x="1" y="18" width="1" height="1"/><rect x="1" y="20" width="1" height="1"/><rect x="3" y="0" width="1" height="1"/><rect x="3" y="2" width="1" height="1"/><rect x="3" y="4" width="1" height="1"/><rect x="3" y="6" width="1" height="1"/><rect x="3" y="8" width="1" height="1"/><rect x="3" y="10" width="1" height="1"/><rect x="3" y="12" width="1" height="1"/><rect x="3" y="14" width="1" height="1"/><rect x="3" y="16" width="1" height="1"/><rect x="3" y="18" width="1" height="1"/><rect x="3" y="20" width="1" height="1"/></g></svg>
<svg class="r" style="left:10.5px;top:793.5px;" width="14" height="14" viewBox="0 0 14 14"><circle cx="6.5" cy="6.5" r="6" fill="#8a8a8a"/><text x="6.5" y="10.3" font-size="10.5" font-weight="bold" font-family="Liberation Sans, sans-serif" text-anchor="middle" fill="#444">?</text></svg>
<svg class="r" style="left:639px;top:789px;" width="4" height="22" viewBox="0 0 4 22"><g fill="#6a6a6a"><rect x="1" y="0" width="1" height="1"/><rect x="1" y="2" width="1" height="1"/><rect x="1" y="4" width="1" height="1"/><rect x="1" y="6" width="1" height="1"/><rect x="1" y="8" width="1" height="1"/><rect x="1" y="10" width="1" height="1"/><rect x="1" y="12" width="1" height="1"/><rect x="1" y="14" width="1" height="1"/><rect x="1" y="16" width="1" height="1"/><rect x="1" y="18" width="1" height="1"/><rect x="1" y="20" width="1" height="1"/></g></svg>
<span class="t" style="left:656.5px;top:794.1px;font-size:10px;line-height:14px;color:#dcdcdc;transform:scaleX(0.8511);">MEL</span>
<div class="r" style="left:684px;top:791px;width:320px;height:18px;background:#2b2b2b;border-radius:2px"></div>
<svg class="r" style="left:1006px;top:794px;" width="3" height="12" viewBox="0 0 3 12"><g fill="#6a6a6a"><rect x="1" y="0" width="1" height="1"/><rect x="1" y="2" width="1" height="1"/><rect x="1" y="4" width="1" height="1"/><rect x="1" y="6" width="1" height="1"/><rect x="1" y="8" width="1" height="1"/><rect x="1" y="10" width="1" height="1"/></g></svg>
<div class="r" style="left:1010px;top:791px;width:465px;height:18px;background:#2b2b2b;border-radius:2px"></div>
<svg class="r" style="left:1478px;top:792px;" width="15" height="16" viewBox="0 0 15 16"><rect x="0.5" y="0.5" width="14" height="15" fill="#cfcfcf"/><rect x="0.5" y="0.5" width="14" height="3" fill="#9a9a9a"/><text x="7.5" y="12.5" font-size="8" font-weight="bold" font-family="Liberation Sans, sans-serif" text-anchor="middle" fill="#333">{;}</text></svg>
<div class="r" style="left:0px;top:812.5px;width:1500px;height:31.5px;background:linear-gradient(90deg,#1b3945 0%,#1c3848 45%,#1b2f4d 75%,#1b2c50 100%);"></div>
<svg class="r" style="left:12px;top:822px;" width="14" height="14" viewBox="0 0 14 14"><g fill="#ffffff"><path d="M0 2l5.7-0.8v5.4H0zM6.5 1.1L14 0v6.6H6.5zM0 7.4h5.7v5.4L0 12zM6.5 7.4H14V14l-7.5-1.1z"/></g></svg>
<div class="r" style="left:38px;top:813px;width:224.5px;height:31px;background:#f3f3f3;"></div>
<svg class="r" style="left:46px;top:821px;" width="15" height="15" viewBox="0 0 15 15"><circle cx="9" cy="6" r="4.5" fill="none" stroke="#222" stroke-width="1.3"/><path d="M5.8 9.2L1 14" stroke="#222" stroke-width="1.4"/></svg>
<span class="t" style="left:69.0px;top:821.2px;font-size:12.3px;line-height:16.3px;color:#2a2a2a;transform:scaleX(0.9374);">Taper ici pour rechercher</span>
<svg class="r" style="left:274px;top:821px;" width="16" height="14" viewBox="0 0 16 14"><rect x="1.5" y="2.5" width="9" height="9" fill="none" stroke="#fff" stroke-width="1.2"/><path d="M0 5h1.5M0 9h1.5M10.5 5H12M10.5 9H12" stroke="#fff"/><rect x="12.5" y="2.5" width="1.5" height="1.5" fill="#fff"/><rect x="12.5" y="5.5" width="1.5" height="6" fill="#fff"/></svg>
<svg class="r" style="left:310px;top:817px;" width="22" height="22" viewBox="0 0 22 22"><defs><linearGradient id="eg" x1="0" y1="0" x2="1" y2="1"><stop offset="0" stop-color="#35c1f1"/><stop offset=".5" stop-color="#1b7fd6"/><stop offset="1" stop-color="#49d668"/></linearGradient></defs><circle cx="11" cy="11" r="10" fill="url(#eg)"/><path d="M4 13q1-7 8-7 6 0 7 5-3-2-7-1-3 1-3 4t4 5q-8 1-9-6z" fill="#0c59a4" opacity=".75"/><path d="M13 9q5-1 7 2-1 5-7 4 2-1 2-3t-2-3z" fill="#7ee06a" opacity=".55"/></svg>
<svg class="r" style="left:349px;top:818px;" width="22" height="20" viewBox="0 0 22 20"><path d="M1 2h7l2 2.5h11V18H1z" fill="#f7c948"/><path d="M1 6h20v12H1z" fill="#fbdc6f"/><rect x="6" y="11" width="10" height="7" fill="#3d8ad8"/><rect x="8.5" y="14" width="5" height="4" fill="#fbdc6f"/></svg>
<div class="r" style="left:343px;top:842px;width:22px;height:2px;background:#8db8e8;"></div>
<div class="r" style="left:365px;top:842px;width:6px;height:2px;background:#6a8fb8;"></div>
<svg class="r" style="left:387px;top:817px;" width="22" height="22" viewBox="0 0 22 22"><path d="M7 6V4.5q0-2.5 4-2.5t4 2.5V6" stroke="#3d9ae0" stroke-width="1.6" fill="none"/><rect x="2" y="6" width="18" height="14" rx="2" fill="#f2f2f2"/><rect x="7" y="9" width="3.5" height="3.5" fill="#f25022"/><rect x="11.5" y="9" width="3.5" height="3.5" fill="#7fba00"/><rect x="7" y="13.5" width="3.5" height="3.5" fill="#00a4ef"/><rect x="11.5" y="13.5" width="3.5" height="3.5" fill="#ffb900"/></svg>
<svg class="r" style="left:425px;top:819px;" width="22" height="18" viewBox="0 0 22 18"><path d="M1 7l10-6.5L21 7v10.5H1z" fill="#1e88e5"/><path d="M1 7.5l10 6 10-6v10H1z" fill="#3fa9f5"/><path d="M2 7.5l9-5.5 9 5.5-9 5.5z" fill="#e8f4ff"/><path d="M1 17.5l8-6.5 2 1.2 2-1.2 8 6.5z" fill="#2d9cf0"/></svg>
<svg class="r" style="left:463px;top:817px;" width="22" height="22" viewBox="0 0 22 22"><ellipse cx="11" cy="11" rx="10" ry="10.5" fill="#e0242c"/><ellipse cx="11" cy="11" rx="4.3" ry="7.5" fill="#1b3647"/><ellipse cx="11" cy="11" rx="10" ry="10.5" fill="none" stroke="#a3121a" stroke-width=".8"/></svg>
<svg class="r" style="left:502px;top:817px;" width="22" height="22" viewBox="0 0 22 22"><circle cx="11" cy="11" r="10" fill="#fbbc05"/><path d="M11 11L2.34 6A10 10 0 0 1 19.66 6z" fill="#ea4335"/><path d="M11 11L2.34 6A10 10 0 0 0 11 21z" fill="#34a853"/><path d="M11 1A10 10 0 0 1 19.66 6H11z" fill="#ea4335"/><circle cx="11" cy="11" r="4.6" fill="#fff"/><circle cx="11" cy="11" r="3.6" fill="#4285f4"/></svg>
<div class="r" style="left:496.5px;top:842px;width:27px;height:2px;background:#8db8e8;"></div>
<div class="r" style="left:523.5px;top:842px;width:7px;height:2px;background:#6a8fb8;"></div>
<div class="r" style="left:532px;top:813px;width:37px;height:31px;background:#4d6670;"></div>
<div class="r" style="left:532px;top:842px;width:37px;height:2px;background:#a5cdf0;"></div>
<svg class="r" style="left:540px;top:818px;" width="21" height="20" viewBox="0 0 21 20"><rect x="0.5" y="0.5" width="20" height="19" fill="#ecf6f6"/><path d="M3 15V3.5h3l4.5 7 4.5-7h3V15h-3V9l-4 6h-1l-4-6v6z" fill="#17a2ad"/><path d="M3 15V3.5l3 3V15zM18 15V3.5l-3 3V15z" fill="#0c6d78"/><rect x="10" y="15.5" width="8" height="2.5" fill="#17a2ad"/></svg>
<svg class="r" style="left:1186px;top:818px;" width="26" height="22" viewBox="0 0 26 22"><circle cx="15" cy="11" r="7" fill="#f7a928"/><circle cx="12.5" cy="9" r="6" fill="#1c3048"/><path d="M3 8.5a3.5 3.5 0 0 1 6.5-2 3 3 0 0 1 3 3.5H4.5A2 2 0 0 1 3 8.5z" fill="#e4ecf6"/><path d="M11 18.5a3.5 3.5 0 0 1 6.5-2 3 3 0 0 1 3 3.5h-8a2 2 0 0 1-1.5-1.5z" fill="#dfe7f2"/></svg>
<span class="t" style="left:1214.0px;top:821.4px;font-size:11.5px;line-height:15.5px;color:#ffffff;transform:scaleX(0.8562);">15°C</span>
<span class="t" style="left:1243.0px;top:821.4px;font-size:11.5px;line-height:15.5px;color:#ffffff;transform:scaleX(0.8840);">Eclaircies</span>
<svg class="r" style="left:1303px;top:823px;" width="14" height="9" viewBox="0 0 14 9"><path d="M2 7.5L7 2.5l5 5" stroke="#fff" stroke-width="1.3" fill="none"/></svg>
<svg class="r" style="left:1323px;top:820px;" width="12" height="16" viewBox="0 0 12 16"><rect x="1.5" y="2.5" width="8" height="9" rx="2" fill="none" stroke="#fff" stroke-width="1.1"/><circle cx="5.5" cy="7" r="1.6" fill="none" stroke="#fff"/><path d="M9.5 5.5l2-1v5l-2-1M2 14q3.5 1.5 7 0" stroke="#fff" fill="none"/></svg>
<svg class="r" style="left:1342px;top:821px;" width="14" height="14" viewBox="0 0 14 14"><g fill="none" stroke="#fff" stroke-width="1.1"><path d="M2 13A11 11 0 0 1 13 2"/><path d="M5 13a8 8 0 0 1 8-8" /><path d="M8 13a5 5 0 0 1 5-5"/></g><circle cx="12" cy="12" r="1.3" fill="#fff"/></svg>
<svg class="r" style="left:1359px;top:821px;" width="16" height="14" viewBox="0 0 16 14"><path d="M1.5 5h2.5l3.5-3v10L4 9H1.5z" fill="none" stroke="#fff" stroke-width="1.1"/><path d="M9.5 4.5q1.5 2.5 0 5M11.5 3q2.5 4 0 8M13.5 1.5q3.5 5.5 0 11" stroke="#fff" stroke-width="1" fill="none"/></svg>
<span class="t" style="left:1381.0px;top:822.1px;font-size:10px;line-height:14px;color:#ffffff;transform:scaleX(0.8250);">FRA</span>
<span class="t" style="left:1419.5px;top:814.9px;font-size:10px;line-height:14px;color:#ffffff;transform:scaleX(0.8991);">01:40</span>
<span class="t" style="left:1408.5px;top:829.1px;font-size:10px;line-height:14px;color:#ffffff;transform:scaleX(0.9228);">11/05/2024</span>
<svg class="r" style="left:1465px;top:820px;" width="20" height="20" viewBox="0 0 20 20"><path d="M2.5 2.5h12v9h-7l-3 3v-3h-2z" fill="#fff"/><path d="M5 5.5h7M5 8h7" stroke="#1c3050" stroke-width="1"/><circle cx="14" cy="13" r="4.8" fill="#1c3050" stroke="#fff" stroke-width="1"/><text x="14" y="16" font-size="8" font-weight="bold" font-family="Liberation Sans, sans-serif" text-anchor="middle" fill="#fff">4</text></svg>
<div class="r" style="left:1496px;top:813px;width:1px;height:31px;background:#6a7a90;"></div>
</div></body></html>
